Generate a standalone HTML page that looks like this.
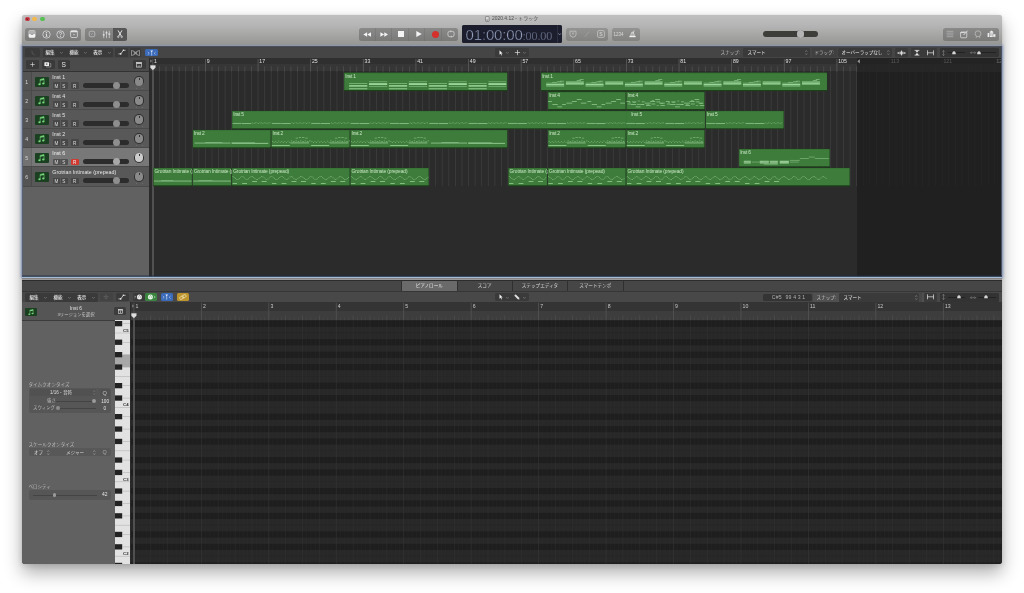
<!DOCTYPE html>
<html lang="ja"><head><meta charset="utf-8"><title>2020.4.12 - トラック</title>
<style>
html,body{margin:0;padding:0;background:#fff;width:1024px;height:593px;overflow:hidden}
body{font-family:"Liberation Sans","Noto Sans CJK JP",sans-serif;position:relative}
#win{will-change:transform;position:absolute;left:22px;top:15px;width:980px;height:548.5px;background:linear-gradient(#c0c0c0,#c0c0c0 40px,#2b2b2b 40px);border-radius:3px;overflow:hidden;box-shadow:0 0 1px rgba(0,0,0,.22),0 9px 18px rgba(0,0,0,.32),0 2px 6px rgba(0,0,0,.12)}
#win div{position:absolute;box-sizing:border-box}
#win svg{position:absolute;overflow:visible}
.t{white-space:nowrap}
.grp{background:rgba(40,40,40,.29);border-radius:2.5px}
.dk{background:#3a3a3a;border-radius:1.5px}
</style></head>
<body>
<div style="position:absolute;left:22px;top:46px;width:980px;height:231px;box-shadow:0 0 2.5px 0.6px rgba(120,150,210,.7)"></div>
<div id="win">
<div style="left:0.00px;top:0.00px;width:980.00px;height:31.50px;background:linear-gradient(#c0c0c0,#b6b6b6 30%,#a6a6a5 62%,#979795 90%,#949494)"></div>
<div style="left:2.95px;top:1.65px;width:4.70px;height:4.70px;background:#cf4048;border-radius:50%"></div>
<div style="left:10.45px;top:1.65px;width:4.70px;height:4.70px;background:#f2b94a;border-radius:50%"></div>
<div style="left:18.15px;top:1.65px;width:4.70px;height:4.70px;background:#55bf52;border-radius:50%"></div>
<svg style="left:4.00px;top:2.70px" width="2.6" height="2.6" viewBox="0 0 2.6 2.6"><path d="M0.3 0.3L2.3 2.3M2.3 0.3L0.3 2.3" stroke="#6e0f1c" stroke-width="0.8"/></svg>
<svg style="left:462.8px;top:1px" width="5" height="6" viewBox="0 0 5 6"><rect x="0.5" y="0.5" width="3.6" height="5" rx="0.6" fill="#d8d8d8" stroke="#666" stroke-width="0.6"/><rect x="1.3" y="3.6" width="2" height="1" fill="#777"/></svg>
<div class="t" style="left:470.00px;top:1.33px;font-size:4.95px;line-height:5.94px;color:#4e4e4e;">2020.4.12 - トラック</div>
<div class="grp" style="left:3.00px;top:12.80px;width:56.00px;height:12.80px;"></div>
<div class="grp" style="left:63.00px;top:12.80px;width:42.00px;height:12.80px;"></div>
<div style="left:91.00px;top:12.80px;width:14.00px;height:12.80px;background:#565656;border-radius:0 2.5px 2.5px 0"></div>
<svg style="left:6.00px;top:15.20px" width="8" height="8" viewBox="0 0 8 8" preserveAspectRatio="none"><rect x="0.9" y="0.6" width="6.2" height="6.8" rx="1" fill="#a2a2a2" stroke="#e4e4e4" stroke-width="0.6"/><path d="M0.9 4.1h1.6l0.5 1h2l0.5-1h1.6V6.4Q7.1 7.4 6.1 7.4H1.9Q0.9 7.4 0.9 6.4z" fill="#f2f2f2"/><path d="M2.2 1.9h3.6M2.2 2.9h3.6" stroke="#e4e4e4" stroke-width="0.4" opacity="0.8"/></svg>
<svg style="left:19.50px;top:14.70px" width="9" height="9" viewBox="0 0 9 9" preserveAspectRatio="none"><circle cx="4.5" cy="4.5" r="3.7" fill="none" stroke="#e4e4e4" stroke-width="0.7"/><rect x="4.05" y="3.8" width="1" height="2.7" fill="#e4e4e4"/><circle cx="4.5" cy="2.6" r="0.65" fill="#e4e4e4"/><rect x="3.5" y="3.8" width="1" height="0.5" fill="#e4e4e4"/><rect x="3.4" y="6.1" width="2.3" height="0.5" fill="#e4e4e4"/></svg>
<svg style="left:33.50px;top:14.70px" width="9" height="9" viewBox="0 0 9 9" preserveAspectRatio="none"><circle cx="4.5" cy="4.5" r="3.7" fill="none" stroke="#e4e4e4" stroke-width="0.7"/><path d="M3.3 3.5Q3.3 2.3 4.5 2.3Q5.7 2.3 5.7 3.4Q5.7 4.1 4.5 4.6V5.4" fill="none" stroke="#e4e4e4" stroke-width="0.75"/><circle cx="4.5" cy="6.4" r="0.5" fill="#e4e4e4"/></svg>
<svg style="left:48.00px;top:15.20px" width="8" height="8" viewBox="0 0 8 8" preserveAspectRatio="none"><rect x="0.6" y="0.7" width="6.8" height="6.8" rx="1.2" fill="none" stroke="#e4e4e4" stroke-width="0.7"/><rect x="0.6" y="0.7" width="6.8" height="1.5" rx="0.6" fill="#e4e4e4"/><path d="M3 4.3h2L4 5.5z" fill="#e4e4e4"/></svg>
<svg style="left:66.00px;top:15.20px" width="8" height="8" viewBox="0 0 8 8" preserveAspectRatio="none"><rect x="1.2" y="1.2" width="5.6" height="5.6" rx="1.7" fill="none" stroke="#cacaca" stroke-width="0.7"/><path d="M3.2 4.9L4.6 3.2" fill="none" stroke="#cacaca" stroke-width="0.5"/></svg>
<svg style="left:79.50px;top:14.70px" width="9" height="9" viewBox="0 0 9 9" preserveAspectRatio="none"><path d="M1.7 0.8v7.4M4.5 0.8v7.4M7.3 0.8v7.4" stroke="#e4e4e4" stroke-width="0.6"/><rect x="0.8" y="4.3" width="1.8" height="1.3" fill="#e4e4e4"/><rect x="3.6" y="2.2" width="1.8" height="1.3" fill="#e4e4e4"/><rect x="6.4" y="3.4" width="1.8" height="1.3" fill="#e4e4e4"/></svg>
<svg style="left:94.00px;top:15.20px" width="8" height="8" viewBox="0 0 8 8" preserveAspectRatio="none"><path d="M2 0.4L5.4 6.2M6 0.4L2.6 6.2" stroke="#f0f0f0" stroke-width="0.9"/><circle cx="2.3" cy="6.8" r="0.8" fill="none" stroke="#f0f0f0" stroke-width="0.6"/><circle cx="5.7" cy="6.8" r="0.8" fill="none" stroke="#f0f0f0" stroke-width="0.6"/></svg>
<div class="grp" style="left:336.50px;top:12.80px;width:99.30px;height:12.80px;"></div>
<div style="left:352.80px;top:12.80px;width:0.50px;height:12.80px;background:rgba(60,60,60,.12)"></div>
<div style="left:369.35px;top:12.80px;width:0.50px;height:12.80px;background:rgba(60,60,60,.12)"></div>
<div style="left:385.90px;top:12.80px;width:0.50px;height:12.80px;background:rgba(60,60,60,.12)"></div>
<div style="left:402.45px;top:12.80px;width:0.50px;height:12.80px;background:rgba(60,60,60,.12)"></div>
<div style="left:419.00px;top:12.80px;width:0.50px;height:12.80px;background:rgba(60,60,60,.12)"></div>
<svg style="left:340.80px;top:16.70px" width="8.4" height="5" viewBox="0 0 9 6" preserveAspectRatio="none"><path d="M4.4 0.4V5.6L0.4 3zM8.6 0.4V5.6L4.6 3z" fill="#f4f4f4"/></svg>
<svg style="left:357.80px;top:16.70px" width="8.4" height="5" viewBox="0 0 9 6" preserveAspectRatio="none"><path d="M0.4 0.4V5.6L4.4 3zM4.6 0.4V5.6L8.6 3z" fill="#f4f4f4"/></svg>
<div style="left:376.00px;top:16.20px;width:6.00px;height:6.00px;background:#f4f4f4"></div>
<svg style="left:393.50px;top:16.20px" width="6" height="6" viewBox="0 0 6 6" preserveAspectRatio="none"><path d="M0.3 0V6L5.8 3z" fill="#f4f4f4"/></svg>
<div style="left:409.80px;top:15.70px;width:7.00px;height:7.00px;background:#d4302c;border-radius:50%"></div>
<svg style="left:425.00px;top:15.20px" width="8" height="8" viewBox="0 0 8 8" preserveAspectRatio="none"><path d="M4.6 1.3H5.2A1.9 1.9 0 0 1 7.1 3.2V4.8A1.9 1.9 0 0 1 5.2 6.7H4.4M3.4 6.7H2.8A1.9 1.9 0 0 1 0.9 4.8V3.2A1.9 1.9 0 0 1 2.8 1.3H3.6" fill="none" stroke="#dedede" stroke-width="0.7"/><path d="M3.4 0.2L4.9 1.3L3.4 2.4zM4.6 5.6L3.1 6.7L4.6 7.8z" fill="#dedede"/></svg>
<div style="left:440.00px;top:9.80px;width:100.30px;height:18.00px;background:#1c1e2e;border-radius:1.5px"></div>
<div style="left:535.20px;top:9.80px;width:0.50px;height:18.00px;background:#2c3042"></div>
<div class="t" style="left:443.5px;top:9.600000000000001px;height:18.8px;line-height:19.6px;color:#a3aecb;font-size:15px;letter-spacing:-0.15px;font-weight:400;-webkit-text-stroke:0.45px #1b1d2c">01:00:00<span style="font-size:10.8px;letter-spacing:-0.1px">:00.00</span></div>
<svg style="left:536.00px;top:18.00px" width="3.4" height="2.4" viewBox="0 0 3.4 2.4" preserveAspectRatio="none"><path d="M0.3 0.3L1.7 1.9L3.1 0.3" fill="none" stroke="#a9b3cf" stroke-width="0.6"/></svg>
<div style="left:544.00px;top:12.80px;width:42.00px;height:12.80px;background:rgba(40,40,40,.21);border-radius:2.5px"></div>
<div style="left:589.60px;top:12.80px;width:28.20px;height:12.80px;background:rgba(40,40,40,.21);border-radius:2.5px"></div>
<svg style="left:547.00px;top:15.20px" width="8" height="8" viewBox="0 0 8 8" preserveAspectRatio="none"><path d="M1 1.2h6v3.4Q7 6.6 4 7.3Q1 6.6 1 4.6z" fill="none" stroke="#cdcdcd" stroke-width="0.7"/><path d="M3.1 2.6L5 4.4M5 2.6L3.1 4.4" stroke="#cdcdcd" stroke-width="0.55"/></svg>
<svg style="left:561.00px;top:15.20px" width="8" height="8" viewBox="0 0 8 8" preserveAspectRatio="none"><path d="M1.8 6.8L6.2 1.4" stroke="#a2a2a2" stroke-width="0.8"/></svg>
<svg style="left:575.00px;top:15.20px" width="8" height="8" viewBox="0 0 8 8" preserveAspectRatio="none"><rect x="0.6" y="0.6" width="6.8" height="6.8" rx="1.3" fill="none" stroke="#cdcdcd" stroke-width="0.7"/><text x="4" y="5.9" font-size="5.2" text-anchor="middle" font-weight="700" fill="#cdcdcd">S</text></svg>
<div class="t" style="left:591.60px;top:16.76px;font-size:4.5px;line-height:5.40px;color:#dadada;letter-spacing:-0.05px">1234</div>
<svg style="left:607.00px;top:15.20px" width="7" height="7.6" viewBox="0 0 7 7.6" preserveAspectRatio="none"><rect x="0.4" y="5.9" width="6.2" height="1.3" fill="#f0f0f0"/><path d="M1.6 5.9L2.8 2.2H4.2L5.4 5.9z" fill="none" stroke="#ececec" stroke-width="0.7"/><path d="M3.3 4.6L5.2 0.6" stroke="#ececec" stroke-width="0.7"/></svg>
<div style="left:740.50px;top:16.10px;width:55.00px;height:5.80px;background:#3d3e3a;border-radius:3px"></div>
<div style="left:775.00px;top:15.40px;width:7.20px;height:7.20px;background:#b4b4b4;border-radius:50%;box-shadow:0 0 0.5px #555"></div>
<div class="grp" style="left:921.00px;top:12.80px;width:55.80px;height:12.80px;"></div>
<svg style="left:923.70px;top:15.20px" width="8" height="8" viewBox="0 0 8 8" preserveAspectRatio="none"><path d="M0.6 1.3h6.8M0.6 3.1h6.8M0.6 4.9h6.8M0.6 6.7h6.8" stroke="#d4d4d4" stroke-width="0.45"/></svg>
<svg style="left:937.80px;top:14.80px" width="8.4" height="8.4" viewBox="0 0 8.4 8.4" preserveAspectRatio="none"><rect x="0.6" y="2" width="6.2" height="5.8" rx="0.9" fill="none" stroke="#e6e6e6" stroke-width="0.7"/><path d="M0.6 2.6h4.2" stroke="#e6e6e6" stroke-width="0.9"/><path d="M3.6 5L7.6 0.7" stroke="#ececec" stroke-width="0.85"/></svg>
<svg style="left:951.80px;top:15.20px" width="8" height="8" viewBox="0 0 8 8" preserveAspectRatio="none"><circle cx="4" cy="3.7" r="2.9" fill="none" stroke="#cfcfcf" stroke-width="0.6"/><path d="M2.6 6.3L1.9 7.4M5.4 6.3L6.1 7.4M1.9 7.4h1M6.1 7.4h-1" stroke="#cfcfcf" stroke-width="0.5" fill="none"/></svg>
<svg style="left:965.00px;top:15.20px" width="9" height="8" viewBox="0 0 9 8" preserveAspectRatio="none"><path d="M0.6 7V3h1.6V7zM2.8 7V1.8L4.5 0.6L6.2 1.8V7z" fill="#ececec"/><rect x="5.9" y="4.1" width="2.7" height="2.9" rx="0.5" fill="#ececec" stroke="#8a8a8a" stroke-width="0.45"/><path d="M3.7 2.6v3.4M5.1 2.6v3.4" stroke="#8a8a8a" stroke-width="0.5"/></svg>
<div style="left:0.00px;top:31.50px;width:980.00px;height:11.50px;background:#454545"></div>
<div style="left:0.00px;top:43.00px;width:127.50px;height:219.00px;background:#616161"></div>
<div style="left:0.00px;top:43.00px;width:127.50px;height:13.60px;background:#4b4b4b"></div>
<div class="dk" style="left:2.70px;top:33.10px;width:15.60px;height:8.80px;"></div>
<svg style="left:7.50px;top:34.60px" width="6" height="6" viewBox="0 0 6 6" preserveAspectRatio="none"><path d="M1.8 0.6Q1.6 4.6 4.8 5" fill="none" stroke="#5e5e5e" stroke-width="0.7"/></svg>
<div class="dk" style="left:20.60px;top:33.10px;width:70.60px;height:8.80px;"></div>
<div class="t" style="left:23.60px;top:34.76px;font-size:4.5px;line-height:5.40px;color:#e8e8e8;font-weight:500">編集</div>
<svg style="left:38.00px;top:36.90px" width="2.8" height="2.0" viewBox="0 0 2.8 2.0" preserveAspectRatio="none"><path d="M0.2 0.2L1.4 1.4L2.5999999999999996 0.2" fill="none" stroke="#9a9a9a" stroke-width="0.55"/></svg>
<div class="t" style="left:47.50px;top:34.76px;font-size:4.5px;line-height:5.40px;color:#e8e8e8;font-weight:500">機能</div>
<svg style="left:61.90px;top:36.90px" width="2.8" height="2.0" viewBox="0 0 2.8 2.0" preserveAspectRatio="none"><path d="M0.2 0.2L1.4 1.4L2.5999999999999996 0.2" fill="none" stroke="#9a9a9a" stroke-width="0.55"/></svg>
<div class="t" style="left:71.30px;top:34.76px;font-size:4.5px;line-height:5.40px;color:#e8e8e8;font-weight:500">表示</div>
<svg style="left:86.00px;top:36.90px" width="2.8" height="2.0" viewBox="0 0 2.8 2.0" preserveAspectRatio="none"><path d="M0.2 0.2L1.4 1.4L2.5999999999999996 0.2" fill="none" stroke="#9a9a9a" stroke-width="0.55"/></svg>
<div class="dk" style="left:93.30px;top:33.10px;width:12.50px;height:8.80px;"></div>
<svg style="left:95.50px;top:34.40px" width="8" height="6" viewBox="0 0 8 6" preserveAspectRatio="none"><path d="M0.4 4.9h2.3L5.4 1.3h2.2" fill="none" stroke="#e8e8e8" stroke-width="0.7"/><circle cx="2.7" cy="4.9" r="0.8" fill="#e8e8e8"/><circle cx="5.4" cy="1.3" r="0.8" fill="#e8e8e8"/></svg>
<div class="dk" style="left:107.80px;top:33.10px;width:11.60px;height:8.80px;"></div>
<svg style="left:109.20px;top:34.60px" width="9" height="6" viewBox="0 0 9 6" preserveAspectRatio="none"><path d="M0.5 0.5V5.5M0.5 0.5Q3.6 0.5 3.6 3Q3.6 5.5 0.5 5.5M8.5 0.5V5.5M8.5 0.5Q5.4 0.5 5.4 3Q5.4 5.5 8.5 5.5M3.6 1.4L5.4 4.6M5.4 1.4L3.6 4.6" fill="none" stroke="#cfcfcf" stroke-width="0.55"/></svg>
<div style="left:123.00px;top:33.50px;width:12.60px;height:7.90px;background:#3b6bb8;border-radius:1.5px"></div>
<svg style="left:124.60px;top:34.60px" width="9.4" height="6" viewBox="0 0 9.4 6" preserveAspectRatio="none"><path d="M3.4 0.6h2.6L4.7 2.4z" fill="#e8f0ff"/><path d="M4.7 2.2V5.6" stroke="#e8f0ff" stroke-width="0.6"/><path d="M0.8 2L2.2 3.3L0.8 4.6M8.6 2L7.2 3.3L8.6 4.6" fill="none" stroke="#d8e4ff" stroke-width="0.55"/></svg>
<div class="dk" style="left:473.40px;top:33.40px;width:33.20px;height:8.40px;"></div>
<svg style="left:477.00px;top:34.80px" width="4" height="6" viewBox="0 0 4 6" preserveAspectRatio="none"><path d="M0.5 0.3V4.7L1.6 3.7L2.4 5.6L3 5.3L2.2 3.5H3.7z" fill="#f0f0f0"/></svg>
<svg style="left:484.10px;top:37.00px" width="2.8" height="2.0" viewBox="0 0 2.8 2.0" preserveAspectRatio="none"><path d="M0.2 0.2L1.4 1.4L2.5999999999999996 0.2" fill="none" stroke="#9a9a9a" stroke-width="0.55"/></svg>
<svg style="left:492.00px;top:34.00px" width="7" height="7" viewBox="0 0 7 7" preserveAspectRatio="none"><path d="M3.5 1V6.2M0.9 3.5H6.1" stroke="#dcdcdc" stroke-width="0.7"/></svg>
<svg style="left:501.30px;top:37.00px" width="2.8" height="2.0" viewBox="0 0 2.8 2.0" preserveAspectRatio="none"><path d="M0.2 0.2L1.4 1.4L2.5999999999999996 0.2" fill="none" stroke="#9a9a9a" stroke-width="0.55"/></svg>
<div class="t" style="left:698.60px;top:34.71px;font-size:4.55px;line-height:5.46px;color:#bdbdbd;">スナップ:</div>
<div class="dk" style="left:721.00px;top:33.10px;width:67.20px;height:8.80px;"></div>
<div class="t" style="left:725.50px;top:34.71px;font-size:4.55px;line-height:5.46px;color:#e8e8e8;">スマート</div>
<svg style="left:782.70px;top:34.80px" width="2.6" height="5.2" viewBox="0 0 2.6 5.2" preserveAspectRatio="none"><path d="M0.3 1.8L1.3 0.5L2.3 1.8M0.3 3.4L1.3 4.7L2.3 3.4" fill="none" stroke="#9a9a9a" stroke-width="0.5"/></svg>
<div style="left:790.00px;top:33.10px;width:25.00px;height:8.80px;background:#404040"></div>
<div class="t" style="left:792.50px;top:34.71px;font-size:4.55px;line-height:5.46px;color:#bdbdbd;">ドラッグ:</div>
<div class="dk" style="left:815.50px;top:33.10px;width:54.50px;height:8.80px;"></div>
<div class="t" style="left:819.50px;top:34.71px;font-size:4.55px;line-height:5.46px;color:#e8e8e8;">オーバーラップなし</div>
<svg style="left:864.70px;top:34.80px" width="2.6" height="5.2" viewBox="0 0 2.6 5.2" preserveAspectRatio="none"><path d="M0.3 1.8L1.3 0.5L2.3 1.8M0.3 3.4L1.3 4.7L2.3 3.4" fill="none" stroke="#9a9a9a" stroke-width="0.5"/></svg>
<div class="dk" style="left:873.00px;top:33.10px;width:13.40px;height:8.80px;"></div>
<svg style="left:875.20px;top:34.60px" width="9" height="6" viewBox="0 0 9 6" preserveAspectRatio="none"><path d="M0.4 3H8.6" stroke="#e8e8e8" stroke-width="0.5"/><path d="M3.2 1.6v2.8M4.5 0.6v4.8M5.8 1.6v2.8" stroke="#e8e8e8" stroke-width="0.9"/><path d="M0.3 3L1.7 2v2zM8.7 3L7.3 2v2z" fill="#e8e8e8"/></svg>
<div class="dk" style="left:889.00px;top:33.10px;width:25.50px;height:8.80px;"></div>
<svg style="left:892.20px;top:34.80px" width="6" height="5.6" viewBox="0 0 6 5.6" preserveAspectRatio="none"><path d="M0.6 0.4H5.4M0.6 5.2H5.4" stroke="#e8e8e8" stroke-width="0.7"/><path d="M1.4 0.6L3 2.8L4.6 0.6zM1.4 5L3 2.8L4.6 5z" fill="#e8e8e8"/></svg>
<svg style="left:904.60px;top:34.80px" width="7" height="5.6" viewBox="0 0 7 5.6" preserveAspectRatio="none"><path d="M0.5 0.3V5.3M6.5 0.3V5.3M0.5 2.8H6.5" stroke="#e8e8e8" stroke-width="0.7" fill="none"/></svg>
<div style="left:917.50px;top:33.10px;width:59.50px;height:8.80px;background:#333;border-radius:1.5px"></div>
<svg style="left:920.20px;top:34.60px" width="3" height="6" viewBox="0 0 3 6" preserveAspectRatio="none"><path d="M1.5 0.4V5.6M0.4 1.6L1.5 0.4L2.6 1.6M0.4 4.4L1.5 5.6L2.6 4.4" fill="none" stroke="#8c8c8c" stroke-width="0.55"/></svg>
<div style="left:926.00px;top:37.20px;width:16.50px;height:0.50px;background:#222"></div>
<svg style="left:930.40px;top:35.60px" width="4" height="3.4" viewBox="0 0 4 3.4" preserveAspectRatio="none"><path d="M0.2 3.2Q0.2 0.2 2 0.2Q3.8 0.2 3.8 3.2z" fill="#d6d6d6"/></svg>
<svg style="left:947.50px;top:35.80px" width="6" height="3.4" viewBox="0 0 6 3.4" preserveAspectRatio="none"><path d="M0.4 1.7H5.6M1.6 0.5L0.4 1.7L1.6 2.9M4.4 0.5L5.6 1.7L4.4 2.9" fill="none" stroke="#8c8c8c" stroke-width="0.55"/></svg>
<div style="left:956.00px;top:37.20px;width:18.00px;height:0.50px;background:#222"></div>
<svg style="left:955.20px;top:35.60px" width="4" height="3.4" viewBox="0 0 4 3.4" preserveAspectRatio="none"><path d="M0.2 3.2Q0.2 0.2 2 0.2Q3.8 0.2 3.8 3.2z" fill="#d6d6d6"/></svg>
<div style="left:4.00px;top:45.40px;width:13.00px;height:8.40px;background:#3a3a3a;border-radius:1.5px"></div>
<svg style="left:8.00px;top:47.10px" width="5" height="5" viewBox="0 0 5 5" preserveAspectRatio="none"><path d="M2.5 0.3V4.7M0.3 2.5H4.7" stroke="#e6e6e6" stroke-width="0.6"/></svg>
<div style="left:19.90px;top:45.40px;width:12.80px;height:8.40px;background:#3a3a3a;border-radius:1.5px"></div>
<svg style="left:22.40px;top:46.90px" width="8" height="5.6" viewBox="0 0 8 5.6" preserveAspectRatio="none"><rect x="0.4" y="0.3" width="4.6" height="3.6" rx="0.5" fill="#efefef"/><path d="M2.7 1.2v1.8M1.8 2.1h1.8" stroke="#3a3a3a" stroke-width="0.5"/><path d="M5.6 1.6h1.2v3.4H2.4V4.4" fill="none" stroke="#cfcfcf" stroke-width="0.5"/></svg>
<div style="left:35.50px;top:45.40px;width:12.80px;height:8.40px;background:#3a3a3a;border-radius:1.5px"></div>
<div class="t" style="left:39.60px;top:45.77px;font-size:6.6px;line-height:7.92px;color:#e8e8e8;">S</div>
<div style="left:110.80px;top:45.40px;width:13.00px;height:8.40px;background:#3a3a3a;border-radius:1.5px"></div>
<svg style="left:114.30px;top:46.80px" width="6" height="5.6" viewBox="0 0 6 5.6" preserveAspectRatio="none"><rect x="0.5" y="0.5" width="5" height="4.6" fill="none" stroke="#e0e0e0" stroke-width="0.6"/><rect x="0.5" y="0.5" width="5" height="1.3" fill="#e0e0e0"/><path d="M2.2 3.4v1.7M3.8 3.4v1.7" stroke="#e0e0e0" stroke-width="0.5"/></svg>
<div style="left:0.00px;top:56.30px;width:127.50px;height:0.60px;background:#333"></div>
<div style="left:0.00px;top:56.80px;width:127.50px;height:19.05px;background:#585858"></div>
<div style="left:0.00px;top:56.80px;width:9.00px;height:19.05px;background:#545454"></div>
<div style="left:9.00px;top:56.80px;width:0.50px;height:19.05px;background:rgba(0,0,0,.15)"></div>
<div style="left:0.00px;top:75.25px;width:127.50px;height:0.60px;background:#4a4a4a"></div>
<div class="t" style="left:3.20px;top:64.10px;font-size:5.2px;line-height:6.24px;color:#d6d6d6;">1</div>
<div style="left:12.80px;top:61.60px;width:14.00px;height:10.60px;background:#1b4021;border-radius:1px"></div>
<svg style="left:16.30px;top:63.00px" width="7" height="8" viewBox="0 0 7 8" preserveAspectRatio="none"><path d="M2.2 6.2V1.4L6 0.6V5.4" fill="none" stroke="#78d67c" stroke-width="0.6"/><path d="M2.2 1.4L6 0.6V2L2.2 2.8z" fill="#78d67c"/><ellipse cx="1.5" cy="6.3" rx="1.2" ry="0.95" fill="#78d67c"/><ellipse cx="5.3" cy="5.5" rx="1.2" ry="0.95" fill="#78d67c"/></svg>
<div class="t" style="left:30.30px;top:59.00px;font-size:5.3px;line-height:6.36px;color:#e6e6e6;">Inst 1</div>
<div style="left:30.70px;top:67.30px;width:15.00px;height:6.30px;background:#474747;border-radius:1px"></div>
<div style="left:38.20px;top:67.30px;width:0.40px;height:6.30px;background:#5a5a5a"></div>
<div class="t" style="left:32.50px;top:68.67px;font-size:4.6px;line-height:5.52px;color:#dcdcdc;">M</div>
<div class="t" style="left:40.30px;top:68.67px;font-size:4.6px;line-height:5.52px;color:#dcdcdc;">S</div>
<div style="left:48.70px;top:67.30px;width:8.20px;height:6.30px;background:#474747;border-radius:1px"></div>
<div class="t" style="left:51.10px;top:68.67px;font-size:4.6px;line-height:5.52px;color:#dcdcdc;">R</div>
<div style="left:60.90px;top:67.90px;width:46.60px;height:5.20px;background:#2c2c2c;border-radius:2.6px"></div>
<div style="left:90.80px;top:67.00px;width:7.00px;height:7.00px;background:#8e8e8e;border-radius:50%"></div>
<div style="left:111.90px;top:61.30px;width:10.20px;height:10.20px;background:#2e2e2e;border-radius:50%"></div>
<div style="left:112.80px;top:62.20px;width:8.40px;height:8.40px;background:#8a8a8a;border-radius:50%"></div>
<div style="left:116.70px;top:62.60px;width:0.60px;height:2.60px;background:#333"></div>
<div style="left:114.00px;top:72.60px;width:0.50px;height:0.80px;background:#6c6c6c"></div>
<div style="left:119.60px;top:72.60px;width:0.50px;height:0.80px;background:#6c6c6c"></div>
<div style="left:0.00px;top:75.85px;width:127.50px;height:19.05px;background:#585858"></div>
<div style="left:0.00px;top:75.85px;width:9.00px;height:19.05px;background:#545454"></div>
<div style="left:9.00px;top:75.85px;width:0.50px;height:19.05px;background:rgba(0,0,0,.15)"></div>
<div style="left:0.00px;top:94.30px;width:127.50px;height:0.60px;background:#4a4a4a"></div>
<div class="t" style="left:3.20px;top:83.10px;font-size:5.2px;line-height:6.24px;color:#d6d6d6;">2</div>
<div style="left:12.80px;top:80.65px;width:14.00px;height:10.60px;background:#1b4021;border-radius:1px"></div>
<svg style="left:16.30px;top:82.05px" width="7" height="8" viewBox="0 0 7 8" preserveAspectRatio="none"><path d="M2.2 6.2V1.4L6 0.6V5.4" fill="none" stroke="#78d67c" stroke-width="0.6"/><path d="M2.2 1.4L6 0.6V2L2.2 2.8z" fill="#78d67c"/><ellipse cx="1.5" cy="6.3" rx="1.2" ry="0.95" fill="#78d67c"/><ellipse cx="5.3" cy="5.5" rx="1.2" ry="0.95" fill="#78d67c"/></svg>
<div class="t" style="left:30.30px;top:78.00px;font-size:5.3px;line-height:6.36px;color:#e6e6e6;">Inst 4</div>
<div style="left:30.70px;top:86.35px;width:15.00px;height:6.30px;background:#474747;border-radius:1px"></div>
<div style="left:38.20px;top:86.35px;width:0.40px;height:6.30px;background:#5a5a5a"></div>
<div class="t" style="left:32.50px;top:87.67px;font-size:4.6px;line-height:5.52px;color:#dcdcdc;">M</div>
<div class="t" style="left:40.30px;top:87.67px;font-size:4.6px;line-height:5.52px;color:#dcdcdc;">S</div>
<div style="left:48.70px;top:86.35px;width:8.20px;height:6.30px;background:#474747;border-radius:1px"></div>
<div class="t" style="left:51.10px;top:87.67px;font-size:4.6px;line-height:5.52px;color:#dcdcdc;">R</div>
<div style="left:60.90px;top:86.95px;width:46.60px;height:5.20px;background:#2c2c2c;border-radius:2.6px"></div>
<div style="left:90.80px;top:86.05px;width:7.00px;height:7.00px;background:#8e8e8e;border-radius:50%"></div>
<div style="left:111.90px;top:80.35px;width:10.20px;height:10.20px;background:#2e2e2e;border-radius:50%"></div>
<div style="left:112.80px;top:81.25px;width:8.40px;height:8.40px;background:#8a8a8a;border-radius:50%"></div>
<div style="left:116.70px;top:81.65px;width:0.60px;height:2.60px;background:#333"></div>
<div style="left:114.00px;top:91.65px;width:0.50px;height:0.80px;background:#6c6c6c"></div>
<div style="left:119.60px;top:91.65px;width:0.50px;height:0.80px;background:#6c6c6c"></div>
<div style="left:0.00px;top:94.90px;width:127.50px;height:19.05px;background:#585858"></div>
<div style="left:0.00px;top:94.90px;width:9.00px;height:19.05px;background:#545454"></div>
<div style="left:9.00px;top:94.90px;width:0.50px;height:19.05px;background:rgba(0,0,0,.15)"></div>
<div style="left:0.00px;top:113.35px;width:127.50px;height:0.60px;background:#4a4a4a"></div>
<div class="t" style="left:3.20px;top:102.10px;font-size:5.2px;line-height:6.24px;color:#d6d6d6;">3</div>
<div style="left:12.80px;top:99.70px;width:14.00px;height:10.60px;background:#1b4021;border-radius:1px"></div>
<svg style="left:16.30px;top:101.10px" width="7" height="8" viewBox="0 0 7 8" preserveAspectRatio="none"><path d="M2.2 6.2V1.4L6 0.6V5.4" fill="none" stroke="#78d67c" stroke-width="0.6"/><path d="M2.2 1.4L6 0.6V2L2.2 2.8z" fill="#78d67c"/><ellipse cx="1.5" cy="6.3" rx="1.2" ry="0.95" fill="#78d67c"/><ellipse cx="5.3" cy="5.5" rx="1.2" ry="0.95" fill="#78d67c"/></svg>
<div class="t" style="left:30.30px;top:97.00px;font-size:5.3px;line-height:6.36px;color:#e6e6e6;">Inst 5</div>
<div style="left:30.70px;top:105.40px;width:15.00px;height:6.30px;background:#474747;border-radius:1px"></div>
<div style="left:38.20px;top:105.40px;width:0.40px;height:6.30px;background:#5a5a5a"></div>
<div class="t" style="left:32.50px;top:106.67px;font-size:4.6px;line-height:5.52px;color:#dcdcdc;">M</div>
<div class="t" style="left:40.30px;top:106.67px;font-size:4.6px;line-height:5.52px;color:#dcdcdc;">S</div>
<div style="left:48.70px;top:105.40px;width:8.20px;height:6.30px;background:#474747;border-radius:1px"></div>
<div class="t" style="left:51.10px;top:106.67px;font-size:4.6px;line-height:5.52px;color:#dcdcdc;">R</div>
<div style="left:60.90px;top:106.00px;width:46.60px;height:5.20px;background:#2c2c2c;border-radius:2.6px"></div>
<div style="left:90.80px;top:105.10px;width:7.00px;height:7.00px;background:#8e8e8e;border-radius:50%"></div>
<div style="left:111.90px;top:99.40px;width:10.20px;height:10.20px;background:#2e2e2e;border-radius:50%"></div>
<div style="left:112.80px;top:100.30px;width:8.40px;height:8.40px;background:#8a8a8a;border-radius:50%"></div>
<div style="left:116.70px;top:100.70px;width:0.60px;height:2.60px;background:#333"></div>
<div style="left:114.00px;top:110.70px;width:0.50px;height:0.80px;background:#6c6c6c"></div>
<div style="left:119.60px;top:110.70px;width:0.50px;height:0.80px;background:#6c6c6c"></div>
<div style="left:0.00px;top:113.95px;width:127.50px;height:19.05px;background:#585858"></div>
<div style="left:0.00px;top:113.95px;width:9.00px;height:19.05px;background:#545454"></div>
<div style="left:9.00px;top:113.95px;width:0.50px;height:19.05px;background:rgba(0,0,0,.15)"></div>
<div style="left:0.00px;top:132.40px;width:127.50px;height:0.60px;background:#4a4a4a"></div>
<div class="t" style="left:3.20px;top:121.10px;font-size:5.2px;line-height:6.24px;color:#d6d6d6;">4</div>
<div style="left:12.80px;top:118.75px;width:14.00px;height:10.60px;background:#1b4021;border-radius:1px"></div>
<svg style="left:16.30px;top:120.15px" width="7" height="8" viewBox="0 0 7 8" preserveAspectRatio="none"><path d="M2.2 6.2V1.4L6 0.6V5.4" fill="none" stroke="#78d67c" stroke-width="0.6"/><path d="M2.2 1.4L6 0.6V2L2.2 2.8z" fill="#78d67c"/><ellipse cx="1.5" cy="6.3" rx="1.2" ry="0.95" fill="#78d67c"/><ellipse cx="5.3" cy="5.5" rx="1.2" ry="0.95" fill="#78d67c"/></svg>
<div class="t" style="left:30.30px;top:116.00px;font-size:5.3px;line-height:6.36px;color:#e6e6e6;">Inst 2</div>
<div style="left:30.70px;top:124.45px;width:15.00px;height:6.30px;background:#474747;border-radius:1px"></div>
<div style="left:38.20px;top:124.45px;width:0.40px;height:6.30px;background:#5a5a5a"></div>
<div class="t" style="left:32.50px;top:125.67px;font-size:4.6px;line-height:5.52px;color:#dcdcdc;">M</div>
<div class="t" style="left:40.30px;top:125.67px;font-size:4.6px;line-height:5.52px;color:#dcdcdc;">S</div>
<div style="left:48.70px;top:124.45px;width:8.20px;height:6.30px;background:#474747;border-radius:1px"></div>
<div class="t" style="left:51.10px;top:125.67px;font-size:4.6px;line-height:5.52px;color:#dcdcdc;">R</div>
<div style="left:60.90px;top:125.05px;width:46.60px;height:5.20px;background:#2c2c2c;border-radius:2.6px"></div>
<div style="left:90.80px;top:124.15px;width:7.00px;height:7.00px;background:#8e8e8e;border-radius:50%"></div>
<div style="left:111.90px;top:118.45px;width:10.20px;height:10.20px;background:#2e2e2e;border-radius:50%"></div>
<div style="left:112.80px;top:119.35px;width:8.40px;height:8.40px;background:#8a8a8a;border-radius:50%"></div>
<div style="left:116.70px;top:119.75px;width:0.60px;height:2.60px;background:#333"></div>
<div style="left:114.00px;top:129.75px;width:0.50px;height:0.80px;background:#6c6c6c"></div>
<div style="left:119.60px;top:129.75px;width:0.50px;height:0.80px;background:#6c6c6c"></div>
<div style="left:0.00px;top:133.00px;width:127.50px;height:19.05px;background:#787878"></div>
<div style="left:0.00px;top:133.00px;width:9.00px;height:19.05px;background:#727272"></div>
<div style="left:9.00px;top:133.00px;width:0.50px;height:19.05px;background:rgba(0,0,0,.15)"></div>
<div style="left:0.00px;top:151.45px;width:127.50px;height:0.60px;background:#4a4a4a"></div>
<div class="t" style="left:3.20px;top:140.10px;font-size:5.2px;line-height:6.24px;color:#d6d6d6;">5</div>
<div style="left:12.80px;top:137.80px;width:14.00px;height:10.60px;background:#1b4021;border-radius:1px"></div>
<svg style="left:16.30px;top:139.20px" width="7" height="8" viewBox="0 0 7 8" preserveAspectRatio="none"><path d="M2.2 6.2V1.4L6 0.6V5.4" fill="none" stroke="#78d67c" stroke-width="0.6"/><path d="M2.2 1.4L6 0.6V2L2.2 2.8z" fill="#78d67c"/><ellipse cx="1.5" cy="6.3" rx="1.2" ry="0.95" fill="#78d67c"/><ellipse cx="5.3" cy="5.5" rx="1.2" ry="0.95" fill="#78d67c"/></svg>
<div class="t" style="left:30.30px;top:135.00px;font-size:5.3px;line-height:6.36px;color:#f2f2f2;">Inst 6</div>
<div style="left:30.70px;top:143.50px;width:15.00px;height:6.30px;background:#505050;border-radius:1px"></div>
<div style="left:38.20px;top:143.50px;width:0.40px;height:6.30px;background:#5a5a5a"></div>
<div class="t" style="left:32.50px;top:144.67px;font-size:4.6px;line-height:5.52px;color:#dcdcdc;">M</div>
<div class="t" style="left:40.30px;top:144.67px;font-size:4.6px;line-height:5.52px;color:#dcdcdc;">S</div>
<div style="left:48.70px;top:143.50px;width:8.20px;height:6.30px;background:#d03a30;border-radius:1px"></div>
<div class="t" style="left:51.10px;top:144.67px;font-size:4.6px;line-height:5.52px;color:#f4f4f4;">R</div>
<div style="left:60.90px;top:144.10px;width:46.60px;height:5.20px;background:#2c2c2c;border-radius:2.6px"></div>
<div style="left:90.80px;top:143.20px;width:7.00px;height:7.00px;background:#a8a8a8;border-radius:50%"></div>
<div style="left:111.90px;top:137.50px;width:10.20px;height:10.20px;background:#2e2e2e;border-radius:50%"></div>
<div style="left:112.80px;top:138.40px;width:8.40px;height:8.40px;background:#cdcdcd;border-radius:50%"></div>
<div style="left:116.70px;top:138.80px;width:0.60px;height:2.60px;background:#333"></div>
<div style="left:114.00px;top:148.80px;width:0.50px;height:0.80px;background:#6c6c6c"></div>
<div style="left:119.60px;top:148.80px;width:0.50px;height:0.80px;background:#6c6c6c"></div>
<div style="left:0.00px;top:152.05px;width:127.50px;height:19.05px;background:#585858"></div>
<div style="left:0.00px;top:152.05px;width:9.00px;height:19.05px;background:#545454"></div>
<div style="left:9.00px;top:152.05px;width:0.50px;height:19.05px;background:rgba(0,0,0,.15)"></div>
<div style="left:0.00px;top:170.50px;width:127.50px;height:0.60px;background:#4a4a4a"></div>
<div class="t" style="left:3.20px;top:159.10px;font-size:5.2px;line-height:6.24px;color:#d6d6d6;">6</div>
<div style="left:12.80px;top:156.85px;width:14.00px;height:10.60px;background:#1b4021;border-radius:1px"></div>
<svg style="left:16.30px;top:158.25px" width="7" height="8" viewBox="0 0 7 8" preserveAspectRatio="none"><path d="M2.2 6.2V1.4L6 0.6V5.4" fill="none" stroke="#78d67c" stroke-width="0.6"/><path d="M2.2 1.4L6 0.6V2L2.2 2.8z" fill="#78d67c"/><ellipse cx="1.5" cy="6.3" rx="1.2" ry="0.95" fill="#78d67c"/><ellipse cx="5.3" cy="5.5" rx="1.2" ry="0.95" fill="#78d67c"/></svg>
<div class="t" style="left:30.30px;top:154.00px;font-size:5.3px;line-height:6.36px;color:#e6e6e6;">Grotrian Intimate (prepead)</div>
<div style="left:30.70px;top:162.55px;width:15.00px;height:6.30px;background:#474747;border-radius:1px"></div>
<div style="left:38.20px;top:162.55px;width:0.40px;height:6.30px;background:#5a5a5a"></div>
<div class="t" style="left:32.50px;top:163.67px;font-size:4.6px;line-height:5.52px;color:#dcdcdc;">M</div>
<div class="t" style="left:40.30px;top:163.67px;font-size:4.6px;line-height:5.52px;color:#dcdcdc;">S</div>
<div style="left:48.70px;top:162.55px;width:8.20px;height:6.30px;background:#474747;border-radius:1px"></div>
<div class="t" style="left:51.10px;top:163.67px;font-size:4.6px;line-height:5.52px;color:#dcdcdc;">R</div>
<div style="left:60.90px;top:163.15px;width:46.60px;height:5.20px;background:#2c2c2c;border-radius:2.6px"></div>
<div style="left:90.80px;top:162.25px;width:7.00px;height:7.00px;background:#8e8e8e;border-radius:50%"></div>
<div style="left:111.90px;top:156.55px;width:10.20px;height:10.20px;background:#2e2e2e;border-radius:50%"></div>
<div style="left:112.80px;top:157.45px;width:8.40px;height:8.40px;background:#8a8a8a;border-radius:50%"></div>
<div style="left:116.70px;top:157.85px;width:0.60px;height:2.60px;background:#333"></div>
<div style="left:114.00px;top:167.85px;width:0.50px;height:0.80px;background:#6c6c6c"></div>
<div style="left:119.60px;top:167.85px;width:0.50px;height:0.80px;background:#6c6c6c"></div>
<div style="left:127.50px;top:43.00px;width:3.30px;height:219.00px;background:#333"></div>
<div style="left:127.20px;top:43.00px;width:0.80px;height:219.00px;background:#2a2a2a"></div>
<div style="left:128.00px;top:43.00px;width:706.70px;height:219.00px;background:#2b2b2b"></div>
<div style="left:834.70px;top:43.00px;width:145.30px;height:219.00px;background:#202020"></div>
<div style="left:128.00px;top:43.00px;width:706.70px;height:6.20px;background:#2f2f2f"></div>
<div style="left:128.00px;top:49.20px;width:706.70px;height:7.30px;background:#363636"></div>
<div style="left:834.70px;top:43.00px;width:145.30px;height:6.40px;background:#232323"></div>
<div style="left:834.70px;top:49.40px;width:145.30px;height:7.30px;background:#262626"></div>
<svg style="left:128.00px;top:43.00px" width="852" height="219" viewBox="0 0 852 219" preserveAspectRatio="none"><rect x="2.40" y="13.700000000000003" width="0.8" height="114.5" fill="#3e3e3e"/><rect x="2.40" y="1" width="0.8" height="12.7" fill="#5c5c5c"/><rect x="8.98" y="13.700000000000003" width="0.8" height="114.5" fill="#3e3e3e"/><rect x="8.98" y="8.200000000000003" width="0.8" height="5.5" fill="#4e4e4e"/><rect x="15.56" y="13.700000000000003" width="0.8" height="114.5" fill="#3e3e3e"/><rect x="15.56" y="8.200000000000003" width="0.8" height="5.5" fill="#4e4e4e"/><rect x="22.13" y="13.700000000000003" width="0.8" height="114.5" fill="#3e3e3e"/><rect x="22.13" y="8.200000000000003" width="0.8" height="5.5" fill="#4e4e4e"/><rect x="28.71" y="13.700000000000003" width="0.8" height="114.5" fill="#3e3e3e"/><rect x="28.71" y="8.200000000000003" width="0.8" height="5.5" fill="#4e4e4e"/><rect x="35.29" y="13.700000000000003" width="0.8" height="114.5" fill="#3e3e3e"/><rect x="35.29" y="8.200000000000003" width="0.8" height="5.5" fill="#4e4e4e"/><rect x="41.87" y="13.700000000000003" width="0.8" height="114.5" fill="#3e3e3e"/><rect x="41.87" y="8.200000000000003" width="0.8" height="5.5" fill="#4e4e4e"/><rect x="48.45" y="13.700000000000003" width="0.8" height="114.5" fill="#3e3e3e"/><rect x="48.45" y="8.200000000000003" width="0.8" height="5.5" fill="#4e4e4e"/><rect x="55.02" y="13.700000000000003" width="0.8" height="114.5" fill="#3e3e3e"/><rect x="55.02" y="1" width="0.8" height="12.7" fill="#5c5c5c"/><rect x="61.60" y="13.700000000000003" width="0.8" height="114.5" fill="#3e3e3e"/><rect x="61.60" y="8.200000000000003" width="0.8" height="5.5" fill="#4e4e4e"/><rect x="68.18" y="13.700000000000003" width="0.8" height="114.5" fill="#3e3e3e"/><rect x="68.18" y="8.200000000000003" width="0.8" height="5.5" fill="#4e4e4e"/><rect x="74.76" y="13.700000000000003" width="0.8" height="114.5" fill="#3e3e3e"/><rect x="74.76" y="8.200000000000003" width="0.8" height="5.5" fill="#4e4e4e"/><rect x="81.34" y="13.700000000000003" width="0.8" height="114.5" fill="#3e3e3e"/><rect x="81.34" y="8.200000000000003" width="0.8" height="5.5" fill="#4e4e4e"/><rect x="87.91" y="13.700000000000003" width="0.8" height="114.5" fill="#3e3e3e"/><rect x="87.91" y="8.200000000000003" width="0.8" height="5.5" fill="#4e4e4e"/><rect x="94.49" y="13.700000000000003" width="0.8" height="114.5" fill="#3e3e3e"/><rect x="94.49" y="8.200000000000003" width="0.8" height="5.5" fill="#4e4e4e"/><rect x="101.07" y="13.700000000000003" width="0.8" height="114.5" fill="#3e3e3e"/><rect x="101.07" y="8.200000000000003" width="0.8" height="5.5" fill="#4e4e4e"/><rect x="107.65" y="13.700000000000003" width="0.8" height="114.5" fill="#3e3e3e"/><rect x="107.65" y="1" width="0.8" height="12.7" fill="#5c5c5c"/><rect x="114.23" y="13.700000000000003" width="0.8" height="114.5" fill="#3e3e3e"/><rect x="114.23" y="8.200000000000003" width="0.8" height="5.5" fill="#4e4e4e"/><rect x="120.80" y="13.700000000000003" width="0.8" height="114.5" fill="#3e3e3e"/><rect x="120.80" y="8.200000000000003" width="0.8" height="5.5" fill="#4e4e4e"/><rect x="127.38" y="13.700000000000003" width="0.8" height="114.5" fill="#3e3e3e"/><rect x="127.38" y="8.200000000000003" width="0.8" height="5.5" fill="#4e4e4e"/><rect x="133.96" y="13.700000000000003" width="0.8" height="114.5" fill="#3e3e3e"/><rect x="133.96" y="8.200000000000003" width="0.8" height="5.5" fill="#4e4e4e"/><rect x="140.54" y="13.700000000000003" width="0.8" height="114.5" fill="#3e3e3e"/><rect x="140.54" y="8.200000000000003" width="0.8" height="5.5" fill="#4e4e4e"/><rect x="147.12" y="13.700000000000003" width="0.8" height="114.5" fill="#3e3e3e"/><rect x="147.12" y="8.200000000000003" width="0.8" height="5.5" fill="#4e4e4e"/><rect x="153.69" y="13.700000000000003" width="0.8" height="114.5" fill="#3e3e3e"/><rect x="153.69" y="8.200000000000003" width="0.8" height="5.5" fill="#4e4e4e"/><rect x="160.27" y="13.700000000000003" width="0.8" height="114.5" fill="#3e3e3e"/><rect x="160.27" y="1" width="0.8" height="12.7" fill="#5c5c5c"/><rect x="166.85" y="13.700000000000003" width="0.8" height="114.5" fill="#3e3e3e"/><rect x="166.85" y="8.200000000000003" width="0.8" height="5.5" fill="#4e4e4e"/><rect x="173.43" y="13.700000000000003" width="0.8" height="114.5" fill="#3e3e3e"/><rect x="173.43" y="8.200000000000003" width="0.8" height="5.5" fill="#4e4e4e"/><rect x="180.01" y="13.700000000000003" width="0.8" height="114.5" fill="#3e3e3e"/><rect x="180.01" y="8.200000000000003" width="0.8" height="5.5" fill="#4e4e4e"/><rect x="186.58" y="13.700000000000003" width="0.8" height="114.5" fill="#3e3e3e"/><rect x="186.58" y="8.200000000000003" width="0.8" height="5.5" fill="#4e4e4e"/><rect x="193.16" y="13.700000000000003" width="0.8" height="114.5" fill="#3e3e3e"/><rect x="193.16" y="8.200000000000003" width="0.8" height="5.5" fill="#4e4e4e"/><rect x="199.74" y="13.700000000000003" width="0.8" height="114.5" fill="#3e3e3e"/><rect x="199.74" y="8.200000000000003" width="0.8" height="5.5" fill="#4e4e4e"/><rect x="206.32" y="13.700000000000003" width="0.8" height="114.5" fill="#3e3e3e"/><rect x="206.32" y="8.200000000000003" width="0.8" height="5.5" fill="#4e4e4e"/><rect x="212.90" y="13.700000000000003" width="0.8" height="114.5" fill="#3e3e3e"/><rect x="212.90" y="1" width="0.8" height="12.7" fill="#5c5c5c"/><rect x="219.47" y="13.700000000000003" width="0.8" height="114.5" fill="#3e3e3e"/><rect x="219.47" y="8.200000000000003" width="0.8" height="5.5" fill="#4e4e4e"/><rect x="226.05" y="13.700000000000003" width="0.8" height="114.5" fill="#3e3e3e"/><rect x="226.05" y="8.200000000000003" width="0.8" height="5.5" fill="#4e4e4e"/><rect x="232.63" y="13.700000000000003" width="0.8" height="114.5" fill="#3e3e3e"/><rect x="232.63" y="8.200000000000003" width="0.8" height="5.5" fill="#4e4e4e"/><rect x="239.21" y="13.700000000000003" width="0.8" height="114.5" fill="#3e3e3e"/><rect x="239.21" y="8.200000000000003" width="0.8" height="5.5" fill="#4e4e4e"/><rect x="245.79" y="13.700000000000003" width="0.8" height="114.5" fill="#3e3e3e"/><rect x="245.79" y="8.200000000000003" width="0.8" height="5.5" fill="#4e4e4e"/><rect x="252.36" y="13.700000000000003" width="0.8" height="114.5" fill="#3e3e3e"/><rect x="252.36" y="8.200000000000003" width="0.8" height="5.5" fill="#4e4e4e"/><rect x="258.94" y="13.700000000000003" width="0.8" height="114.5" fill="#3e3e3e"/><rect x="258.94" y="8.200000000000003" width="0.8" height="5.5" fill="#4e4e4e"/><rect x="265.52" y="13.700000000000003" width="0.8" height="114.5" fill="#3e3e3e"/><rect x="265.52" y="1" width="0.8" height="12.7" fill="#5c5c5c"/><rect x="272.10" y="13.700000000000003" width="0.8" height="114.5" fill="#3e3e3e"/><rect x="272.10" y="8.200000000000003" width="0.8" height="5.5" fill="#4e4e4e"/><rect x="278.68" y="13.700000000000003" width="0.8" height="114.5" fill="#3e3e3e"/><rect x="278.68" y="8.200000000000003" width="0.8" height="5.5" fill="#4e4e4e"/><rect x="285.25" y="13.700000000000003" width="0.8" height="114.5" fill="#3e3e3e"/><rect x="285.25" y="8.200000000000003" width="0.8" height="5.5" fill="#4e4e4e"/><rect x="291.83" y="13.700000000000003" width="0.8" height="114.5" fill="#3e3e3e"/><rect x="291.83" y="8.200000000000003" width="0.8" height="5.5" fill="#4e4e4e"/><rect x="298.41" y="13.700000000000003" width="0.8" height="114.5" fill="#3e3e3e"/><rect x="298.41" y="8.200000000000003" width="0.8" height="5.5" fill="#4e4e4e"/><rect x="304.99" y="13.700000000000003" width="0.8" height="114.5" fill="#3e3e3e"/><rect x="304.99" y="8.200000000000003" width="0.8" height="5.5" fill="#4e4e4e"/><rect x="311.57" y="13.700000000000003" width="0.8" height="114.5" fill="#3e3e3e"/><rect x="311.57" y="8.200000000000003" width="0.8" height="5.5" fill="#4e4e4e"/><rect x="318.14" y="13.700000000000003" width="0.8" height="114.5" fill="#3e3e3e"/><rect x="318.14" y="1" width="0.8" height="12.7" fill="#5c5c5c"/><rect x="324.72" y="13.700000000000003" width="0.8" height="114.5" fill="#3e3e3e"/><rect x="324.72" y="8.200000000000003" width="0.8" height="5.5" fill="#4e4e4e"/><rect x="331.30" y="13.700000000000003" width="0.8" height="114.5" fill="#3e3e3e"/><rect x="331.30" y="8.200000000000003" width="0.8" height="5.5" fill="#4e4e4e"/><rect x="337.88" y="13.700000000000003" width="0.8" height="114.5" fill="#3e3e3e"/><rect x="337.88" y="8.200000000000003" width="0.8" height="5.5" fill="#4e4e4e"/><rect x="344.46" y="13.700000000000003" width="0.8" height="114.5" fill="#3e3e3e"/><rect x="344.46" y="8.200000000000003" width="0.8" height="5.5" fill="#4e4e4e"/><rect x="351.03" y="13.700000000000003" width="0.8" height="114.5" fill="#3e3e3e"/><rect x="351.03" y="8.200000000000003" width="0.8" height="5.5" fill="#4e4e4e"/><rect x="357.61" y="13.700000000000003" width="0.8" height="114.5" fill="#3e3e3e"/><rect x="357.61" y="8.200000000000003" width="0.8" height="5.5" fill="#4e4e4e"/><rect x="364.19" y="13.700000000000003" width="0.8" height="114.5" fill="#3e3e3e"/><rect x="364.19" y="8.200000000000003" width="0.8" height="5.5" fill="#4e4e4e"/><rect x="370.77" y="13.700000000000003" width="0.8" height="114.5" fill="#3e3e3e"/><rect x="370.77" y="1" width="0.8" height="12.7" fill="#5c5c5c"/><rect x="377.35" y="13.700000000000003" width="0.8" height="114.5" fill="#3e3e3e"/><rect x="377.35" y="8.200000000000003" width="0.8" height="5.5" fill="#4e4e4e"/><rect x="383.92" y="13.700000000000003" width="0.8" height="114.5" fill="#3e3e3e"/><rect x="383.92" y="8.200000000000003" width="0.8" height="5.5" fill="#4e4e4e"/><rect x="390.50" y="13.700000000000003" width="0.8" height="114.5" fill="#3e3e3e"/><rect x="390.50" y="8.200000000000003" width="0.8" height="5.5" fill="#4e4e4e"/><rect x="397.08" y="13.700000000000003" width="0.8" height="114.5" fill="#3e3e3e"/><rect x="397.08" y="8.200000000000003" width="0.8" height="5.5" fill="#4e4e4e"/><rect x="403.66" y="13.700000000000003" width="0.8" height="114.5" fill="#3e3e3e"/><rect x="403.66" y="8.200000000000003" width="0.8" height="5.5" fill="#4e4e4e"/><rect x="410.24" y="13.700000000000003" width="0.8" height="114.5" fill="#3e3e3e"/><rect x="410.24" y="8.200000000000003" width="0.8" height="5.5" fill="#4e4e4e"/><rect x="416.81" y="13.700000000000003" width="0.8" height="114.5" fill="#3e3e3e"/><rect x="416.81" y="8.200000000000003" width="0.8" height="5.5" fill="#4e4e4e"/><rect x="423.39" y="13.700000000000003" width="0.8" height="114.5" fill="#3e3e3e"/><rect x="423.39" y="1" width="0.8" height="12.7" fill="#5c5c5c"/><rect x="429.97" y="13.700000000000003" width="0.8" height="114.5" fill="#3e3e3e"/><rect x="429.97" y="8.200000000000003" width="0.8" height="5.5" fill="#4e4e4e"/><rect x="436.55" y="13.700000000000003" width="0.8" height="114.5" fill="#3e3e3e"/><rect x="436.55" y="8.200000000000003" width="0.8" height="5.5" fill="#4e4e4e"/><rect x="443.13" y="13.700000000000003" width="0.8" height="114.5" fill="#3e3e3e"/><rect x="443.13" y="8.200000000000003" width="0.8" height="5.5" fill="#4e4e4e"/><rect x="449.70" y="13.700000000000003" width="0.8" height="114.5" fill="#3e3e3e"/><rect x="449.70" y="8.200000000000003" width="0.8" height="5.5" fill="#4e4e4e"/><rect x="456.28" y="13.700000000000003" width="0.8" height="114.5" fill="#3e3e3e"/><rect x="456.28" y="8.200000000000003" width="0.8" height="5.5" fill="#4e4e4e"/><rect x="462.86" y="13.700000000000003" width="0.8" height="114.5" fill="#3e3e3e"/><rect x="462.86" y="8.200000000000003" width="0.8" height="5.5" fill="#4e4e4e"/><rect x="469.44" y="13.700000000000003" width="0.8" height="114.5" fill="#3e3e3e"/><rect x="469.44" y="8.200000000000003" width="0.8" height="5.5" fill="#4e4e4e"/><rect x="476.02" y="13.700000000000003" width="0.8" height="114.5" fill="#3e3e3e"/><rect x="476.02" y="1" width="0.8" height="12.7" fill="#5c5c5c"/><rect x="482.59" y="13.700000000000003" width="0.8" height="114.5" fill="#3e3e3e"/><rect x="482.59" y="8.200000000000003" width="0.8" height="5.5" fill="#4e4e4e"/><rect x="489.17" y="13.700000000000003" width="0.8" height="114.5" fill="#3e3e3e"/><rect x="489.17" y="8.200000000000003" width="0.8" height="5.5" fill="#4e4e4e"/><rect x="495.75" y="13.700000000000003" width="0.8" height="114.5" fill="#3e3e3e"/><rect x="495.75" y="8.200000000000003" width="0.8" height="5.5" fill="#4e4e4e"/><rect x="502.33" y="13.700000000000003" width="0.8" height="114.5" fill="#3e3e3e"/><rect x="502.33" y="8.200000000000003" width="0.8" height="5.5" fill="#4e4e4e"/><rect x="508.91" y="13.700000000000003" width="0.8" height="114.5" fill="#3e3e3e"/><rect x="508.91" y="8.200000000000003" width="0.8" height="5.5" fill="#4e4e4e"/><rect x="515.48" y="13.700000000000003" width="0.8" height="114.5" fill="#3e3e3e"/><rect x="515.48" y="8.200000000000003" width="0.8" height="5.5" fill="#4e4e4e"/><rect x="522.06" y="13.700000000000003" width="0.8" height="114.5" fill="#3e3e3e"/><rect x="522.06" y="8.200000000000003" width="0.8" height="5.5" fill="#4e4e4e"/><rect x="528.64" y="13.700000000000003" width="0.8" height="114.5" fill="#3e3e3e"/><rect x="528.64" y="1" width="0.8" height="12.7" fill="#5c5c5c"/><rect x="535.22" y="13.700000000000003" width="0.8" height="114.5" fill="#3e3e3e"/><rect x="535.22" y="8.200000000000003" width="0.8" height="5.5" fill="#4e4e4e"/><rect x="541.80" y="13.700000000000003" width="0.8" height="114.5" fill="#3e3e3e"/><rect x="541.80" y="8.200000000000003" width="0.8" height="5.5" fill="#4e4e4e"/><rect x="548.37" y="13.700000000000003" width="0.8" height="114.5" fill="#3e3e3e"/><rect x="548.37" y="8.200000000000003" width="0.8" height="5.5" fill="#4e4e4e"/><rect x="554.95" y="13.700000000000003" width="0.8" height="114.5" fill="#3e3e3e"/><rect x="554.95" y="8.200000000000003" width="0.8" height="5.5" fill="#4e4e4e"/><rect x="561.53" y="13.700000000000003" width="0.8" height="114.5" fill="#3e3e3e"/><rect x="561.53" y="8.200000000000003" width="0.8" height="5.5" fill="#4e4e4e"/><rect x="568.11" y="13.700000000000003" width="0.8" height="114.5" fill="#3e3e3e"/><rect x="568.11" y="8.200000000000003" width="0.8" height="5.5" fill="#4e4e4e"/><rect x="574.69" y="13.700000000000003" width="0.8" height="114.5" fill="#3e3e3e"/><rect x="574.69" y="8.200000000000003" width="0.8" height="5.5" fill="#4e4e4e"/><rect x="581.26" y="13.700000000000003" width="0.8" height="114.5" fill="#3e3e3e"/><rect x="581.26" y="1" width="0.8" height="12.7" fill="#5c5c5c"/><rect x="587.84" y="13.700000000000003" width="0.8" height="114.5" fill="#3e3e3e"/><rect x="587.84" y="8.200000000000003" width="0.8" height="5.5" fill="#4e4e4e"/><rect x="594.42" y="13.700000000000003" width="0.8" height="114.5" fill="#3e3e3e"/><rect x="594.42" y="8.200000000000003" width="0.8" height="5.5" fill="#4e4e4e"/><rect x="601.00" y="13.700000000000003" width="0.8" height="114.5" fill="#3e3e3e"/><rect x="601.00" y="8.200000000000003" width="0.8" height="5.5" fill="#4e4e4e"/><rect x="607.58" y="13.700000000000003" width="0.8" height="114.5" fill="#3e3e3e"/><rect x="607.58" y="8.200000000000003" width="0.8" height="5.5" fill="#4e4e4e"/><rect x="614.15" y="13.700000000000003" width="0.8" height="114.5" fill="#3e3e3e"/><rect x="614.15" y="8.200000000000003" width="0.8" height="5.5" fill="#4e4e4e"/><rect x="620.73" y="13.700000000000003" width="0.8" height="114.5" fill="#3e3e3e"/><rect x="620.73" y="8.200000000000003" width="0.8" height="5.5" fill="#4e4e4e"/><rect x="627.31" y="13.700000000000003" width="0.8" height="114.5" fill="#3e3e3e"/><rect x="627.31" y="8.200000000000003" width="0.8" height="5.5" fill="#4e4e4e"/><rect x="633.89" y="13.700000000000003" width="0.8" height="114.5" fill="#3e3e3e"/><rect x="633.89" y="1" width="0.8" height="12.7" fill="#5c5c5c"/><rect x="640.47" y="13.700000000000003" width="0.8" height="114.5" fill="#3e3e3e"/><rect x="640.47" y="8.200000000000003" width="0.8" height="5.5" fill="#4e4e4e"/><rect x="647.04" y="13.700000000000003" width="0.8" height="114.5" fill="#3e3e3e"/><rect x="647.04" y="8.200000000000003" width="0.8" height="5.5" fill="#4e4e4e"/><rect x="653.62" y="13.700000000000003" width="0.8" height="114.5" fill="#3e3e3e"/><rect x="653.62" y="8.200000000000003" width="0.8" height="5.5" fill="#4e4e4e"/><rect x="660.20" y="13.700000000000003" width="0.8" height="114.5" fill="#3e3e3e"/><rect x="660.20" y="8.200000000000003" width="0.8" height="5.5" fill="#4e4e4e"/><rect x="666.78" y="13.700000000000003" width="0.8" height="114.5" fill="#3e3e3e"/><rect x="666.78" y="8.200000000000003" width="0.8" height="5.5" fill="#4e4e4e"/><rect x="673.36" y="13.700000000000003" width="0.8" height="114.5" fill="#3e3e3e"/><rect x="673.36" y="8.200000000000003" width="0.8" height="5.5" fill="#4e4e4e"/><rect x="679.93" y="13.700000000000003" width="0.8" height="114.5" fill="#3e3e3e"/><rect x="679.93" y="8.200000000000003" width="0.8" height="5.5" fill="#4e4e4e"/><rect x="686.51" y="13.700000000000003" width="0.8" height="114.5" fill="#3e3e3e"/><rect x="686.51" y="1" width="0.8" height="12.7" fill="#5c5c5c"/><rect x="693.09" y="13.700000000000003" width="0.8" height="114.5" fill="#3e3e3e"/><rect x="693.09" y="8.200000000000003" width="0.8" height="5.5" fill="#4e4e4e"/><rect x="699.67" y="13.700000000000003" width="0.8" height="114.5" fill="#3e3e3e"/><rect x="699.67" y="8.200000000000003" width="0.8" height="5.5" fill="#4e4e4e"/><rect x="706.25" y="13.700000000000003" width="0.8" height="114.5" fill="#3e3e3e"/><rect x="706.25" y="8.200000000000003" width="0.8" height="5.5" fill="#4e4e4e"/><rect x="712.82" y="13.700000000000003" width="0.8" height="114.5" fill="#262626"/><rect x="712.82" y="8.200000000000003" width="0.8" height="5.5" fill="#2a2a2a"/><rect x="719.40" y="13.700000000000003" width="0.8" height="114.5" fill="#262626"/><rect x="719.40" y="8.200000000000003" width="0.8" height="5.5" fill="#2a2a2a"/><rect x="725.98" y="13.700000000000003" width="0.8" height="114.5" fill="#262626"/><rect x="725.98" y="8.200000000000003" width="0.8" height="5.5" fill="#2a2a2a"/><rect x="732.56" y="13.700000000000003" width="0.8" height="114.5" fill="#262626"/><rect x="732.56" y="8.200000000000003" width="0.8" height="5.5" fill="#2a2a2a"/><rect x="739.14" y="13.700000000000003" width="0.8" height="114.5" fill="#262626"/><rect x="739.14" y="1" width="0.8" height="12.7" fill="#2a2a2a"/><rect x="745.71" y="13.700000000000003" width="0.8" height="114.5" fill="#262626"/><rect x="745.71" y="8.200000000000003" width="0.8" height="5.5" fill="#2a2a2a"/><rect x="752.29" y="13.700000000000003" width="0.8" height="114.5" fill="#262626"/><rect x="752.29" y="8.200000000000003" width="0.8" height="5.5" fill="#2a2a2a"/><rect x="758.87" y="13.700000000000003" width="0.8" height="114.5" fill="#262626"/><rect x="758.87" y="8.200000000000003" width="0.8" height="5.5" fill="#2a2a2a"/><rect x="765.45" y="13.700000000000003" width="0.8" height="114.5" fill="#262626"/><rect x="765.45" y="8.200000000000003" width="0.8" height="5.5" fill="#2a2a2a"/><rect x="772.03" y="13.700000000000003" width="0.8" height="114.5" fill="#262626"/><rect x="772.03" y="8.200000000000003" width="0.8" height="5.5" fill="#2a2a2a"/><rect x="778.60" y="13.700000000000003" width="0.8" height="114.5" fill="#262626"/><rect x="778.60" y="8.200000000000003" width="0.8" height="5.5" fill="#2a2a2a"/><rect x="785.18" y="13.700000000000003" width="0.8" height="114.5" fill="#262626"/><rect x="785.18" y="8.200000000000003" width="0.8" height="5.5" fill="#2a2a2a"/><rect x="791.76" y="13.700000000000003" width="0.8" height="114.5" fill="#262626"/><rect x="791.76" y="1" width="0.8" height="12.7" fill="#2a2a2a"/><rect x="798.34" y="13.700000000000003" width="0.8" height="114.5" fill="#262626"/><rect x="798.34" y="8.200000000000003" width="0.8" height="5.5" fill="#2a2a2a"/><rect x="804.92" y="13.700000000000003" width="0.8" height="114.5" fill="#262626"/><rect x="804.92" y="8.200000000000003" width="0.8" height="5.5" fill="#2a2a2a"/><rect x="811.49" y="13.700000000000003" width="0.8" height="114.5" fill="#262626"/><rect x="811.49" y="8.200000000000003" width="0.8" height="5.5" fill="#2a2a2a"/><rect x="818.07" y="13.700000000000003" width="0.8" height="114.5" fill="#262626"/><rect x="818.07" y="8.200000000000003" width="0.8" height="5.5" fill="#2a2a2a"/><rect x="824.65" y="13.700000000000003" width="0.8" height="114.5" fill="#262626"/><rect x="824.65" y="8.200000000000003" width="0.8" height="5.5" fill="#2a2a2a"/><rect x="831.23" y="13.700000000000003" width="0.8" height="114.5" fill="#262626"/><rect x="831.23" y="8.200000000000003" width="0.8" height="5.5" fill="#2a2a2a"/><rect x="837.81" y="13.700000000000003" width="0.8" height="114.5" fill="#262626"/><rect x="837.81" y="8.200000000000003" width="0.8" height="5.5" fill="#2a2a2a"/><rect x="844.38" y="13.700000000000003" width="0.8" height="114.5" fill="#262626"/><rect x="844.38" y="1" width="0.8" height="12.7" fill="#2a2a2a"/><rect x="850.96" y="13.700000000000003" width="0.8" height="114.5" fill="#262626"/><rect x="850.96" y="8.200000000000003" width="0.8" height="5.5" fill="#2a2a2a"/></svg>
<div class="t" style="left:132.10px;top:43.10px;font-size:5.2px;line-height:6.24px;color:#e0e0e0;">1</div>
<div class="t" style="left:184.72px;top:43.10px;font-size:5.2px;line-height:6.24px;color:#e0e0e0;">9</div>
<div class="t" style="left:237.35px;top:43.10px;font-size:5.2px;line-height:6.24px;color:#e0e0e0;">17</div>
<div class="t" style="left:289.97px;top:43.10px;font-size:5.2px;line-height:6.24px;color:#e0e0e0;">25</div>
<div class="t" style="left:342.60px;top:43.10px;font-size:5.2px;line-height:6.24px;color:#e0e0e0;">33</div>
<div class="t" style="left:395.22px;top:43.10px;font-size:5.2px;line-height:6.24px;color:#e0e0e0;">41</div>
<div class="t" style="left:447.84px;top:43.10px;font-size:5.2px;line-height:6.24px;color:#e0e0e0;">49</div>
<div class="t" style="left:500.47px;top:43.10px;font-size:5.2px;line-height:6.24px;color:#e0e0e0;">57</div>
<div class="t" style="left:553.09px;top:43.10px;font-size:5.2px;line-height:6.24px;color:#e0e0e0;">65</div>
<div class="t" style="left:605.72px;top:43.10px;font-size:5.2px;line-height:6.24px;color:#e0e0e0;">73</div>
<div class="t" style="left:658.34px;top:43.10px;font-size:5.2px;line-height:6.24px;color:#e0e0e0;">81</div>
<div class="t" style="left:710.96px;top:43.10px;font-size:5.2px;line-height:6.24px;color:#e0e0e0;">89</div>
<div class="t" style="left:763.59px;top:43.10px;font-size:5.2px;line-height:6.24px;color:#e0e0e0;">97</div>
<div class="t" style="left:816.21px;top:43.10px;font-size:5.2px;line-height:6.24px;color:#e0e0e0;">105</div>
<div class="t" style="left:868.84px;top:43.10px;font-size:5.2px;line-height:6.24px;color:#5a5a5a;">113</div>
<div class="t" style="left:921.46px;top:43.10px;font-size:5.2px;line-height:6.24px;color:#5a5a5a;">121</div>
<div class="t" style="left:974.08px;top:43.10px;font-size:5.2px;line-height:6.24px;color:#5a5a5a;">129</div>
<div class="t" style="left:974.50px;top:43.10px;font-size:5.2px;line-height:6.24px;color:#5a5a5a;">12</div>
<svg style="left:127.60px;top:44.20px" width="2.6" height="4" viewBox="0 0 2.6 4" preserveAspectRatio="none"><path d="M0.2 0.2L2.2 2L0.2 3.8z" fill="#777"/></svg>
<svg style="left:834.80px;top:44.00px" width="3" height="4.6" viewBox="0 0 3 4.6" preserveAspectRatio="none"><path d="M2.8 0.2L0.3 2.3L2.8 4.4z" fill="#9a9a9a"/></svg>
<div style="left:130.00px;top:51.00px;width:2.00px;height:211.00px;background:#515151"></div>
<svg style="left:127.90px;top:49.70px" width="5.8" height="5.4" viewBox="0 0 5.8 5.4" preserveAspectRatio="none"><path d="M0.3 0.3H5.5V2.8L2.9 5.2L0.3 2.8z" fill="#dedede" stroke="#888" stroke-width="0.3"/></svg>
<svg style="left:128.00px;top:56.80px" width="852" height="114.30000000000001" viewBox="0 0 852 114.30000000000001" preserveAspectRatio="none"><svg x="193.90" y="0.55" width="163.60" height="18.70" viewBox="0 0 163.60 18.70" overflow="hidden"><rect x="0" y="0" width="163.60" height="18.70" rx="0.8" fill="#1f3f1c"/><rect x="0.35" y="0.3" width="162.90" height="17.20" rx="0.6" fill="#3e7c3b"/><rect x="0.35" y="0.3" width="162.90" height="0.7" fill="#2f6a2e" opacity="0.6"/><rect x="5.20" y="10.75" width="18.20" height="0.70" fill="#9ad69a" opacity="0.8"/><rect x="5.20" y="12.60" width="18.20" height="1.50" fill="#9ad69a"/><rect x="5.20" y="15.80" width="18.20" height="0.90" fill="#9ad69a"/><rect x="25.10" y="8.90" width="18.20" height="0.70" fill="#9ad69a" opacity="0.7"/><rect x="25.10" y="10.60" width="18.20" height="1.90" fill="#9ad69a"/><rect x="25.10" y="13.60" width="18.20" height="0.70" fill="#9ad69a" opacity="0.7"/><rect x="45.00" y="10.75" width="18.20" height="0.70" fill="#9ad69a" opacity="0.8"/><rect x="45.00" y="12.60" width="18.20" height="1.50" fill="#9ad69a"/><rect x="45.00" y="15.80" width="18.20" height="0.90" fill="#9ad69a"/><rect x="64.90" y="8.90" width="18.20" height="0.70" fill="#9ad69a" opacity="0.7"/><rect x="64.90" y="10.60" width="18.20" height="1.90" fill="#9ad69a"/><rect x="64.90" y="13.60" width="18.20" height="0.70" fill="#9ad69a" opacity="0.7"/><rect x="84.80" y="10.75" width="18.20" height="0.70" fill="#9ad69a" opacity="0.8"/><rect x="84.80" y="12.60" width="18.20" height="1.50" fill="#9ad69a"/><rect x="84.80" y="15.80" width="18.20" height="0.90" fill="#9ad69a"/><rect x="104.70" y="8.90" width="18.20" height="0.70" fill="#9ad69a" opacity="0.7"/><rect x="104.70" y="10.60" width="18.20" height="1.90" fill="#9ad69a"/><rect x="104.70" y="13.60" width="18.20" height="0.70" fill="#9ad69a" opacity="0.7"/><rect x="124.60" y="10.75" width="18.20" height="0.70" fill="#9ad69a" opacity="0.8"/><rect x="124.60" y="12.60" width="18.20" height="1.50" fill="#9ad69a"/><rect x="124.60" y="15.80" width="18.20" height="0.90" fill="#9ad69a"/><rect x="144.50" y="8.90" width="17.90" height="0.70" fill="#9ad69a" opacity="0.7"/><rect x="144.50" y="10.60" width="17.90" height="1.90" fill="#9ad69a"/><rect x="144.50" y="13.60" width="17.90" height="0.70" fill="#9ad69a" opacity="0.7"/><text x="1.4" y="5.1" font-size="4.9" letter-spacing="-0.25" fill="#c8e6c4">Inst 1</text></svg><svg x="390.80" y="0.55" width="286.50" height="18.70" viewBox="0 0 286.50 18.70" overflow="hidden"><rect x="0" y="0" width="286.50" height="18.70" rx="0.8" fill="#1f3f1c"/><rect x="0.35" y="0.3" width="285.80" height="17.20" rx="0.6" fill="#3e7c3b"/><rect x="0.35" y="0.3" width="285.80" height="0.7" fill="#2f6a2e" opacity="0.6"/><rect x="5.40" y="10.20" width="17.98" height="0.70" fill="#9ad69a" opacity="0.8"/><rect x="5.40" y="11.40" width="17.98" height="1.30" fill="#9ad69a"/><rect x="5.40" y="13.10" width="17.98" height="0.80" fill="#9ad69a" opacity="0.9"/><rect x="25.08" y="8.70" width="17.98" height="0.70" fill="#9ad69a" opacity="0.7"/><rect x="25.08" y="9.80" width="17.98" height="1.50" fill="#9ad69a"/><rect x="25.08" y="11.70" width="17.98" height="0.70" fill="#9ad69a" opacity="0.8"/><rect x="44.75" y="10.20" width="17.98" height="0.70" fill="#9ad69a" opacity="0.8"/><rect x="44.75" y="11.40" width="17.98" height="1.30" fill="#9ad69a"/><rect x="44.75" y="13.10" width="17.98" height="0.80" fill="#9ad69a" opacity="0.9"/><rect x="64.43" y="8.70" width="17.98" height="0.70" fill="#9ad69a" opacity="0.7"/><rect x="64.43" y="9.80" width="17.98" height="1.50" fill="#9ad69a"/><rect x="64.43" y="11.70" width="17.98" height="0.70" fill="#9ad69a" opacity="0.8"/><rect x="84.10" y="10.20" width="17.98" height="0.70" fill="#9ad69a" opacity="0.8"/><rect x="84.10" y="11.40" width="17.98" height="1.30" fill="#9ad69a"/><rect x="84.10" y="13.10" width="17.98" height="0.80" fill="#9ad69a" opacity="0.9"/><rect x="103.78" y="8.70" width="17.98" height="0.70" fill="#9ad69a" opacity="0.7"/><rect x="103.78" y="9.80" width="17.98" height="1.50" fill="#9ad69a"/><rect x="103.78" y="11.70" width="17.98" height="0.70" fill="#9ad69a" opacity="0.8"/><rect x="123.45" y="10.20" width="17.98" height="0.70" fill="#9ad69a" opacity="0.8"/><rect x="123.45" y="11.40" width="17.98" height="1.30" fill="#9ad69a"/><rect x="123.45" y="13.10" width="17.98" height="0.80" fill="#9ad69a" opacity="0.9"/><rect x="143.12" y="8.70" width="17.98" height="0.70" fill="#9ad69a" opacity="0.7"/><rect x="143.12" y="9.80" width="17.98" height="1.50" fill="#9ad69a"/><rect x="143.12" y="11.70" width="17.98" height="0.70" fill="#9ad69a" opacity="0.8"/><rect x="162.80" y="10.20" width="17.98" height="0.70" fill="#9ad69a" opacity="0.8"/><rect x="162.80" y="11.40" width="17.98" height="1.30" fill="#9ad69a"/><rect x="162.80" y="13.10" width="17.98" height="0.80" fill="#9ad69a" opacity="0.9"/><rect x="182.48" y="8.70" width="17.98" height="0.70" fill="#9ad69a" opacity="0.7"/><rect x="182.48" y="9.80" width="17.98" height="1.50" fill="#9ad69a"/><rect x="182.48" y="11.70" width="17.98" height="0.70" fill="#9ad69a" opacity="0.8"/><rect x="202.15" y="10.20" width="17.98" height="0.70" fill="#9ad69a" opacity="0.8"/><rect x="202.15" y="11.40" width="17.98" height="1.30" fill="#9ad69a"/><rect x="202.15" y="13.10" width="17.98" height="0.80" fill="#9ad69a" opacity="0.9"/><rect x="221.83" y="8.70" width="17.98" height="0.70" fill="#9ad69a" opacity="0.7"/><rect x="221.83" y="9.80" width="17.98" height="1.50" fill="#9ad69a"/><rect x="221.83" y="11.70" width="17.98" height="0.70" fill="#9ad69a" opacity="0.8"/><rect x="241.50" y="10.20" width="17.98" height="0.70" fill="#9ad69a" opacity="0.8"/><rect x="241.50" y="11.40" width="17.98" height="1.30" fill="#9ad69a"/><rect x="241.50" y="13.10" width="17.98" height="0.80" fill="#9ad69a" opacity="0.9"/><rect x="261.18" y="8.70" width="17.98" height="0.70" fill="#9ad69a" opacity="0.7"/><rect x="261.18" y="9.80" width="17.98" height="1.50" fill="#9ad69a"/><rect x="261.18" y="11.70" width="17.98" height="0.70" fill="#9ad69a" opacity="0.8"/><rect x="16.22" y="9.00" width="4.33" height="0.55" fill="#a4d8a2"/><rect x="19.17" y="8.30" width="3.94" height="0.55" fill="#a4d8a2"/><rect x="11.30" y="9.40" width="4.92" height="0.50" fill="#a4d8a2"/><rect x="35.90" y="7.60" width="4.33" height="0.55" fill="#a4d8a2"/><rect x="38.85" y="6.90" width="3.94" height="0.55" fill="#a4d8a2"/><rect x="55.57" y="9.00" width="4.33" height="0.55" fill="#a4d8a2"/><rect x="58.52" y="8.30" width="3.94" height="0.55" fill="#a4d8a2"/><rect x="50.65" y="9.40" width="4.92" height="0.50" fill="#a4d8a2"/><rect x="94.92" y="9.00" width="4.33" height="0.55" fill="#a4d8a2"/><rect x="97.87" y="8.30" width="3.94" height="0.55" fill="#a4d8a2"/><rect x="90.00" y="9.40" width="4.92" height="0.50" fill="#a4d8a2"/><rect x="114.60" y="7.60" width="4.33" height="0.55" fill="#a4d8a2"/><rect x="117.55" y="6.90" width="3.94" height="0.55" fill="#a4d8a2"/><rect x="134.27" y="9.00" width="4.33" height="0.55" fill="#a4d8a2"/><rect x="137.22" y="8.30" width="3.94" height="0.55" fill="#a4d8a2"/><rect x="129.35" y="9.40" width="4.92" height="0.50" fill="#a4d8a2"/><rect x="173.62" y="9.00" width="4.33" height="0.55" fill="#a4d8a2"/><rect x="176.57" y="8.30" width="3.94" height="0.55" fill="#a4d8a2"/><rect x="168.70" y="9.40" width="4.92" height="0.50" fill="#a4d8a2"/><rect x="193.30" y="7.60" width="4.33" height="0.55" fill="#a4d8a2"/><rect x="196.25" y="6.90" width="3.94" height="0.55" fill="#a4d8a2"/><rect x="212.97" y="9.00" width="4.33" height="0.55" fill="#a4d8a2"/><rect x="215.92" y="8.30" width="3.94" height="0.55" fill="#a4d8a2"/><rect x="208.05" y="9.40" width="4.92" height="0.50" fill="#a4d8a2"/><rect x="252.32" y="9.00" width="4.33" height="0.55" fill="#a4d8a2"/><rect x="255.27" y="8.30" width="3.94" height="0.55" fill="#a4d8a2"/><rect x="247.40" y="9.40" width="4.92" height="0.50" fill="#a4d8a2"/><rect x="272.00" y="7.60" width="4.33" height="0.55" fill="#a4d8a2"/><rect x="274.95" y="6.90" width="3.94" height="0.55" fill="#a4d8a2"/><text x="1.4" y="5.1" font-size="4.9" letter-spacing="-0.25" fill="#c8e6c4">Inst 1</text></svg><svg x="397.80" y="19.60" width="78.10" height="18.70" viewBox="0 0 78.10 18.70" overflow="hidden"><rect x="0" y="0" width="78.10" height="18.70" rx="0.8" fill="#1f3f1c"/><rect x="0.35" y="0.3" width="77.40" height="17.20" rx="0.6" fill="#3e7c3b"/><rect x="0.35" y="0.3" width="77.40" height="0.7" fill="#2f6a2e" opacity="0.6"/><rect x="0.30" y="9.65" width="3.80" height="0.70" fill="#a4d8a2" opacity="0.9"/><rect x="4.60" y="12.55" width="5.40" height="0.70" fill="#a4d8a2" opacity="0.9"/><rect x="9.50" y="14.95" width="4.80" height="0.70" fill="#a4d8a2" opacity="0.9"/><rect x="14.30" y="12.55" width="3.70" height="0.70" fill="#a4d8a2" opacity="0.9"/><rect x="18.60" y="11.15" width="5.90" height="0.70" fill="#a4d8a2" opacity="0.9"/><rect x="24.00" y="9.65" width="5.00" height="0.70" fill="#a4d8a2" opacity="0.9"/><rect x="29.00" y="7.55" width="4.70" height="0.70" fill="#a4d8a2" opacity="0.9"/><rect x="33.00" y="11.15" width="5.60" height="0.70" fill="#a4d8a2" opacity="0.9"/><rect x="39.65" y="9.65" width="3.80" height="0.70" fill="#a4d8a2" opacity="0.9"/><rect x="43.95" y="12.55" width="5.40" height="0.70" fill="#a4d8a2" opacity="0.9"/><rect x="48.85" y="14.95" width="4.80" height="0.70" fill="#a4d8a2" opacity="0.9"/><rect x="53.65" y="12.55" width="3.70" height="0.70" fill="#a4d8a2" opacity="0.9"/><rect x="57.95" y="11.15" width="5.90" height="0.70" fill="#a4d8a2" opacity="0.9"/><rect x="63.35" y="9.65" width="5.00" height="0.70" fill="#a4d8a2" opacity="0.9"/><rect x="68.35" y="7.55" width="4.70" height="0.70" fill="#a4d8a2" opacity="0.9"/><rect x="72.35" y="11.15" width="4.85" height="0.70" fill="#a4d8a2" opacity="0.9"/><text x="1.4" y="5.1" font-size="4.9" letter-spacing="-0.25" fill="#c8e6c4">Inst 4</text></svg><svg x="476.20" y="19.60" width="78.50" height="18.70" viewBox="0 0 78.50 18.70" overflow="hidden"><rect x="0" y="0" width="78.50" height="18.70" rx="0.8" fill="#1f3f1c"/><rect x="0.35" y="0.3" width="77.80" height="17.20" rx="0.6" fill="#3e7c3b"/><rect x="0.35" y="0.3" width="77.80" height="0.7" fill="#2f6a2e" opacity="0.6"/><rect x="0.30" y="9.65" width="3.80" height="0.70" fill="#a4d8a2" opacity="0.9"/><rect x="1.50" y="12.05" width="3.04" height="0.70" fill="#a4d8a2" opacity="0.85"/><rect x="2.49" y="10.70" width="1.90" height="0.60" fill="#a4d8a2" opacity="0.7"/><rect x="4.60" y="12.55" width="5.40" height="0.70" fill="#a4d8a2" opacity="0.9"/><rect x="5.80" y="9.95" width="4.32" height="0.70" fill="#a4d8a2" opacity="0.85"/><rect x="6.66" y="10.80" width="2.70" height="0.60" fill="#a4d8a2" opacity="0.7"/><rect x="9.50" y="14.95" width="4.80" height="0.70" fill="#a4d8a2" opacity="0.9"/><rect x="10.70" y="12.35" width="3.84" height="0.70" fill="#a4d8a2" opacity="0.85"/><rect x="11.41" y="9.10" width="2.40" height="0.60" fill="#a4d8a2" opacity="0.7"/><rect x="14.30" y="12.55" width="3.70" height="0.70" fill="#a4d8a2" opacity="0.9"/><rect x="15.50" y="9.95" width="2.96" height="0.70" fill="#a4d8a2" opacity="0.85"/><rect x="16.07" y="12.70" width="1.85" height="0.60" fill="#a4d8a2" opacity="0.7"/><rect x="18.60" y="11.15" width="5.90" height="0.70" fill="#a4d8a2" opacity="0.9"/><rect x="19.80" y="13.55" width="4.72" height="0.70" fill="#a4d8a2" opacity="0.85"/><rect x="20.24" y="12.80" width="2.95" height="0.60" fill="#a4d8a2" opacity="0.7"/><rect x="24.00" y="9.65" width="5.00" height="0.70" fill="#a4d8a2" opacity="0.9"/><rect x="25.20" y="12.05" width="4.00" height="0.70" fill="#a4d8a2" opacity="0.85"/><rect x="25.48" y="8.60" width="2.50" height="0.60" fill="#a4d8a2" opacity="0.7"/><rect x="29.00" y="7.55" width="4.70" height="0.70" fill="#a4d8a2" opacity="0.9"/><rect x="30.20" y="9.95" width="3.76" height="0.70" fill="#a4d8a2" opacity="0.85"/><rect x="30.33" y="13.60" width="2.35" height="0.60" fill="#a4d8a2" opacity="0.7"/><rect x="33.00" y="11.15" width="5.60" height="0.70" fill="#a4d8a2" opacity="0.9"/><rect x="34.20" y="13.55" width="4.48" height="0.70" fill="#a4d8a2" opacity="0.85"/><rect x="34.21" y="11.60" width="2.80" height="0.60" fill="#a4d8a2" opacity="0.7"/><rect x="39.65" y="9.65" width="3.80" height="0.70" fill="#a4d8a2" opacity="0.9"/><rect x="40.85" y="12.05" width="3.04" height="0.70" fill="#a4d8a2" opacity="0.85"/><rect x="41.84" y="10.70" width="1.90" height="0.60" fill="#a4d8a2" opacity="0.7"/><rect x="43.95" y="12.55" width="5.40" height="0.70" fill="#a4d8a2" opacity="0.9"/><rect x="45.15" y="9.95" width="4.32" height="0.70" fill="#a4d8a2" opacity="0.85"/><rect x="46.01" y="10.80" width="2.70" height="0.60" fill="#a4d8a2" opacity="0.7"/><rect x="48.85" y="14.95" width="4.80" height="0.70" fill="#a4d8a2" opacity="0.9"/><rect x="50.05" y="12.35" width="3.84" height="0.70" fill="#a4d8a2" opacity="0.85"/><rect x="50.77" y="9.10" width="2.40" height="0.60" fill="#a4d8a2" opacity="0.7"/><rect x="53.65" y="12.55" width="3.70" height="0.70" fill="#a4d8a2" opacity="0.9"/><rect x="54.85" y="9.95" width="2.96" height="0.70" fill="#a4d8a2" opacity="0.85"/><rect x="55.42" y="12.70" width="1.85" height="0.60" fill="#a4d8a2" opacity="0.7"/><rect x="57.95" y="11.15" width="5.90" height="0.70" fill="#a4d8a2" opacity="0.9"/><rect x="59.15" y="13.55" width="4.72" height="0.70" fill="#a4d8a2" opacity="0.85"/><rect x="59.59" y="12.80" width="2.95" height="0.60" fill="#a4d8a2" opacity="0.7"/><rect x="63.35" y="9.65" width="5.00" height="0.70" fill="#a4d8a2" opacity="0.9"/><rect x="64.55" y="12.05" width="4.00" height="0.70" fill="#a4d8a2" opacity="0.85"/><rect x="64.83" y="8.60" width="2.50" height="0.60" fill="#a4d8a2" opacity="0.7"/><rect x="68.35" y="7.55" width="4.70" height="0.70" fill="#a4d8a2" opacity="0.9"/><rect x="69.55" y="9.95" width="3.76" height="0.70" fill="#a4d8a2" opacity="0.85"/><rect x="69.68" y="13.60" width="2.35" height="0.60" fill="#a4d8a2" opacity="0.7"/><rect x="72.35" y="11.15" width="4.85" height="0.70" fill="#a4d8a2" opacity="0.9"/><rect x="73.55" y="13.55" width="4.48" height="0.70" fill="#a4d8a2" opacity="0.85"/><rect x="73.56" y="11.60" width="2.80" height="0.60" fill="#a4d8a2" opacity="0.7"/><text x="1.4" y="5.1" font-size="4.9" letter-spacing="-0.25" fill="#c8e6c4">Inst 4</text></svg><svg x="81.90" y="38.65" width="473.40" height="18.70" viewBox="0 0 473.40 18.70" overflow="hidden"><rect x="0" y="0" width="473.40" height="18.70" rx="0.8" fill="#1f3f1c"/><rect x="0.35" y="0.3" width="472.70" height="17.20" rx="0.6" fill="#3e7c3b"/><rect x="0.35" y="0.3" width="472.70" height="0.7" fill="#2f6a2e" opacity="0.6"/><rect x="0.60" y="12.30" width="9.06" height="0.65" fill="#a4d8a2"/><rect x="10.04" y="12.45" width="9.44" height="0.65" fill="#a4d8a2"/><rect x="20.28" y="12.00" width="1.00" height="0.55" fill="#a4d8a2" opacity="0.8"/><rect x="21.73" y="12.45" width="1.00" height="0.55" fill="#a4d8a2" opacity="0.8"/><rect x="23.18" y="12.00" width="1.00" height="0.55" fill="#a4d8a2" opacity="0.8"/><rect x="24.62" y="12.00" width="1.00" height="0.55" fill="#a4d8a2" opacity="0.8"/><rect x="26.07" y="12.45" width="1.00" height="0.55" fill="#a4d8a2" opacity="0.8"/><rect x="27.52" y="12.00" width="1.00" height="0.55" fill="#a4d8a2" opacity="0.8"/><rect x="28.97" y="12.00" width="1.00" height="0.55" fill="#a4d8a2" opacity="0.8"/><rect x="30.42" y="12.45" width="1.00" height="0.55" fill="#a4d8a2" opacity="0.8"/><rect x="31.87" y="12.00" width="1.00" height="0.55" fill="#a4d8a2" opacity="0.8"/><rect x="33.32" y="12.00" width="1.00" height="0.55" fill="#a4d8a2" opacity="0.8"/><rect x="34.77" y="12.45" width="1.00" height="0.55" fill="#a4d8a2" opacity="0.8"/><rect x="36.23" y="12.00" width="1.00" height="0.55" fill="#a4d8a2" opacity="0.8"/><rect x="37.68" y="12.00" width="1.00" height="0.55" fill="#a4d8a2" opacity="0.8"/><rect x="39.95" y="12.30" width="9.06" height="0.65" fill="#a4d8a2"/><rect x="49.39" y="12.45" width="9.44" height="0.65" fill="#a4d8a2"/><rect x="59.62" y="12.00" width="1.00" height="0.55" fill="#a4d8a2" opacity="0.8"/><rect x="61.08" y="12.45" width="1.00" height="0.55" fill="#a4d8a2" opacity="0.8"/><rect x="62.53" y="12.00" width="1.00" height="0.55" fill="#a4d8a2" opacity="0.8"/><rect x="63.98" y="12.00" width="1.00" height="0.55" fill="#a4d8a2" opacity="0.8"/><rect x="65.43" y="12.45" width="1.00" height="0.55" fill="#a4d8a2" opacity="0.8"/><rect x="66.88" y="12.00" width="1.00" height="0.55" fill="#a4d8a2" opacity="0.8"/><rect x="68.33" y="12.00" width="1.00" height="0.55" fill="#a4d8a2" opacity="0.8"/><rect x="69.78" y="12.45" width="1.00" height="0.55" fill="#a4d8a2" opacity="0.8"/><rect x="71.23" y="12.00" width="1.00" height="0.55" fill="#a4d8a2" opacity="0.8"/><rect x="72.68" y="12.00" width="1.00" height="0.55" fill="#a4d8a2" opacity="0.8"/><rect x="74.13" y="12.45" width="1.00" height="0.55" fill="#a4d8a2" opacity="0.8"/><rect x="75.58" y="12.00" width="1.00" height="0.55" fill="#a4d8a2" opacity="0.8"/><rect x="77.03" y="12.00" width="1.00" height="0.55" fill="#a4d8a2" opacity="0.8"/><rect x="79.30" y="12.30" width="9.06" height="0.65" fill="#a4d8a2"/><rect x="88.74" y="12.45" width="9.44" height="0.65" fill="#a4d8a2"/><rect x="98.97" y="12.00" width="1.00" height="0.55" fill="#a4d8a2" opacity="0.8"/><rect x="100.42" y="12.45" width="1.00" height="0.55" fill="#a4d8a2" opacity="0.8"/><rect x="101.88" y="12.00" width="1.00" height="0.55" fill="#a4d8a2" opacity="0.8"/><rect x="103.33" y="12.00" width="1.00" height="0.55" fill="#a4d8a2" opacity="0.8"/><rect x="104.78" y="12.45" width="1.00" height="0.55" fill="#a4d8a2" opacity="0.8"/><rect x="106.23" y="12.00" width="1.00" height="0.55" fill="#a4d8a2" opacity="0.8"/><rect x="107.68" y="12.00" width="1.00" height="0.55" fill="#a4d8a2" opacity="0.8"/><rect x="109.13" y="12.45" width="1.00" height="0.55" fill="#a4d8a2" opacity="0.8"/><rect x="110.58" y="12.00" width="1.00" height="0.55" fill="#a4d8a2" opacity="0.8"/><rect x="112.03" y="12.00" width="1.00" height="0.55" fill="#a4d8a2" opacity="0.8"/><rect x="113.48" y="12.45" width="1.00" height="0.55" fill="#a4d8a2" opacity="0.8"/><rect x="114.93" y="12.00" width="1.00" height="0.55" fill="#a4d8a2" opacity="0.8"/><rect x="116.38" y="12.00" width="1.00" height="0.55" fill="#a4d8a2" opacity="0.8"/><rect x="118.65" y="12.30" width="9.06" height="0.65" fill="#a4d8a2"/><rect x="128.09" y="12.45" width="9.44" height="0.65" fill="#a4d8a2"/><rect x="138.32" y="12.00" width="1.00" height="0.55" fill="#a4d8a2" opacity="0.8"/><rect x="139.77" y="12.45" width="1.00" height="0.55" fill="#a4d8a2" opacity="0.8"/><rect x="141.22" y="12.00" width="1.00" height="0.55" fill="#a4d8a2" opacity="0.8"/><rect x="142.67" y="12.00" width="1.00" height="0.55" fill="#a4d8a2" opacity="0.8"/><rect x="144.12" y="12.45" width="1.00" height="0.55" fill="#a4d8a2" opacity="0.8"/><rect x="145.57" y="12.00" width="1.00" height="0.55" fill="#a4d8a2" opacity="0.8"/><rect x="147.02" y="12.00" width="1.00" height="0.55" fill="#a4d8a2" opacity="0.8"/><rect x="148.47" y="12.45" width="1.00" height="0.55" fill="#a4d8a2" opacity="0.8"/><rect x="149.92" y="12.00" width="1.00" height="0.55" fill="#a4d8a2" opacity="0.8"/><rect x="151.37" y="12.00" width="1.00" height="0.55" fill="#a4d8a2" opacity="0.8"/><rect x="152.82" y="12.45" width="1.00" height="0.55" fill="#a4d8a2" opacity="0.8"/><rect x="154.27" y="12.00" width="1.00" height="0.55" fill="#a4d8a2" opacity="0.8"/><rect x="155.72" y="12.00" width="1.00" height="0.55" fill="#a4d8a2" opacity="0.8"/><rect x="158.00" y="12.30" width="9.06" height="0.65" fill="#a4d8a2"/><rect x="167.44" y="12.45" width="9.44" height="0.65" fill="#a4d8a2"/><rect x="177.68" y="12.00" width="1.00" height="0.55" fill="#a4d8a2" opacity="0.8"/><rect x="179.12" y="12.45" width="1.00" height="0.55" fill="#a4d8a2" opacity="0.8"/><rect x="180.57" y="12.00" width="1.00" height="0.55" fill="#a4d8a2" opacity="0.8"/><rect x="182.02" y="12.00" width="1.00" height="0.55" fill="#a4d8a2" opacity="0.8"/><rect x="183.47" y="12.45" width="1.00" height="0.55" fill="#a4d8a2" opacity="0.8"/><rect x="184.92" y="12.00" width="1.00" height="0.55" fill="#a4d8a2" opacity="0.8"/><rect x="186.37" y="12.00" width="1.00" height="0.55" fill="#a4d8a2" opacity="0.8"/><rect x="187.82" y="12.45" width="1.00" height="0.55" fill="#a4d8a2" opacity="0.8"/><rect x="189.27" y="12.00" width="1.00" height="0.55" fill="#a4d8a2" opacity="0.8"/><rect x="190.72" y="12.00" width="1.00" height="0.55" fill="#a4d8a2" opacity="0.8"/><rect x="192.17" y="12.45" width="1.00" height="0.55" fill="#a4d8a2" opacity="0.8"/><rect x="193.62" y="12.00" width="1.00" height="0.55" fill="#a4d8a2" opacity="0.8"/><rect x="195.07" y="12.00" width="1.00" height="0.55" fill="#a4d8a2" opacity="0.8"/><rect x="197.35" y="12.30" width="9.06" height="0.65" fill="#a4d8a2"/><rect x="206.79" y="12.45" width="9.44" height="0.65" fill="#a4d8a2"/><rect x="217.03" y="12.00" width="1.00" height="0.55" fill="#a4d8a2" opacity="0.8"/><rect x="218.48" y="12.45" width="1.00" height="0.55" fill="#a4d8a2" opacity="0.8"/><rect x="219.93" y="12.00" width="1.00" height="0.55" fill="#a4d8a2" opacity="0.8"/><rect x="221.38" y="12.00" width="1.00" height="0.55" fill="#a4d8a2" opacity="0.8"/><rect x="222.82" y="12.45" width="1.00" height="0.55" fill="#a4d8a2" opacity="0.8"/><rect x="224.27" y="12.00" width="1.00" height="0.55" fill="#a4d8a2" opacity="0.8"/><rect x="225.72" y="12.00" width="1.00" height="0.55" fill="#a4d8a2" opacity="0.8"/><rect x="227.17" y="12.45" width="1.00" height="0.55" fill="#a4d8a2" opacity="0.8"/><rect x="228.62" y="12.00" width="1.00" height="0.55" fill="#a4d8a2" opacity="0.8"/><rect x="230.07" y="12.00" width="1.00" height="0.55" fill="#a4d8a2" opacity="0.8"/><rect x="231.52" y="12.45" width="1.00" height="0.55" fill="#a4d8a2" opacity="0.8"/><rect x="232.97" y="12.00" width="1.00" height="0.55" fill="#a4d8a2" opacity="0.8"/><rect x="234.42" y="12.00" width="1.00" height="0.55" fill="#a4d8a2" opacity="0.8"/><rect x="236.70" y="12.30" width="9.06" height="0.65" fill="#a4d8a2"/><rect x="246.14" y="12.45" width="9.44" height="0.65" fill="#a4d8a2"/><rect x="256.38" y="12.00" width="1.00" height="0.55" fill="#a4d8a2" opacity="0.8"/><rect x="257.83" y="12.45" width="1.00" height="0.55" fill="#a4d8a2" opacity="0.8"/><rect x="259.28" y="12.00" width="1.00" height="0.55" fill="#a4d8a2" opacity="0.8"/><rect x="260.73" y="12.00" width="1.00" height="0.55" fill="#a4d8a2" opacity="0.8"/><rect x="262.18" y="12.45" width="1.00" height="0.55" fill="#a4d8a2" opacity="0.8"/><rect x="263.62" y="12.00" width="1.00" height="0.55" fill="#a4d8a2" opacity="0.8"/><rect x="265.07" y="12.00" width="1.00" height="0.55" fill="#a4d8a2" opacity="0.8"/><rect x="266.52" y="12.45" width="1.00" height="0.55" fill="#a4d8a2" opacity="0.8"/><rect x="267.97" y="12.00" width="1.00" height="0.55" fill="#a4d8a2" opacity="0.8"/><rect x="269.42" y="12.00" width="1.00" height="0.55" fill="#a4d8a2" opacity="0.8"/><rect x="270.87" y="12.45" width="1.00" height="0.55" fill="#a4d8a2" opacity="0.8"/><rect x="272.32" y="12.00" width="1.00" height="0.55" fill="#a4d8a2" opacity="0.8"/><rect x="273.77" y="12.00" width="1.00" height="0.55" fill="#a4d8a2" opacity="0.8"/><rect x="276.05" y="12.30" width="9.06" height="0.65" fill="#a4d8a2"/><rect x="285.49" y="12.45" width="9.44" height="0.65" fill="#a4d8a2"/><rect x="295.73" y="12.00" width="1.00" height="0.55" fill="#a4d8a2" opacity="0.8"/><rect x="297.18" y="12.45" width="1.00" height="0.55" fill="#a4d8a2" opacity="0.8"/><rect x="298.63" y="12.00" width="1.00" height="0.55" fill="#a4d8a2" opacity="0.8"/><rect x="300.08" y="12.00" width="1.00" height="0.55" fill="#a4d8a2" opacity="0.8"/><rect x="301.53" y="12.45" width="1.00" height="0.55" fill="#a4d8a2" opacity="0.8"/><rect x="302.98" y="12.00" width="1.00" height="0.55" fill="#a4d8a2" opacity="0.8"/><rect x="304.43" y="12.00" width="1.00" height="0.55" fill="#a4d8a2" opacity="0.8"/><rect x="305.88" y="12.45" width="1.00" height="0.55" fill="#a4d8a2" opacity="0.8"/><rect x="307.32" y="12.00" width="1.00" height="0.55" fill="#a4d8a2" opacity="0.8"/><rect x="308.77" y="12.00" width="1.00" height="0.55" fill="#a4d8a2" opacity="0.8"/><rect x="310.22" y="12.45" width="1.00" height="0.55" fill="#a4d8a2" opacity="0.8"/><rect x="311.67" y="12.00" width="1.00" height="0.55" fill="#a4d8a2" opacity="0.8"/><rect x="313.12" y="12.00" width="1.00" height="0.55" fill="#a4d8a2" opacity="0.8"/><rect x="315.40" y="12.30" width="9.06" height="0.65" fill="#a4d8a2"/><rect x="324.84" y="12.45" width="9.44" height="0.65" fill="#a4d8a2"/><rect x="335.08" y="12.00" width="1.00" height="0.55" fill="#a4d8a2" opacity="0.8"/><rect x="336.53" y="12.45" width="1.00" height="0.55" fill="#a4d8a2" opacity="0.8"/><rect x="337.98" y="12.00" width="1.00" height="0.55" fill="#a4d8a2" opacity="0.8"/><rect x="339.43" y="12.00" width="1.00" height="0.55" fill="#a4d8a2" opacity="0.8"/><rect x="340.88" y="12.45" width="1.00" height="0.55" fill="#a4d8a2" opacity="0.8"/><rect x="342.33" y="12.00" width="1.00" height="0.55" fill="#a4d8a2" opacity="0.8"/><rect x="343.78" y="12.00" width="1.00" height="0.55" fill="#a4d8a2" opacity="0.8"/><rect x="345.23" y="12.45" width="1.00" height="0.55" fill="#a4d8a2" opacity="0.8"/><rect x="346.68" y="12.00" width="1.00" height="0.55" fill="#a4d8a2" opacity="0.8"/><rect x="348.12" y="12.00" width="1.00" height="0.55" fill="#a4d8a2" opacity="0.8"/><rect x="349.57" y="12.45" width="1.00" height="0.55" fill="#a4d8a2" opacity="0.8"/><rect x="351.02" y="12.00" width="1.00" height="0.55" fill="#a4d8a2" opacity="0.8"/><rect x="352.47" y="12.00" width="1.00" height="0.55" fill="#a4d8a2" opacity="0.8"/><rect x="354.75" y="12.30" width="9.06" height="0.65" fill="#a4d8a2"/><rect x="364.19" y="12.45" width="9.44" height="0.65" fill="#a4d8a2"/><rect x="374.43" y="12.00" width="1.00" height="0.55" fill="#a4d8a2" opacity="0.8"/><rect x="375.88" y="12.45" width="1.00" height="0.55" fill="#a4d8a2" opacity="0.8"/><rect x="377.33" y="12.00" width="1.00" height="0.55" fill="#a4d8a2" opacity="0.8"/><rect x="378.78" y="12.00" width="1.00" height="0.55" fill="#a4d8a2" opacity="0.8"/><rect x="380.23" y="12.45" width="1.00" height="0.55" fill="#a4d8a2" opacity="0.8"/><rect x="381.68" y="12.00" width="1.00" height="0.55" fill="#a4d8a2" opacity="0.8"/><rect x="383.13" y="12.00" width="1.00" height="0.55" fill="#a4d8a2" opacity="0.8"/><rect x="384.58" y="12.45" width="1.00" height="0.55" fill="#a4d8a2" opacity="0.8"/><rect x="386.03" y="12.00" width="1.00" height="0.55" fill="#a4d8a2" opacity="0.8"/><rect x="387.48" y="12.00" width="1.00" height="0.55" fill="#a4d8a2" opacity="0.8"/><rect x="388.93" y="12.45" width="1.00" height="0.55" fill="#a4d8a2" opacity="0.8"/><rect x="390.38" y="12.00" width="1.00" height="0.55" fill="#a4d8a2" opacity="0.8"/><rect x="391.82" y="12.00" width="1.00" height="0.55" fill="#a4d8a2" opacity="0.8"/><rect x="394.10" y="12.30" width="9.06" height="0.65" fill="#a4d8a2"/><rect x="403.54" y="12.45" width="9.44" height="0.65" fill="#a4d8a2"/><rect x="413.78" y="12.00" width="1.00" height="0.55" fill="#a4d8a2" opacity="0.8"/><rect x="415.23" y="12.45" width="1.00" height="0.55" fill="#a4d8a2" opacity="0.8"/><rect x="416.68" y="12.00" width="1.00" height="0.55" fill="#a4d8a2" opacity="0.8"/><rect x="418.13" y="12.00" width="1.00" height="0.55" fill="#a4d8a2" opacity="0.8"/><rect x="419.58" y="12.45" width="1.00" height="0.55" fill="#a4d8a2" opacity="0.8"/><rect x="421.03" y="12.00" width="1.00" height="0.55" fill="#a4d8a2" opacity="0.8"/><rect x="422.48" y="12.00" width="1.00" height="0.55" fill="#a4d8a2" opacity="0.8"/><rect x="423.93" y="12.45" width="1.00" height="0.55" fill="#a4d8a2" opacity="0.8"/><rect x="425.38" y="12.00" width="1.00" height="0.55" fill="#a4d8a2" opacity="0.8"/><rect x="426.83" y="12.00" width="1.00" height="0.55" fill="#a4d8a2" opacity="0.8"/><rect x="428.28" y="12.45" width="1.00" height="0.55" fill="#a4d8a2" opacity="0.8"/><rect x="429.73" y="12.00" width="1.00" height="0.55" fill="#a4d8a2" opacity="0.8"/><rect x="431.18" y="12.00" width="1.00" height="0.55" fill="#a4d8a2" opacity="0.8"/><rect x="433.45" y="12.30" width="9.06" height="0.65" fill="#a4d8a2"/><rect x="442.89" y="12.45" width="9.44" height="0.65" fill="#a4d8a2"/><rect x="453.13" y="12.00" width="1.00" height="0.55" fill="#a4d8a2" opacity="0.8"/><rect x="454.58" y="12.45" width="1.00" height="0.55" fill="#a4d8a2" opacity="0.8"/><rect x="456.03" y="12.00" width="1.00" height="0.55" fill="#a4d8a2" opacity="0.8"/><rect x="457.48" y="12.00" width="1.00" height="0.55" fill="#a4d8a2" opacity="0.8"/><rect x="458.93" y="12.45" width="1.00" height="0.55" fill="#a4d8a2" opacity="0.8"/><rect x="460.38" y="12.00" width="1.00" height="0.55" fill="#a4d8a2" opacity="0.8"/><rect x="461.83" y="12.00" width="1.00" height="0.55" fill="#a4d8a2" opacity="0.8"/><rect x="463.28" y="12.45" width="1.00" height="0.55" fill="#a4d8a2" opacity="0.8"/><rect x="464.73" y="12.00" width="1.00" height="0.55" fill="#a4d8a2" opacity="0.8"/><rect x="466.18" y="12.00" width="1.00" height="0.55" fill="#a4d8a2" opacity="0.8"/><rect x="467.63" y="12.45" width="1.00" height="0.55" fill="#a4d8a2" opacity="0.8"/><rect x="469.08" y="12.00" width="1.00" height="0.55" fill="#a4d8a2" opacity="0.8"/><rect x="470.53" y="12.00" width="1.00" height="0.55" fill="#a4d8a2" opacity="0.8"/><rect x="394.20" y="0.50" width="0.40" height="17.00" fill="#2f6a2e" opacity="0.5"/><text x="1.4" y="5.1" font-size="4.9" letter-spacing="-0.25" fill="#c8e6c4">Inst 5</text><text x="399.30" y="5.1" font-size="4.9" letter-spacing="-0.2" fill="#c8e6c4">Inst 5</text></svg><svg x="555.60" y="38.65" width="78.30" height="18.70" viewBox="0 0 78.30 18.70" overflow="hidden"><rect x="0" y="0" width="78.30" height="18.70" rx="0.8" fill="#1f3f1c"/><rect x="0.35" y="0.3" width="77.60" height="17.20" rx="0.6" fill="#3e7c3b"/><rect x="0.35" y="0.3" width="77.60" height="0.7" fill="#2f6a2e" opacity="0.6"/><rect x="0.60" y="12.30" width="9.06" height="0.65" fill="#a4d8a2"/><rect x="10.04" y="12.45" width="9.44" height="0.65" fill="#a4d8a2"/><rect x="20.28" y="12.00" width="1.00" height="0.55" fill="#a4d8a2" opacity="0.8"/><rect x="21.73" y="12.45" width="1.00" height="0.55" fill="#a4d8a2" opacity="0.8"/><rect x="23.18" y="12.00" width="1.00" height="0.55" fill="#a4d8a2" opacity="0.8"/><rect x="24.62" y="12.00" width="1.00" height="0.55" fill="#a4d8a2" opacity="0.8"/><rect x="26.07" y="12.45" width="1.00" height="0.55" fill="#a4d8a2" opacity="0.8"/><rect x="27.52" y="12.00" width="1.00" height="0.55" fill="#a4d8a2" opacity="0.8"/><rect x="28.97" y="12.00" width="1.00" height="0.55" fill="#a4d8a2" opacity="0.8"/><rect x="30.42" y="12.45" width="1.00" height="0.55" fill="#a4d8a2" opacity="0.8"/><rect x="31.87" y="12.00" width="1.00" height="0.55" fill="#a4d8a2" opacity="0.8"/><rect x="33.32" y="12.00" width="1.00" height="0.55" fill="#a4d8a2" opacity="0.8"/><rect x="34.77" y="12.45" width="1.00" height="0.55" fill="#a4d8a2" opacity="0.8"/><rect x="36.23" y="12.00" width="1.00" height="0.55" fill="#a4d8a2" opacity="0.8"/><rect x="37.68" y="12.00" width="1.00" height="0.55" fill="#a4d8a2" opacity="0.8"/><rect x="39.95" y="12.30" width="9.06" height="0.65" fill="#a4d8a2"/><rect x="49.39" y="12.45" width="9.44" height="0.65" fill="#a4d8a2"/><rect x="59.62" y="12.00" width="1.00" height="0.55" fill="#a4d8a2" opacity="0.8"/><rect x="61.08" y="12.45" width="1.00" height="0.55" fill="#a4d8a2" opacity="0.8"/><rect x="62.53" y="12.00" width="1.00" height="0.55" fill="#a4d8a2" opacity="0.8"/><rect x="63.98" y="12.00" width="1.00" height="0.55" fill="#a4d8a2" opacity="0.8"/><rect x="65.43" y="12.45" width="1.00" height="0.55" fill="#a4d8a2" opacity="0.8"/><rect x="66.88" y="12.00" width="1.00" height="0.55" fill="#a4d8a2" opacity="0.8"/><rect x="68.33" y="12.00" width="1.00" height="0.55" fill="#a4d8a2" opacity="0.8"/><rect x="69.78" y="12.45" width="1.00" height="0.55" fill="#a4d8a2" opacity="0.8"/><rect x="71.23" y="12.00" width="1.00" height="0.55" fill="#a4d8a2" opacity="0.8"/><rect x="72.68" y="12.00" width="1.00" height="0.55" fill="#a4d8a2" opacity="0.8"/><rect x="74.13" y="12.45" width="1.00" height="0.55" fill="#a4d8a2" opacity="0.8"/><rect x="75.58" y="12.00" width="1.00" height="0.55" fill="#a4d8a2" opacity="0.8"/><text x="1.4" y="5.1" font-size="4.9" letter-spacing="-0.25" fill="#c8e6c4">Inst 5</text></svg><svg x="42.60" y="57.70" width="78.30" height="18.70" viewBox="0 0 78.30 18.70" overflow="hidden"><rect x="0" y="0" width="78.30" height="18.70" rx="0.8" fill="#1f3f1c"/><rect x="0.35" y="0.3" width="77.60" height="17.20" rx="0.6" fill="#3e7c3b"/><rect x="0.35" y="0.3" width="77.60" height="0.7" fill="#2f6a2e" opacity="0.6"/><rect x="2.00" y="13.00" width="35.88" height="0.70" fill="#a4d8a2"/><rect x="12.48" y="12.40" width="17.16" height="0.55" fill="#a4d8a2" opacity="0.8"/><rect x="39.00" y="13.20" width="36.66" height="0.80" fill="#a4d8a2"/><rect x="39.00" y="12.70" width="23.40" height="0.50" fill="#a4d8a2" opacity="0.8"/><text x="1.4" y="5.1" font-size="4.9" letter-spacing="-0.25" fill="#c8e6c4">Inst 2</text></svg><svg x="121.20" y="57.70" width="78.70" height="18.70" viewBox="0 0 78.70 18.70" overflow="hidden"><rect x="0" y="0" width="78.70" height="18.70" rx="0.8" fill="#1f3f1c"/><rect x="0.35" y="0.3" width="78.00" height="17.20" rx="0.6" fill="#3e7c3b"/><rect x="0.35" y="0.3" width="78.00" height="0.7" fill="#2f6a2e" opacity="0.6"/><rect x="0.80" y="11.60" width="1.00" height="0.55" fill="#a4d8a2" opacity="0.9"/><rect x="2.35" y="12.50" width="1.00" height="0.55" fill="#a4d8a2" opacity="0.9"/><rect x="3.90" y="11.80" width="1.00" height="0.55" fill="#a4d8a2" opacity="0.9"/><rect x="5.45" y="12.60" width="1.00" height="0.55" fill="#a4d8a2" opacity="0.9"/><rect x="7.00" y="11.10" width="1.00" height="0.55" fill="#a4d8a2" opacity="0.9"/><rect x="8.55" y="12.20" width="1.00" height="0.55" fill="#a4d8a2" opacity="0.9"/><rect x="10.10" y="11.60" width="1.00" height="0.55" fill="#a4d8a2" opacity="0.9"/><rect x="11.65" y="12.50" width="1.00" height="0.55" fill="#a4d8a2" opacity="0.9"/><rect x="13.20" y="11.80" width="1.00" height="0.55" fill="#a4d8a2" opacity="0.9"/><rect x="14.75" y="12.60" width="1.00" height="0.55" fill="#a4d8a2" opacity="0.9"/><rect x="16.30" y="11.10" width="1.00" height="0.55" fill="#a4d8a2" opacity="0.9"/><rect x="17.85" y="12.20" width="1.00" height="0.55" fill="#a4d8a2" opacity="0.9"/><rect x="0.60" y="15.50" width="18.00" height="0.75" fill="#a4d8a2"/><rect x="19.60" y="11.00" width="1.50" height="0.55" fill="#a4d8a2" opacity="0.9"/><rect x="21.90" y="11.50" width="1.50" height="0.55" fill="#a4d8a2" opacity="0.9"/><rect x="24.20" y="11.00" width="1.50" height="0.55" fill="#a4d8a2" opacity="0.9"/><rect x="26.50" y="11.50" width="1.50" height="0.55" fill="#a4d8a2" opacity="0.9"/><rect x="28.80" y="11.00" width="1.50" height="0.55" fill="#a4d8a2" opacity="0.9"/><rect x="31.10" y="11.50" width="1.50" height="0.55" fill="#a4d8a2" opacity="0.9"/><rect x="33.40" y="11.00" width="1.50" height="0.55" fill="#a4d8a2" opacity="0.9"/><rect x="35.70" y="11.50" width="1.50" height="0.55" fill="#a4d8a2" opacity="0.9"/><rect x="38.00" y="11.00" width="1.50" height="0.55" fill="#a4d8a2" opacity="0.9"/><rect x="19.20" y="12.90" width="18.60" height="0.70" fill="#a4d8a2"/><rect x="24.40" y="8.10" width="2.40" height="0.55" fill="#a4d8a2" opacity="0.85"/><rect x="27.60" y="7.60" width="2.40" height="0.55" fill="#a4d8a2" opacity="0.85"/><rect x="30.80" y="7.60" width="2.40" height="0.55" fill="#a4d8a2" opacity="0.85"/><rect x="34.00" y="8.10" width="2.40" height="0.55" fill="#a4d8a2" opacity="0.85"/><rect x="40.15" y="11.60" width="1.00" height="0.55" fill="#a4d8a2" opacity="0.9"/><rect x="41.70" y="12.50" width="1.00" height="0.55" fill="#a4d8a2" opacity="0.9"/><rect x="43.25" y="11.80" width="1.00" height="0.55" fill="#a4d8a2" opacity="0.9"/><rect x="44.80" y="12.60" width="1.00" height="0.55" fill="#a4d8a2" opacity="0.9"/><rect x="46.35" y="11.10" width="1.00" height="0.55" fill="#a4d8a2" opacity="0.9"/><rect x="47.90" y="12.20" width="1.00" height="0.55" fill="#a4d8a2" opacity="0.9"/><rect x="49.45" y="11.60" width="1.00" height="0.55" fill="#a4d8a2" opacity="0.9"/><rect x="51.00" y="12.50" width="1.00" height="0.55" fill="#a4d8a2" opacity="0.9"/><rect x="52.55" y="11.80" width="1.00" height="0.55" fill="#a4d8a2" opacity="0.9"/><rect x="54.10" y="12.60" width="1.00" height="0.55" fill="#a4d8a2" opacity="0.9"/><rect x="55.65" y="11.10" width="1.00" height="0.55" fill="#a4d8a2" opacity="0.9"/><rect x="57.20" y="12.20" width="1.00" height="0.55" fill="#a4d8a2" opacity="0.9"/><rect x="39.95" y="15.50" width="18.00" height="0.75" fill="#a4d8a2"/><rect x="58.95" y="11.00" width="1.50" height="0.55" fill="#a4d8a2" opacity="0.9"/><rect x="61.25" y="11.50" width="1.50" height="0.55" fill="#a4d8a2" opacity="0.9"/><rect x="63.55" y="11.00" width="1.50" height="0.55" fill="#a4d8a2" opacity="0.9"/><rect x="65.85" y="11.50" width="1.50" height="0.55" fill="#a4d8a2" opacity="0.9"/><rect x="68.15" y="11.00" width="1.50" height="0.55" fill="#a4d8a2" opacity="0.9"/><rect x="70.45" y="11.50" width="1.50" height="0.55" fill="#a4d8a2" opacity="0.9"/><rect x="72.75" y="11.00" width="1.50" height="0.55" fill="#a4d8a2" opacity="0.9"/><rect x="75.05" y="11.50" width="1.50" height="0.55" fill="#a4d8a2" opacity="0.9"/><rect x="77.35" y="11.00" width="1.50" height="0.55" fill="#a4d8a2" opacity="0.9"/><rect x="58.55" y="12.90" width="18.60" height="0.70" fill="#a4d8a2"/><rect x="63.75" y="8.10" width="2.40" height="0.55" fill="#a4d8a2" opacity="0.85"/><rect x="66.95" y="7.60" width="2.40" height="0.55" fill="#a4d8a2" opacity="0.85"/><rect x="70.15" y="7.60" width="2.40" height="0.55" fill="#a4d8a2" opacity="0.85"/><rect x="73.35" y="8.10" width="2.40" height="0.55" fill="#a4d8a2" opacity="0.85"/><text x="1.4" y="5.1" font-size="4.9" letter-spacing="-0.25" fill="#c8e6c4">Inst 2</text></svg><svg x="200.20" y="57.70" width="157.30" height="18.70" viewBox="0 0 157.30 18.70" overflow="hidden"><rect x="0" y="0" width="157.30" height="18.70" rx="0.8" fill="#1f3f1c"/><rect x="0.35" y="0.3" width="156.60" height="17.20" rx="0.6" fill="#3e7c3b"/><rect x="0.35" y="0.3" width="156.60" height="0.7" fill="#2f6a2e" opacity="0.6"/><rect x="0.80" y="11.60" width="1.00" height="0.55" fill="#a4d8a2" opacity="0.9"/><rect x="2.35" y="12.50" width="1.00" height="0.55" fill="#a4d8a2" opacity="0.9"/><rect x="3.90" y="11.80" width="1.00" height="0.55" fill="#a4d8a2" opacity="0.9"/><rect x="5.45" y="12.60" width="1.00" height="0.55" fill="#a4d8a2" opacity="0.9"/><rect x="7.00" y="11.10" width="1.00" height="0.55" fill="#a4d8a2" opacity="0.9"/><rect x="8.55" y="12.20" width="1.00" height="0.55" fill="#a4d8a2" opacity="0.9"/><rect x="10.10" y="11.60" width="1.00" height="0.55" fill="#a4d8a2" opacity="0.9"/><rect x="11.65" y="12.50" width="1.00" height="0.55" fill="#a4d8a2" opacity="0.9"/><rect x="13.20" y="11.80" width="1.00" height="0.55" fill="#a4d8a2" opacity="0.9"/><rect x="14.75" y="12.60" width="1.00" height="0.55" fill="#a4d8a2" opacity="0.9"/><rect x="16.30" y="11.10" width="1.00" height="0.55" fill="#a4d8a2" opacity="0.9"/><rect x="17.85" y="12.20" width="1.00" height="0.55" fill="#a4d8a2" opacity="0.9"/><rect x="0.60" y="15.50" width="18.00" height="0.75" fill="#a4d8a2"/><rect x="19.60" y="11.00" width="1.50" height="0.55" fill="#a4d8a2" opacity="0.9"/><rect x="21.90" y="11.50" width="1.50" height="0.55" fill="#a4d8a2" opacity="0.9"/><rect x="24.20" y="11.00" width="1.50" height="0.55" fill="#a4d8a2" opacity="0.9"/><rect x="26.50" y="11.50" width="1.50" height="0.55" fill="#a4d8a2" opacity="0.9"/><rect x="28.80" y="11.00" width="1.50" height="0.55" fill="#a4d8a2" opacity="0.9"/><rect x="31.10" y="11.50" width="1.50" height="0.55" fill="#a4d8a2" opacity="0.9"/><rect x="33.40" y="11.00" width="1.50" height="0.55" fill="#a4d8a2" opacity="0.9"/><rect x="35.70" y="11.50" width="1.50" height="0.55" fill="#a4d8a2" opacity="0.9"/><rect x="38.00" y="11.00" width="1.50" height="0.55" fill="#a4d8a2" opacity="0.9"/><rect x="19.20" y="12.90" width="18.60" height="0.70" fill="#a4d8a2"/><rect x="24.40" y="8.10" width="2.40" height="0.55" fill="#a4d8a2" opacity="0.85"/><rect x="27.60" y="7.60" width="2.40" height="0.55" fill="#a4d8a2" opacity="0.85"/><rect x="30.80" y="7.60" width="2.40" height="0.55" fill="#a4d8a2" opacity="0.85"/><rect x="34.00" y="8.10" width="2.40" height="0.55" fill="#a4d8a2" opacity="0.85"/><rect x="40.15" y="11.60" width="1.00" height="0.55" fill="#a4d8a2" opacity="0.9"/><rect x="41.70" y="12.50" width="1.00" height="0.55" fill="#a4d8a2" opacity="0.9"/><rect x="43.25" y="11.80" width="1.00" height="0.55" fill="#a4d8a2" opacity="0.9"/><rect x="44.80" y="12.60" width="1.00" height="0.55" fill="#a4d8a2" opacity="0.9"/><rect x="46.35" y="11.10" width="1.00" height="0.55" fill="#a4d8a2" opacity="0.9"/><rect x="47.90" y="12.20" width="1.00" height="0.55" fill="#a4d8a2" opacity="0.9"/><rect x="49.45" y="11.60" width="1.00" height="0.55" fill="#a4d8a2" opacity="0.9"/><rect x="51.00" y="12.50" width="1.00" height="0.55" fill="#a4d8a2" opacity="0.9"/><rect x="52.55" y="11.80" width="1.00" height="0.55" fill="#a4d8a2" opacity="0.9"/><rect x="54.10" y="12.60" width="1.00" height="0.55" fill="#a4d8a2" opacity="0.9"/><rect x="55.65" y="11.10" width="1.00" height="0.55" fill="#a4d8a2" opacity="0.9"/><rect x="57.20" y="12.20" width="1.00" height="0.55" fill="#a4d8a2" opacity="0.9"/><rect x="39.95" y="15.50" width="18.00" height="0.75" fill="#a4d8a2"/><rect x="58.95" y="11.00" width="1.50" height="0.55" fill="#a4d8a2" opacity="0.9"/><rect x="61.25" y="11.50" width="1.50" height="0.55" fill="#a4d8a2" opacity="0.9"/><rect x="63.55" y="11.00" width="1.50" height="0.55" fill="#a4d8a2" opacity="0.9"/><rect x="65.85" y="11.50" width="1.50" height="0.55" fill="#a4d8a2" opacity="0.9"/><rect x="68.15" y="11.00" width="1.50" height="0.55" fill="#a4d8a2" opacity="0.9"/><rect x="70.45" y="11.50" width="1.50" height="0.55" fill="#a4d8a2" opacity="0.9"/><rect x="72.75" y="11.00" width="1.50" height="0.55" fill="#a4d8a2" opacity="0.9"/><rect x="75.05" y="11.50" width="1.50" height="0.55" fill="#a4d8a2" opacity="0.9"/><rect x="77.35" y="11.00" width="1.50" height="0.55" fill="#a4d8a2" opacity="0.9"/><rect x="58.55" y="12.90" width="18.60" height="0.70" fill="#a4d8a2"/><rect x="63.75" y="8.10" width="2.40" height="0.55" fill="#a4d8a2" opacity="0.85"/><rect x="66.95" y="7.60" width="2.40" height="0.55" fill="#a4d8a2" opacity="0.85"/><rect x="70.15" y="7.60" width="2.40" height="0.55" fill="#a4d8a2" opacity="0.85"/><rect x="73.35" y="8.10" width="2.40" height="0.55" fill="#a4d8a2" opacity="0.85"/><rect x="80.70" y="13.00" width="36.11" height="0.70" fill="#a4d8a2"/><rect x="91.26" y="12.40" width="17.27" height="0.55" fill="#a4d8a2" opacity="0.8"/><rect x="117.95" y="13.20" width="36.89" height="0.80" fill="#a4d8a2"/><rect x="117.95" y="12.70" width="23.55" height="0.50" fill="#a4d8a2" opacity="0.8"/><text x="1.4" y="5.1" font-size="4.9" letter-spacing="-0.25" fill="#c8e6c4">Inst 2</text></svg><svg x="397.80" y="57.70" width="78.10" height="18.70" viewBox="0 0 78.10 18.70" overflow="hidden"><rect x="0" y="0" width="78.10" height="18.70" rx="0.8" fill="#1f3f1c"/><rect x="0.35" y="0.3" width="77.40" height="17.20" rx="0.6" fill="#3e7c3b"/><rect x="0.35" y="0.3" width="77.40" height="0.7" fill="#2f6a2e" opacity="0.6"/><rect x="0.80" y="11.60" width="1.00" height="0.55" fill="#a4d8a2" opacity="0.9"/><rect x="2.35" y="12.50" width="1.00" height="0.55" fill="#a4d8a2" opacity="0.9"/><rect x="3.90" y="11.80" width="1.00" height="0.55" fill="#a4d8a2" opacity="0.9"/><rect x="5.45" y="12.60" width="1.00" height="0.55" fill="#a4d8a2" opacity="0.9"/><rect x="7.00" y="11.10" width="1.00" height="0.55" fill="#a4d8a2" opacity="0.9"/><rect x="8.55" y="12.20" width="1.00" height="0.55" fill="#a4d8a2" opacity="0.9"/><rect x="10.10" y="11.60" width="1.00" height="0.55" fill="#a4d8a2" opacity="0.9"/><rect x="11.65" y="12.50" width="1.00" height="0.55" fill="#a4d8a2" opacity="0.9"/><rect x="13.20" y="11.80" width="1.00" height="0.55" fill="#a4d8a2" opacity="0.9"/><rect x="14.75" y="12.60" width="1.00" height="0.55" fill="#a4d8a2" opacity="0.9"/><rect x="16.30" y="11.10" width="1.00" height="0.55" fill="#a4d8a2" opacity="0.9"/><rect x="17.85" y="12.20" width="1.00" height="0.55" fill="#a4d8a2" opacity="0.9"/><rect x="0.60" y="15.50" width="18.00" height="0.75" fill="#a4d8a2"/><rect x="19.60" y="11.00" width="1.50" height="0.55" fill="#a4d8a2" opacity="0.9"/><rect x="21.90" y="11.50" width="1.50" height="0.55" fill="#a4d8a2" opacity="0.9"/><rect x="24.20" y="11.00" width="1.50" height="0.55" fill="#a4d8a2" opacity="0.9"/><rect x="26.50" y="11.50" width="1.50" height="0.55" fill="#a4d8a2" opacity="0.9"/><rect x="28.80" y="11.00" width="1.50" height="0.55" fill="#a4d8a2" opacity="0.9"/><rect x="31.10" y="11.50" width="1.50" height="0.55" fill="#a4d8a2" opacity="0.9"/><rect x="33.40" y="11.00" width="1.50" height="0.55" fill="#a4d8a2" opacity="0.9"/><rect x="35.70" y="11.50" width="1.50" height="0.55" fill="#a4d8a2" opacity="0.9"/><rect x="38.00" y="11.00" width="1.50" height="0.55" fill="#a4d8a2" opacity="0.9"/><rect x="19.20" y="12.90" width="18.60" height="0.70" fill="#a4d8a2"/><rect x="24.40" y="8.10" width="2.40" height="0.55" fill="#a4d8a2" opacity="0.85"/><rect x="27.60" y="7.60" width="2.40" height="0.55" fill="#a4d8a2" opacity="0.85"/><rect x="30.80" y="7.60" width="2.40" height="0.55" fill="#a4d8a2" opacity="0.85"/><rect x="34.00" y="8.10" width="2.40" height="0.55" fill="#a4d8a2" opacity="0.85"/><rect x="40.15" y="11.60" width="1.00" height="0.55" fill="#a4d8a2" opacity="0.9"/><rect x="41.70" y="12.50" width="1.00" height="0.55" fill="#a4d8a2" opacity="0.9"/><rect x="43.25" y="11.80" width="1.00" height="0.55" fill="#a4d8a2" opacity="0.9"/><rect x="44.80" y="12.60" width="1.00" height="0.55" fill="#a4d8a2" opacity="0.9"/><rect x="46.35" y="11.10" width="1.00" height="0.55" fill="#a4d8a2" opacity="0.9"/><rect x="47.90" y="12.20" width="1.00" height="0.55" fill="#a4d8a2" opacity="0.9"/><rect x="49.45" y="11.60" width="1.00" height="0.55" fill="#a4d8a2" opacity="0.9"/><rect x="51.00" y="12.50" width="1.00" height="0.55" fill="#a4d8a2" opacity="0.9"/><rect x="52.55" y="11.80" width="1.00" height="0.55" fill="#a4d8a2" opacity="0.9"/><rect x="54.10" y="12.60" width="1.00" height="0.55" fill="#a4d8a2" opacity="0.9"/><rect x="55.65" y="11.10" width="1.00" height="0.55" fill="#a4d8a2" opacity="0.9"/><rect x="57.20" y="12.20" width="1.00" height="0.55" fill="#a4d8a2" opacity="0.9"/><rect x="39.95" y="15.50" width="18.00" height="0.75" fill="#a4d8a2"/><rect x="58.95" y="11.00" width="1.50" height="0.55" fill="#a4d8a2" opacity="0.9"/><rect x="61.25" y="11.50" width="1.50" height="0.55" fill="#a4d8a2" opacity="0.9"/><rect x="63.55" y="11.00" width="1.50" height="0.55" fill="#a4d8a2" opacity="0.9"/><rect x="65.85" y="11.50" width="1.50" height="0.55" fill="#a4d8a2" opacity="0.9"/><rect x="68.15" y="11.00" width="1.50" height="0.55" fill="#a4d8a2" opacity="0.9"/><rect x="70.45" y="11.50" width="1.50" height="0.55" fill="#a4d8a2" opacity="0.9"/><rect x="72.75" y="11.00" width="1.50" height="0.55" fill="#a4d8a2" opacity="0.9"/><rect x="75.05" y="11.50" width="1.50" height="0.55" fill="#a4d8a2" opacity="0.9"/><rect x="58.55" y="12.90" width="18.60" height="0.70" fill="#a4d8a2"/><rect x="63.75" y="8.10" width="2.40" height="0.55" fill="#a4d8a2" opacity="0.85"/><rect x="66.95" y="7.60" width="2.40" height="0.55" fill="#a4d8a2" opacity="0.85"/><rect x="70.15" y="7.60" width="2.40" height="0.55" fill="#a4d8a2" opacity="0.85"/><rect x="73.35" y="8.10" width="2.40" height="0.55" fill="#a4d8a2" opacity="0.85"/><text x="1.4" y="5.1" font-size="4.9" letter-spacing="-0.25" fill="#c8e6c4">Inst 2</text></svg><svg x="476.20" y="57.70" width="78.50" height="18.70" viewBox="0 0 78.50 18.70" overflow="hidden"><rect x="0" y="0" width="78.50" height="18.70" rx="0.8" fill="#1f3f1c"/><rect x="0.35" y="0.3" width="77.80" height="17.20" rx="0.6" fill="#3e7c3b"/><rect x="0.35" y="0.3" width="77.80" height="0.7" fill="#2f6a2e" opacity="0.6"/><rect x="0.80" y="11.60" width="1.00" height="0.55" fill="#a4d8a2" opacity="0.9"/><rect x="2.35" y="12.50" width="1.00" height="0.55" fill="#a4d8a2" opacity="0.9"/><rect x="3.90" y="11.80" width="1.00" height="0.55" fill="#a4d8a2" opacity="0.9"/><rect x="5.45" y="12.60" width="1.00" height="0.55" fill="#a4d8a2" opacity="0.9"/><rect x="7.00" y="11.10" width="1.00" height="0.55" fill="#a4d8a2" opacity="0.9"/><rect x="8.55" y="12.20" width="1.00" height="0.55" fill="#a4d8a2" opacity="0.9"/><rect x="10.10" y="11.60" width="1.00" height="0.55" fill="#a4d8a2" opacity="0.9"/><rect x="11.65" y="12.50" width="1.00" height="0.55" fill="#a4d8a2" opacity="0.9"/><rect x="13.20" y="11.80" width="1.00" height="0.55" fill="#a4d8a2" opacity="0.9"/><rect x="14.75" y="12.60" width="1.00" height="0.55" fill="#a4d8a2" opacity="0.9"/><rect x="16.30" y="11.10" width="1.00" height="0.55" fill="#a4d8a2" opacity="0.9"/><rect x="17.85" y="12.20" width="1.00" height="0.55" fill="#a4d8a2" opacity="0.9"/><rect x="0.60" y="15.50" width="18.00" height="0.75" fill="#a4d8a2"/><rect x="19.60" y="11.00" width="1.50" height="0.55" fill="#a4d8a2" opacity="0.9"/><rect x="21.90" y="11.50" width="1.50" height="0.55" fill="#a4d8a2" opacity="0.9"/><rect x="24.20" y="11.00" width="1.50" height="0.55" fill="#a4d8a2" opacity="0.9"/><rect x="26.50" y="11.50" width="1.50" height="0.55" fill="#a4d8a2" opacity="0.9"/><rect x="28.80" y="11.00" width="1.50" height="0.55" fill="#a4d8a2" opacity="0.9"/><rect x="31.10" y="11.50" width="1.50" height="0.55" fill="#a4d8a2" opacity="0.9"/><rect x="33.40" y="11.00" width="1.50" height="0.55" fill="#a4d8a2" opacity="0.9"/><rect x="35.70" y="11.50" width="1.50" height="0.55" fill="#a4d8a2" opacity="0.9"/><rect x="38.00" y="11.00" width="1.50" height="0.55" fill="#a4d8a2" opacity="0.9"/><rect x="19.20" y="12.90" width="18.60" height="0.70" fill="#a4d8a2"/><rect x="24.40" y="8.10" width="2.40" height="0.55" fill="#a4d8a2" opacity="0.85"/><rect x="27.60" y="7.60" width="2.40" height="0.55" fill="#a4d8a2" opacity="0.85"/><rect x="30.80" y="7.60" width="2.40" height="0.55" fill="#a4d8a2" opacity="0.85"/><rect x="34.00" y="8.10" width="2.40" height="0.55" fill="#a4d8a2" opacity="0.85"/><rect x="40.15" y="11.60" width="1.00" height="0.55" fill="#a4d8a2" opacity="0.9"/><rect x="41.70" y="12.50" width="1.00" height="0.55" fill="#a4d8a2" opacity="0.9"/><rect x="43.25" y="11.80" width="1.00" height="0.55" fill="#a4d8a2" opacity="0.9"/><rect x="44.80" y="12.60" width="1.00" height="0.55" fill="#a4d8a2" opacity="0.9"/><rect x="46.35" y="11.10" width="1.00" height="0.55" fill="#a4d8a2" opacity="0.9"/><rect x="47.90" y="12.20" width="1.00" height="0.55" fill="#a4d8a2" opacity="0.9"/><rect x="49.45" y="11.60" width="1.00" height="0.55" fill="#a4d8a2" opacity="0.9"/><rect x="51.00" y="12.50" width="1.00" height="0.55" fill="#a4d8a2" opacity="0.9"/><rect x="52.55" y="11.80" width="1.00" height="0.55" fill="#a4d8a2" opacity="0.9"/><rect x="54.10" y="12.60" width="1.00" height="0.55" fill="#a4d8a2" opacity="0.9"/><rect x="55.65" y="11.10" width="1.00" height="0.55" fill="#a4d8a2" opacity="0.9"/><rect x="57.20" y="12.20" width="1.00" height="0.55" fill="#a4d8a2" opacity="0.9"/><rect x="39.95" y="15.50" width="18.00" height="0.75" fill="#a4d8a2"/><rect x="58.95" y="11.00" width="1.50" height="0.55" fill="#a4d8a2" opacity="0.9"/><rect x="61.25" y="11.50" width="1.50" height="0.55" fill="#a4d8a2" opacity="0.9"/><rect x="63.55" y="11.00" width="1.50" height="0.55" fill="#a4d8a2" opacity="0.9"/><rect x="65.85" y="11.50" width="1.50" height="0.55" fill="#a4d8a2" opacity="0.9"/><rect x="68.15" y="11.00" width="1.50" height="0.55" fill="#a4d8a2" opacity="0.9"/><rect x="70.45" y="11.50" width="1.50" height="0.55" fill="#a4d8a2" opacity="0.9"/><rect x="72.75" y="11.00" width="1.50" height="0.55" fill="#a4d8a2" opacity="0.9"/><rect x="75.05" y="11.50" width="1.50" height="0.55" fill="#a4d8a2" opacity="0.9"/><rect x="58.55" y="12.90" width="18.60" height="0.70" fill="#a4d8a2"/><rect x="63.75" y="8.10" width="2.40" height="0.55" fill="#a4d8a2" opacity="0.85"/><rect x="66.95" y="7.60" width="2.40" height="0.55" fill="#a4d8a2" opacity="0.85"/><rect x="70.15" y="7.60" width="2.40" height="0.55" fill="#a4d8a2" opacity="0.85"/><rect x="73.35" y="8.10" width="2.40" height="0.55" fill="#a4d8a2" opacity="0.85"/><text x="1.4" y="5.1" font-size="4.9" letter-spacing="-0.25" fill="#c8e6c4">Inst 2</text></svg><svg x="588.80" y="76.75" width="91.10" height="18.70" viewBox="0 0 91.10 18.70" overflow="hidden"><rect x="0" y="0" width="91.10" height="18.70" rx="0.8" fill="#1f3f1c"/><rect x="0.35" y="0.3" width="90.40" height="17.20" rx="0.6" fill="#3e7c3b"/><rect x="0.35" y="0.3" width="90.40" height="0.7" fill="#2f6a2e" opacity="0.6"/><rect x="5.00" y="12.10" width="7.00" height="2.50" fill="#a4d8a2" opacity="0.45"/><rect x="5.00" y="12.10" width="7.00" height="0.70" fill="#a4d8a2"/><rect x="5.00" y="13.90" width="7.00" height="0.70" fill="#a4d8a2"/><rect x="13.00" y="13.00" width="11.00" height="0.60" fill="#a4d8a2" opacity="0.7"/><rect x="21.00" y="12.10" width="9.00" height="2.50" fill="#a4d8a2" opacity="0.45"/><rect x="21.00" y="12.10" width="9.00" height="0.70" fill="#a4d8a2"/><rect x="21.00" y="13.90" width="9.00" height="0.70" fill="#a4d8a2"/><rect x="31.00" y="12.10" width="8.00" height="2.50" fill="#a4d8a2" opacity="0.45"/><rect x="31.00" y="12.10" width="8.00" height="0.70" fill="#a4d8a2"/><rect x="31.00" y="13.90" width="8.00" height="0.70" fill="#a4d8a2"/><rect x="41.00" y="12.10" width="9.00" height="2.50" fill="#a4d8a2" opacity="0.7"/><rect x="41.00" y="12.10" width="9.00" height="0.70" fill="#a4d8a2"/><rect x="41.00" y="13.90" width="9.00" height="0.70" fill="#a4d8a2"/><rect x="51.00" y="13.00" width="9.00" height="0.60" fill="#a4d8a2" opacity="0.7"/><rect x="25.00" y="15.00" width="10.00" height="0.60" fill="#a4d8a2"/><rect x="35.00" y="15.00" width="4.00" height="0.60" fill="#a4d8a2"/><rect x="51.00" y="11.20" width="10.00" height="0.60" fill="#a4d8a2" opacity="0.75"/><rect x="61.00" y="9.60" width="9.00" height="0.60" fill="#a4d8a2" opacity="0.75"/><rect x="70.00" y="8.00" width="6.00" height="0.60" fill="#a4d8a2" opacity="0.75"/><rect x="76.00" y="9.40" width="14.00" height="0.60" fill="#a4d8a2" opacity="0.75"/><text x="1.4" y="5.1" font-size="4.9" letter-spacing="-0.25" fill="#c8e6c4">Inst 6</text></svg><svg x="3.20" y="95.80" width="39.00" height="18.70" viewBox="0 0 39.00 18.70" overflow="hidden"><rect x="0" y="0" width="39.00" height="18.70" rx="0.8" fill="#1f3f1c"/><rect x="0.35" y="0.3" width="38.30" height="17.20" rx="0.6" fill="#3e7c3b"/><rect x="0.35" y="0.3" width="38.30" height="0.7" fill="#2f6a2e" opacity="0.6"/><rect x="0.80" y="12.90" width="37.50" height="0.70" fill="#a4d8a2"/><rect x="8.00" y="12.40" width="12.00" height="0.50" fill="#a4d8a2" opacity="0.7"/><text x="1.4" y="5.1" font-size="4.9" letter-spacing="-0.11" fill="#c8e6c4">Grotrian Intimate (prepead)</text></svg><svg x="42.50" y="95.80" width="39.00" height="18.70" viewBox="0 0 39.00 18.70" overflow="hidden"><rect x="0" y="0" width="39.00" height="18.70" rx="0.8" fill="#1f3f1c"/><rect x="0.35" y="0.3" width="38.30" height="17.20" rx="0.6" fill="#3e7c3b"/><rect x="0.35" y="0.3" width="38.30" height="0.7" fill="#2f6a2e" opacity="0.6"/><rect x="0.80" y="12.90" width="37.50" height="0.70" fill="#a4d8a2"/><rect x="6.00" y="12.40" width="14.00" height="0.50" fill="#a4d8a2" opacity="0.7"/><text x="1.4" y="5.1" font-size="4.9" letter-spacing="-0.11" fill="#c8e6c4">Grotrian Intimate (prepead)</text></svg><svg x="81.80" y="95.80" width="118.10" height="18.70" viewBox="0 0 118.10 18.70" overflow="hidden"><rect x="0" y="0" width="118.10" height="18.70" rx="0.8" fill="#1f3f1c"/><rect x="0.35" y="0.3" width="117.40" height="17.20" rx="0.6" fill="#3e7c3b"/><rect x="0.35" y="0.3" width="117.40" height="0.7" fill="#2f6a2e" opacity="0.6"/><rect x="0.60" y="8.61" width="0.95" height="0.55" fill="#a4d8a2" opacity="0.9"/><rect x="1.90" y="9.44" width="0.95" height="0.55" fill="#a4d8a2" opacity="0.9"/><rect x="3.20" y="10.61" width="0.95" height="0.55" fill="#a4d8a2" opacity="0.9"/><rect x="4.50" y="11.35" width="0.95" height="0.55" fill="#a4d8a2" opacity="0.9"/><rect x="5.80" y="11.18" width="0.95" height="0.55" fill="#a4d8a2" opacity="0.9"/><rect x="7.10" y="10.21" width="0.95" height="0.55" fill="#a4d8a2" opacity="0.9"/><rect x="8.40" y="9.07" width="0.95" height="0.55" fill="#a4d8a2" opacity="0.9"/><rect x="9.70" y="8.51" width="0.95" height="0.55" fill="#a4d8a2" opacity="0.9"/><rect x="11.00" y="8.88" width="0.95" height="0.55" fill="#a4d8a2" opacity="0.9"/><rect x="12.30" y="9.95" width="0.95" height="0.55" fill="#a4d8a2" opacity="0.9"/><rect x="13.60" y="11.02" width="0.95" height="0.55" fill="#a4d8a2" opacity="0.9"/><rect x="14.90" y="11.39" width="0.95" height="0.55" fill="#a4d8a2" opacity="0.9"/><rect x="16.20" y="10.83" width="0.95" height="0.55" fill="#a4d8a2" opacity="0.9"/><rect x="17.50" y="9.69" width="0.95" height="0.55" fill="#a4d8a2" opacity="0.9"/><rect x="18.80" y="8.72" width="0.95" height="0.55" fill="#a4d8a2" opacity="0.9"/><rect x="20.10" y="8.55" width="0.95" height="0.55" fill="#a4d8a2" opacity="0.9"/><rect x="21.40" y="9.29" width="0.95" height="0.55" fill="#a4d8a2" opacity="0.9"/><rect x="22.70" y="10.46" width="0.95" height="0.55" fill="#a4d8a2" opacity="0.9"/><rect x="24.00" y="11.30" width="0.95" height="0.55" fill="#a4d8a2" opacity="0.9"/><rect x="25.30" y="11.25" width="0.95" height="0.55" fill="#a4d8a2" opacity="0.9"/><rect x="26.60" y="10.36" width="0.95" height="0.55" fill="#a4d8a2" opacity="0.9"/><rect x="27.90" y="9.20" width="0.95" height="0.55" fill="#a4d8a2" opacity="0.9"/><rect x="29.20" y="8.53" width="0.95" height="0.55" fill="#a4d8a2" opacity="0.9"/><rect x="30.50" y="8.78" width="0.95" height="0.55" fill="#a4d8a2" opacity="0.9"/><rect x="31.80" y="9.79" width="0.95" height="0.55" fill="#a4d8a2" opacity="0.9"/><rect x="33.10" y="10.91" width="0.95" height="0.55" fill="#a4d8a2" opacity="0.9"/><rect x="34.40" y="11.40" width="0.95" height="0.55" fill="#a4d8a2" opacity="0.9"/><rect x="35.70" y="10.95" width="0.95" height="0.55" fill="#a4d8a2" opacity="0.9"/><rect x="37.00" y="9.85" width="0.95" height="0.55" fill="#a4d8a2" opacity="0.9"/><rect x="38.30" y="8.81" width="0.95" height="0.55" fill="#a4d8a2" opacity="0.9"/><rect x="39.60" y="8.52" width="0.95" height="0.55" fill="#a4d8a2" opacity="0.9"/><rect x="40.90" y="9.15" width="0.95" height="0.55" fill="#a4d8a2" opacity="0.9"/><rect x="42.20" y="10.31" width="0.95" height="0.55" fill="#a4d8a2" opacity="0.9"/><rect x="43.50" y="11.23" width="0.95" height="0.55" fill="#a4d8a2" opacity="0.9"/><rect x="44.80" y="11.32" width="0.95" height="0.55" fill="#a4d8a2" opacity="0.9"/><rect x="46.10" y="10.52" width="0.95" height="0.55" fill="#a4d8a2" opacity="0.9"/><rect x="47.40" y="9.35" width="0.95" height="0.55" fill="#a4d8a2" opacity="0.9"/><rect x="48.70" y="8.57" width="0.95" height="0.55" fill="#a4d8a2" opacity="0.9"/><rect x="50.00" y="8.69" width="0.95" height="0.55" fill="#a4d8a2" opacity="0.9"/><rect x="51.30" y="9.63" width="0.95" height="0.55" fill="#a4d8a2" opacity="0.9"/><rect x="52.60" y="10.78" width="0.95" height="0.55" fill="#a4d8a2" opacity="0.9"/><rect x="53.90" y="11.39" width="0.95" height="0.55" fill="#a4d8a2" opacity="0.9"/><rect x="55.20" y="11.06" width="0.95" height="0.55" fill="#a4d8a2" opacity="0.9"/><rect x="56.50" y="10.01" width="0.95" height="0.55" fill="#a4d8a2" opacity="0.9"/><rect x="57.80" y="8.92" width="0.95" height="0.55" fill="#a4d8a2" opacity="0.9"/><rect x="59.10" y="8.50" width="0.95" height="0.55" fill="#a4d8a2" opacity="0.9"/><rect x="60.40" y="9.02" width="0.95" height="0.55" fill="#a4d8a2" opacity="0.9"/><rect x="61.70" y="10.15" width="0.95" height="0.55" fill="#a4d8a2" opacity="0.9"/><rect x="63.00" y="11.14" width="0.95" height="0.55" fill="#a4d8a2" opacity="0.9"/><rect x="64.30" y="11.36" width="0.95" height="0.55" fill="#a4d8a2" opacity="0.9"/><rect x="65.60" y="10.66" width="0.95" height="0.55" fill="#a4d8a2" opacity="0.9"/><rect x="66.90" y="9.50" width="0.95" height="0.55" fill="#a4d8a2" opacity="0.9"/><rect x="68.20" y="8.63" width="0.95" height="0.55" fill="#a4d8a2" opacity="0.9"/><rect x="69.50" y="8.62" width="0.95" height="0.55" fill="#a4d8a2" opacity="0.9"/><rect x="70.80" y="9.48" width="0.95" height="0.55" fill="#a4d8a2" opacity="0.9"/><rect x="72.10" y="10.64" width="0.95" height="0.55" fill="#a4d8a2" opacity="0.9"/><rect x="73.40" y="11.36" width="0.95" height="0.55" fill="#a4d8a2" opacity="0.9"/><rect x="74.70" y="11.16" width="0.95" height="0.55" fill="#a4d8a2" opacity="0.9"/><rect x="76.00" y="10.17" width="0.95" height="0.55" fill="#a4d8a2" opacity="0.9"/><rect x="77.30" y="9.04" width="0.95" height="0.55" fill="#a4d8a2" opacity="0.9"/><rect x="78.60" y="8.50" width="0.95" height="0.55" fill="#a4d8a2" opacity="0.9"/><rect x="79.90" y="8.91" width="0.95" height="0.55" fill="#a4d8a2" opacity="0.9"/><rect x="81.20" y="9.99" width="0.95" height="0.55" fill="#a4d8a2" opacity="0.9"/><rect x="82.50" y="11.05" width="0.95" height="0.55" fill="#a4d8a2" opacity="0.9"/><rect x="83.80" y="11.39" width="0.95" height="0.55" fill="#a4d8a2" opacity="0.9"/><rect x="85.10" y="10.80" width="0.95" height="0.55" fill="#a4d8a2" opacity="0.9"/><rect x="86.40" y="9.65" width="0.95" height="0.55" fill="#a4d8a2" opacity="0.9"/><rect x="87.70" y="8.70" width="0.95" height="0.55" fill="#a4d8a2" opacity="0.9"/><rect x="89.00" y="8.56" width="0.95" height="0.55" fill="#a4d8a2" opacity="0.9"/><rect x="90.30" y="9.33" width="0.95" height="0.55" fill="#a4d8a2" opacity="0.9"/><rect x="91.60" y="10.49" width="0.95" height="0.55" fill="#a4d8a2" opacity="0.9"/><rect x="92.90" y="11.31" width="0.95" height="0.55" fill="#a4d8a2" opacity="0.9"/><rect x="94.20" y="11.24" width="0.95" height="0.55" fill="#a4d8a2" opacity="0.9"/><rect x="95.50" y="10.33" width="0.95" height="0.55" fill="#a4d8a2" opacity="0.9"/><rect x="96.80" y="9.17" width="0.95" height="0.55" fill="#a4d8a2" opacity="0.9"/><rect x="98.10" y="8.52" width="0.95" height="0.55" fill="#a4d8a2" opacity="0.9"/><rect x="99.40" y="8.80" width="0.95" height="0.55" fill="#a4d8a2" opacity="0.9"/><rect x="100.70" y="9.83" width="0.95" height="0.55" fill="#a4d8a2" opacity="0.9"/><rect x="102.00" y="10.93" width="0.95" height="0.55" fill="#a4d8a2" opacity="0.9"/><rect x="103.30" y="11.40" width="0.95" height="0.55" fill="#a4d8a2" opacity="0.9"/><rect x="104.60" y="10.92" width="0.95" height="0.55" fill="#a4d8a2" opacity="0.9"/><rect x="105.90" y="9.81" width="0.95" height="0.55" fill="#a4d8a2" opacity="0.9"/><rect x="107.20" y="8.79" width="0.95" height="0.55" fill="#a4d8a2" opacity="0.9"/><rect x="108.50" y="8.52" width="0.95" height="0.55" fill="#a4d8a2" opacity="0.9"/><rect x="109.80" y="9.18" width="0.95" height="0.55" fill="#a4d8a2" opacity="0.9"/><rect x="111.10" y="10.34" width="0.95" height="0.55" fill="#a4d8a2" opacity="0.9"/><rect x="112.40" y="11.24" width="0.95" height="0.55" fill="#a4d8a2" opacity="0.9"/><rect x="113.70" y="11.31" width="0.95" height="0.55" fill="#a4d8a2" opacity="0.9"/><rect x="115.00" y="10.48" width="0.95" height="0.55" fill="#a4d8a2" opacity="0.9"/><rect x="116.30" y="9.32" width="0.95" height="0.55" fill="#a4d8a2" opacity="0.9"/><rect x="0.80" y="15.40" width="4.40" height="0.70" fill="#a4d8a2"/><rect x="10.40" y="15.40" width="4.80" height="0.70" fill="#a4d8a2"/><rect x="20.40" y="13.50" width="4.80" height="0.70" fill="#a4d8a2"/><rect x="29.80" y="13.50" width="5.00" height="0.70" fill="#a4d8a2"/><rect x="40.15" y="15.40" width="4.40" height="0.70" fill="#a4d8a2"/><rect x="49.75" y="15.40" width="4.80" height="0.70" fill="#a4d8a2"/><rect x="59.75" y="13.50" width="4.80" height="0.70" fill="#a4d8a2"/><rect x="69.15" y="13.50" width="5.00" height="0.70" fill="#a4d8a2"/><rect x="79.50" y="15.40" width="4.40" height="0.70" fill="#a4d8a2"/><rect x="89.10" y="15.40" width="4.80" height="0.70" fill="#a4d8a2"/><rect x="99.10" y="13.50" width="4.80" height="0.70" fill="#a4d8a2"/><rect x="108.50" y="13.50" width="5.00" height="0.70" fill="#a4d8a2"/><text x="1.4" y="5.1" font-size="4.9" letter-spacing="-0.11" fill="#c8e6c4">Grotrian Intimate (prepead)</text></svg><svg x="200.20" y="95.80" width="78.70" height="18.70" viewBox="0 0 78.70 18.70" overflow="hidden"><rect x="0" y="0" width="78.70" height="18.70" rx="0.8" fill="#1f3f1c"/><rect x="0.35" y="0.3" width="78.00" height="17.20" rx="0.6" fill="#3e7c3b"/><rect x="0.35" y="0.3" width="78.00" height="0.7" fill="#2f6a2e" opacity="0.6"/><rect x="0.60" y="8.61" width="0.95" height="0.55" fill="#a4d8a2" opacity="0.9"/><rect x="1.90" y="9.44" width="0.95" height="0.55" fill="#a4d8a2" opacity="0.9"/><rect x="3.20" y="10.61" width="0.95" height="0.55" fill="#a4d8a2" opacity="0.9"/><rect x="4.50" y="11.35" width="0.95" height="0.55" fill="#a4d8a2" opacity="0.9"/><rect x="5.80" y="11.18" width="0.95" height="0.55" fill="#a4d8a2" opacity="0.9"/><rect x="7.10" y="10.21" width="0.95" height="0.55" fill="#a4d8a2" opacity="0.9"/><rect x="8.40" y="9.07" width="0.95" height="0.55" fill="#a4d8a2" opacity="0.9"/><rect x="9.70" y="8.51" width="0.95" height="0.55" fill="#a4d8a2" opacity="0.9"/><rect x="11.00" y="8.88" width="0.95" height="0.55" fill="#a4d8a2" opacity="0.9"/><rect x="12.30" y="9.95" width="0.95" height="0.55" fill="#a4d8a2" opacity="0.9"/><rect x="13.60" y="11.02" width="0.95" height="0.55" fill="#a4d8a2" opacity="0.9"/><rect x="14.90" y="11.39" width="0.95" height="0.55" fill="#a4d8a2" opacity="0.9"/><rect x="16.20" y="10.83" width="0.95" height="0.55" fill="#a4d8a2" opacity="0.9"/><rect x="17.50" y="9.69" width="0.95" height="0.55" fill="#a4d8a2" opacity="0.9"/><rect x="18.80" y="8.72" width="0.95" height="0.55" fill="#a4d8a2" opacity="0.9"/><rect x="20.10" y="8.55" width="0.95" height="0.55" fill="#a4d8a2" opacity="0.9"/><rect x="21.40" y="9.29" width="0.95" height="0.55" fill="#a4d8a2" opacity="0.9"/><rect x="22.70" y="10.46" width="0.95" height="0.55" fill="#a4d8a2" opacity="0.9"/><rect x="24.00" y="11.30" width="0.95" height="0.55" fill="#a4d8a2" opacity="0.9"/><rect x="25.30" y="11.25" width="0.95" height="0.55" fill="#a4d8a2" opacity="0.9"/><rect x="26.60" y="10.36" width="0.95" height="0.55" fill="#a4d8a2" opacity="0.9"/><rect x="27.90" y="9.20" width="0.95" height="0.55" fill="#a4d8a2" opacity="0.9"/><rect x="29.20" y="8.53" width="0.95" height="0.55" fill="#a4d8a2" opacity="0.9"/><rect x="30.50" y="8.78" width="0.95" height="0.55" fill="#a4d8a2" opacity="0.9"/><rect x="31.80" y="9.79" width="0.95" height="0.55" fill="#a4d8a2" opacity="0.9"/><rect x="33.10" y="10.91" width="0.95" height="0.55" fill="#a4d8a2" opacity="0.9"/><rect x="34.40" y="11.40" width="0.95" height="0.55" fill="#a4d8a2" opacity="0.9"/><rect x="35.70" y="10.95" width="0.95" height="0.55" fill="#a4d8a2" opacity="0.9"/><rect x="37.00" y="9.85" width="0.95" height="0.55" fill="#a4d8a2" opacity="0.9"/><rect x="38.30" y="8.81" width="0.95" height="0.55" fill="#a4d8a2" opacity="0.9"/><rect x="39.60" y="8.52" width="0.95" height="0.55" fill="#a4d8a2" opacity="0.9"/><rect x="40.90" y="9.15" width="0.95" height="0.55" fill="#a4d8a2" opacity="0.9"/><rect x="42.20" y="10.31" width="0.95" height="0.55" fill="#a4d8a2" opacity="0.9"/><rect x="43.50" y="11.23" width="0.95" height="0.55" fill="#a4d8a2" opacity="0.9"/><rect x="44.80" y="11.32" width="0.95" height="0.55" fill="#a4d8a2" opacity="0.9"/><rect x="46.10" y="10.52" width="0.95" height="0.55" fill="#a4d8a2" opacity="0.9"/><rect x="47.40" y="9.35" width="0.95" height="0.55" fill="#a4d8a2" opacity="0.9"/><rect x="48.70" y="8.57" width="0.95" height="0.55" fill="#a4d8a2" opacity="0.9"/><rect x="50.00" y="8.69" width="0.95" height="0.55" fill="#a4d8a2" opacity="0.9"/><rect x="51.30" y="9.63" width="0.95" height="0.55" fill="#a4d8a2" opacity="0.9"/><rect x="52.60" y="10.78" width="0.95" height="0.55" fill="#a4d8a2" opacity="0.9"/><rect x="53.90" y="11.39" width="0.95" height="0.55" fill="#a4d8a2" opacity="0.9"/><rect x="55.20" y="11.06" width="0.95" height="0.55" fill="#a4d8a2" opacity="0.9"/><rect x="56.50" y="10.01" width="0.95" height="0.55" fill="#a4d8a2" opacity="0.9"/><rect x="57.80" y="8.92" width="0.95" height="0.55" fill="#a4d8a2" opacity="0.9"/><rect x="59.10" y="8.50" width="0.95" height="0.55" fill="#a4d8a2" opacity="0.9"/><rect x="60.40" y="9.02" width="0.95" height="0.55" fill="#a4d8a2" opacity="0.9"/><rect x="61.70" y="10.15" width="0.95" height="0.55" fill="#a4d8a2" opacity="0.9"/><rect x="63.00" y="11.14" width="0.95" height="0.55" fill="#a4d8a2" opacity="0.9"/><rect x="64.30" y="11.36" width="0.95" height="0.55" fill="#a4d8a2" opacity="0.9"/><rect x="65.60" y="10.66" width="0.95" height="0.55" fill="#a4d8a2" opacity="0.9"/><rect x="66.90" y="9.50" width="0.95" height="0.55" fill="#a4d8a2" opacity="0.9"/><rect x="68.20" y="8.63" width="0.95" height="0.55" fill="#a4d8a2" opacity="0.9"/><rect x="69.50" y="8.62" width="0.95" height="0.55" fill="#a4d8a2" opacity="0.9"/><rect x="70.80" y="9.48" width="0.95" height="0.55" fill="#a4d8a2" opacity="0.9"/><rect x="72.10" y="10.64" width="0.95" height="0.55" fill="#a4d8a2" opacity="0.9"/><rect x="73.40" y="11.36" width="0.95" height="0.55" fill="#a4d8a2" opacity="0.9"/><rect x="74.70" y="11.16" width="0.95" height="0.55" fill="#a4d8a2" opacity="0.9"/><rect x="76.00" y="10.17" width="0.95" height="0.55" fill="#a4d8a2" opacity="0.9"/><rect x="77.30" y="9.04" width="0.95" height="0.55" fill="#a4d8a2" opacity="0.9"/><rect x="0.80" y="15.40" width="4.40" height="0.70" fill="#a4d8a2"/><rect x="10.40" y="15.40" width="4.80" height="0.70" fill="#a4d8a2"/><rect x="20.40" y="13.50" width="4.80" height="0.70" fill="#a4d8a2"/><rect x="29.80" y="13.50" width="5.00" height="0.70" fill="#a4d8a2"/><rect x="40.15" y="15.40" width="4.40" height="0.70" fill="#a4d8a2"/><rect x="49.75" y="15.40" width="4.80" height="0.70" fill="#a4d8a2"/><rect x="59.75" y="13.50" width="4.80" height="0.70" fill="#a4d8a2"/><rect x="69.15" y="13.50" width="5.00" height="0.70" fill="#a4d8a2"/><text x="1.4" y="5.1" font-size="4.9" letter-spacing="-0.11" fill="#c8e6c4">Grotrian Intimate (prepead)</text></svg><svg x="358.20" y="95.80" width="39.10" height="18.70" viewBox="0 0 39.10 18.70" overflow="hidden"><rect x="0" y="0" width="39.10" height="18.70" rx="0.8" fill="#1f3f1c"/><rect x="0.35" y="0.3" width="38.40" height="17.20" rx="0.6" fill="#3e7c3b"/><rect x="0.35" y="0.3" width="38.40" height="0.7" fill="#2f6a2e" opacity="0.6"/><rect x="0.60" y="8.61" width="0.95" height="0.55" fill="#a4d8a2" opacity="0.9"/><rect x="1.90" y="9.44" width="0.95" height="0.55" fill="#a4d8a2" opacity="0.9"/><rect x="3.20" y="10.61" width="0.95" height="0.55" fill="#a4d8a2" opacity="0.9"/><rect x="4.50" y="11.35" width="0.95" height="0.55" fill="#a4d8a2" opacity="0.9"/><rect x="5.80" y="11.18" width="0.95" height="0.55" fill="#a4d8a2" opacity="0.9"/><rect x="7.10" y="10.21" width="0.95" height="0.55" fill="#a4d8a2" opacity="0.9"/><rect x="8.40" y="9.07" width="0.95" height="0.55" fill="#a4d8a2" opacity="0.9"/><rect x="9.70" y="8.51" width="0.95" height="0.55" fill="#a4d8a2" opacity="0.9"/><rect x="11.00" y="8.88" width="0.95" height="0.55" fill="#a4d8a2" opacity="0.9"/><rect x="12.30" y="9.95" width="0.95" height="0.55" fill="#a4d8a2" opacity="0.9"/><rect x="13.60" y="11.02" width="0.95" height="0.55" fill="#a4d8a2" opacity="0.9"/><rect x="14.90" y="11.39" width="0.95" height="0.55" fill="#a4d8a2" opacity="0.9"/><rect x="16.20" y="10.83" width="0.95" height="0.55" fill="#a4d8a2" opacity="0.9"/><rect x="17.50" y="9.69" width="0.95" height="0.55" fill="#a4d8a2" opacity="0.9"/><rect x="18.80" y="8.72" width="0.95" height="0.55" fill="#a4d8a2" opacity="0.9"/><rect x="20.10" y="8.55" width="0.95" height="0.55" fill="#a4d8a2" opacity="0.9"/><rect x="21.40" y="9.29" width="0.95" height="0.55" fill="#a4d8a2" opacity="0.9"/><rect x="22.70" y="10.46" width="0.95" height="0.55" fill="#a4d8a2" opacity="0.9"/><rect x="24.00" y="11.30" width="0.95" height="0.55" fill="#a4d8a2" opacity="0.9"/><rect x="25.30" y="11.25" width="0.95" height="0.55" fill="#a4d8a2" opacity="0.9"/><rect x="26.60" y="10.36" width="0.95" height="0.55" fill="#a4d8a2" opacity="0.9"/><rect x="27.90" y="9.20" width="0.95" height="0.55" fill="#a4d8a2" opacity="0.9"/><rect x="29.20" y="8.53" width="0.95" height="0.55" fill="#a4d8a2" opacity="0.9"/><rect x="30.50" y="8.78" width="0.95" height="0.55" fill="#a4d8a2" opacity="0.9"/><rect x="31.80" y="9.79" width="0.95" height="0.55" fill="#a4d8a2" opacity="0.9"/><rect x="33.10" y="10.91" width="0.95" height="0.55" fill="#a4d8a2" opacity="0.9"/><rect x="34.40" y="11.40" width="0.95" height="0.55" fill="#a4d8a2" opacity="0.9"/><rect x="35.70" y="10.95" width="0.95" height="0.55" fill="#a4d8a2" opacity="0.9"/><rect x="37.00" y="9.85" width="0.95" height="0.55" fill="#a4d8a2" opacity="0.9"/><rect x="0.80" y="15.40" width="4.40" height="0.70" fill="#a4d8a2"/><rect x="10.40" y="15.40" width="4.80" height="0.70" fill="#a4d8a2"/><rect x="20.40" y="13.50" width="4.80" height="0.70" fill="#a4d8a2"/><rect x="29.80" y="13.50" width="5.00" height="0.70" fill="#a4d8a2"/><text x="1.4" y="5.1" font-size="4.9" letter-spacing="-0.11" fill="#c8e6c4">Grotrian Intimate (prepead)</text></svg><svg x="397.60" y="95.80" width="78.30" height="18.70" viewBox="0 0 78.30 18.70" overflow="hidden"><rect x="0" y="0" width="78.30" height="18.70" rx="0.8" fill="#1f3f1c"/><rect x="0.35" y="0.3" width="77.60" height="17.20" rx="0.6" fill="#3e7c3b"/><rect x="0.35" y="0.3" width="77.60" height="0.7" fill="#2f6a2e" opacity="0.6"/><rect x="0.60" y="8.61" width="0.95" height="0.55" fill="#a4d8a2" opacity="0.9"/><rect x="1.90" y="9.44" width="0.95" height="0.55" fill="#a4d8a2" opacity="0.9"/><rect x="3.20" y="10.61" width="0.95" height="0.55" fill="#a4d8a2" opacity="0.9"/><rect x="4.50" y="11.35" width="0.95" height="0.55" fill="#a4d8a2" opacity="0.9"/><rect x="5.80" y="11.18" width="0.95" height="0.55" fill="#a4d8a2" opacity="0.9"/><rect x="7.10" y="10.21" width="0.95" height="0.55" fill="#a4d8a2" opacity="0.9"/><rect x="8.40" y="9.07" width="0.95" height="0.55" fill="#a4d8a2" opacity="0.9"/><rect x="9.70" y="8.51" width="0.95" height="0.55" fill="#a4d8a2" opacity="0.9"/><rect x="11.00" y="8.88" width="0.95" height="0.55" fill="#a4d8a2" opacity="0.9"/><rect x="12.30" y="9.95" width="0.95" height="0.55" fill="#a4d8a2" opacity="0.9"/><rect x="13.60" y="11.02" width="0.95" height="0.55" fill="#a4d8a2" opacity="0.9"/><rect x="14.90" y="11.39" width="0.95" height="0.55" fill="#a4d8a2" opacity="0.9"/><rect x="16.20" y="10.83" width="0.95" height="0.55" fill="#a4d8a2" opacity="0.9"/><rect x="17.50" y="9.69" width="0.95" height="0.55" fill="#a4d8a2" opacity="0.9"/><rect x="18.80" y="8.72" width="0.95" height="0.55" fill="#a4d8a2" opacity="0.9"/><rect x="20.10" y="8.55" width="0.95" height="0.55" fill="#a4d8a2" opacity="0.9"/><rect x="21.40" y="9.29" width="0.95" height="0.55" fill="#a4d8a2" opacity="0.9"/><rect x="22.70" y="10.46" width="0.95" height="0.55" fill="#a4d8a2" opacity="0.9"/><rect x="24.00" y="11.30" width="0.95" height="0.55" fill="#a4d8a2" opacity="0.9"/><rect x="25.30" y="11.25" width="0.95" height="0.55" fill="#a4d8a2" opacity="0.9"/><rect x="26.60" y="10.36" width="0.95" height="0.55" fill="#a4d8a2" opacity="0.9"/><rect x="27.90" y="9.20" width="0.95" height="0.55" fill="#a4d8a2" opacity="0.9"/><rect x="29.20" y="8.53" width="0.95" height="0.55" fill="#a4d8a2" opacity="0.9"/><rect x="30.50" y="8.78" width="0.95" height="0.55" fill="#a4d8a2" opacity="0.9"/><rect x="31.80" y="9.79" width="0.95" height="0.55" fill="#a4d8a2" opacity="0.9"/><rect x="33.10" y="10.91" width="0.95" height="0.55" fill="#a4d8a2" opacity="0.9"/><rect x="34.40" y="11.40" width="0.95" height="0.55" fill="#a4d8a2" opacity="0.9"/><rect x="35.70" y="10.95" width="0.95" height="0.55" fill="#a4d8a2" opacity="0.9"/><rect x="37.00" y="9.85" width="0.95" height="0.55" fill="#a4d8a2" opacity="0.9"/><rect x="38.30" y="8.81" width="0.95" height="0.55" fill="#a4d8a2" opacity="0.9"/><rect x="39.60" y="8.52" width="0.95" height="0.55" fill="#a4d8a2" opacity="0.9"/><rect x="40.90" y="9.15" width="0.95" height="0.55" fill="#a4d8a2" opacity="0.9"/><rect x="42.20" y="10.31" width="0.95" height="0.55" fill="#a4d8a2" opacity="0.9"/><rect x="43.50" y="11.23" width="0.95" height="0.55" fill="#a4d8a2" opacity="0.9"/><rect x="44.80" y="11.32" width="0.95" height="0.55" fill="#a4d8a2" opacity="0.9"/><rect x="46.10" y="10.52" width="0.95" height="0.55" fill="#a4d8a2" opacity="0.9"/><rect x="47.40" y="9.35" width="0.95" height="0.55" fill="#a4d8a2" opacity="0.9"/><rect x="48.70" y="8.57" width="0.95" height="0.55" fill="#a4d8a2" opacity="0.9"/><rect x="50.00" y="8.69" width="0.95" height="0.55" fill="#a4d8a2" opacity="0.9"/><rect x="51.30" y="9.63" width="0.95" height="0.55" fill="#a4d8a2" opacity="0.9"/><rect x="52.60" y="10.78" width="0.95" height="0.55" fill="#a4d8a2" opacity="0.9"/><rect x="53.90" y="11.39" width="0.95" height="0.55" fill="#a4d8a2" opacity="0.9"/><rect x="55.20" y="11.06" width="0.95" height="0.55" fill="#a4d8a2" opacity="0.9"/><rect x="56.50" y="10.01" width="0.95" height="0.55" fill="#a4d8a2" opacity="0.9"/><rect x="57.80" y="8.92" width="0.95" height="0.55" fill="#a4d8a2" opacity="0.9"/><rect x="59.10" y="8.50" width="0.95" height="0.55" fill="#a4d8a2" opacity="0.9"/><rect x="60.40" y="9.02" width="0.95" height="0.55" fill="#a4d8a2" opacity="0.9"/><rect x="61.70" y="10.15" width="0.95" height="0.55" fill="#a4d8a2" opacity="0.9"/><rect x="63.00" y="11.14" width="0.95" height="0.55" fill="#a4d8a2" opacity="0.9"/><rect x="64.30" y="11.36" width="0.95" height="0.55" fill="#a4d8a2" opacity="0.9"/><rect x="65.60" y="10.66" width="0.95" height="0.55" fill="#a4d8a2" opacity="0.9"/><rect x="66.90" y="9.50" width="0.95" height="0.55" fill="#a4d8a2" opacity="0.9"/><rect x="68.20" y="8.63" width="0.95" height="0.55" fill="#a4d8a2" opacity="0.9"/><rect x="69.50" y="8.62" width="0.95" height="0.55" fill="#a4d8a2" opacity="0.9"/><rect x="70.80" y="9.48" width="0.95" height="0.55" fill="#a4d8a2" opacity="0.9"/><rect x="72.10" y="10.64" width="0.95" height="0.55" fill="#a4d8a2" opacity="0.9"/><rect x="73.40" y="11.36" width="0.95" height="0.55" fill="#a4d8a2" opacity="0.9"/><rect x="74.70" y="11.16" width="0.95" height="0.55" fill="#a4d8a2" opacity="0.9"/><rect x="76.00" y="10.17" width="0.95" height="0.55" fill="#a4d8a2" opacity="0.9"/><rect x="0.80" y="15.40" width="4.40" height="0.70" fill="#a4d8a2"/><rect x="10.40" y="15.40" width="4.80" height="0.70" fill="#a4d8a2"/><rect x="20.40" y="13.50" width="4.80" height="0.70" fill="#a4d8a2"/><rect x="29.80" y="13.50" width="5.00" height="0.70" fill="#a4d8a2"/><rect x="40.15" y="15.40" width="4.40" height="0.70" fill="#a4d8a2"/><rect x="49.75" y="15.40" width="4.80" height="0.70" fill="#a4d8a2"/><rect x="59.75" y="13.50" width="4.80" height="0.70" fill="#a4d8a2"/><rect x="69.15" y="13.50" width="5.00" height="0.70" fill="#a4d8a2"/><text x="1.4" y="5.1" font-size="4.9" letter-spacing="-0.11" fill="#c8e6c4">Grotrian Intimate (prepead)</text></svg><svg x="476.20" y="95.80" width="223.70" height="18.70" viewBox="0 0 223.70 18.70" overflow="hidden"><rect x="0" y="0" width="223.70" height="18.70" rx="0.8" fill="#1f3f1c"/><rect x="0.35" y="0.3" width="223.00" height="17.20" rx="0.6" fill="#3e7c3b"/><rect x="0.35" y="0.3" width="223.00" height="0.7" fill="#2f6a2e" opacity="0.6"/><rect x="0.60" y="8.61" width="0.95" height="0.55" fill="#a4d8a2" opacity="0.9"/><rect x="1.90" y="9.44" width="0.95" height="0.55" fill="#a4d8a2" opacity="0.9"/><rect x="3.20" y="10.61" width="0.95" height="0.55" fill="#a4d8a2" opacity="0.9"/><rect x="4.50" y="11.35" width="0.95" height="0.55" fill="#a4d8a2" opacity="0.9"/><rect x="5.80" y="11.18" width="0.95" height="0.55" fill="#a4d8a2" opacity="0.9"/><rect x="7.10" y="10.21" width="0.95" height="0.55" fill="#a4d8a2" opacity="0.9"/><rect x="8.40" y="9.07" width="0.95" height="0.55" fill="#a4d8a2" opacity="0.9"/><rect x="9.70" y="8.51" width="0.95" height="0.55" fill="#a4d8a2" opacity="0.9"/><rect x="11.00" y="8.88" width="0.95" height="0.55" fill="#a4d8a2" opacity="0.9"/><rect x="12.30" y="9.95" width="0.95" height="0.55" fill="#a4d8a2" opacity="0.9"/><rect x="13.60" y="11.02" width="0.95" height="0.55" fill="#a4d8a2" opacity="0.9"/><rect x="14.90" y="11.39" width="0.95" height="0.55" fill="#a4d8a2" opacity="0.9"/><rect x="16.20" y="10.83" width="0.95" height="0.55" fill="#a4d8a2" opacity="0.9"/><rect x="17.50" y="9.69" width="0.95" height="0.55" fill="#a4d8a2" opacity="0.9"/><rect x="18.80" y="8.72" width="0.95" height="0.55" fill="#a4d8a2" opacity="0.9"/><rect x="20.10" y="8.55" width="0.95" height="0.55" fill="#a4d8a2" opacity="0.9"/><rect x="21.40" y="9.29" width="0.95" height="0.55" fill="#a4d8a2" opacity="0.9"/><rect x="22.70" y="10.46" width="0.95" height="0.55" fill="#a4d8a2" opacity="0.9"/><rect x="24.00" y="11.30" width="0.95" height="0.55" fill="#a4d8a2" opacity="0.9"/><rect x="25.30" y="11.25" width="0.95" height="0.55" fill="#a4d8a2" opacity="0.9"/><rect x="26.60" y="10.36" width="0.95" height="0.55" fill="#a4d8a2" opacity="0.9"/><rect x="27.90" y="9.20" width="0.95" height="0.55" fill="#a4d8a2" opacity="0.9"/><rect x="29.20" y="8.53" width="0.95" height="0.55" fill="#a4d8a2" opacity="0.9"/><rect x="30.50" y="8.78" width="0.95" height="0.55" fill="#a4d8a2" opacity="0.9"/><rect x="31.80" y="9.79" width="0.95" height="0.55" fill="#a4d8a2" opacity="0.9"/><rect x="33.10" y="10.91" width="0.95" height="0.55" fill="#a4d8a2" opacity="0.9"/><rect x="34.40" y="11.40" width="0.95" height="0.55" fill="#a4d8a2" opacity="0.9"/><rect x="35.70" y="10.95" width="0.95" height="0.55" fill="#a4d8a2" opacity="0.9"/><rect x="37.00" y="9.85" width="0.95" height="0.55" fill="#a4d8a2" opacity="0.9"/><rect x="38.30" y="8.81" width="0.95" height="0.55" fill="#a4d8a2" opacity="0.9"/><rect x="39.60" y="8.52" width="0.95" height="0.55" fill="#a4d8a2" opacity="0.9"/><rect x="40.90" y="9.15" width="0.95" height="0.55" fill="#a4d8a2" opacity="0.9"/><rect x="42.20" y="10.31" width="0.95" height="0.55" fill="#a4d8a2" opacity="0.9"/><rect x="43.50" y="11.23" width="0.95" height="0.55" fill="#a4d8a2" opacity="0.9"/><rect x="44.80" y="11.32" width="0.95" height="0.55" fill="#a4d8a2" opacity="0.9"/><rect x="46.10" y="10.52" width="0.95" height="0.55" fill="#a4d8a2" opacity="0.9"/><rect x="47.40" y="9.35" width="0.95" height="0.55" fill="#a4d8a2" opacity="0.9"/><rect x="48.70" y="8.57" width="0.95" height="0.55" fill="#a4d8a2" opacity="0.9"/><rect x="50.00" y="8.69" width="0.95" height="0.55" fill="#a4d8a2" opacity="0.9"/><rect x="51.30" y="9.63" width="0.95" height="0.55" fill="#a4d8a2" opacity="0.9"/><rect x="52.60" y="10.78" width="0.95" height="0.55" fill="#a4d8a2" opacity="0.9"/><rect x="53.90" y="11.39" width="0.95" height="0.55" fill="#a4d8a2" opacity="0.9"/><rect x="55.20" y="11.06" width="0.95" height="0.55" fill="#a4d8a2" opacity="0.9"/><rect x="56.50" y="10.01" width="0.95" height="0.55" fill="#a4d8a2" opacity="0.9"/><rect x="57.80" y="8.92" width="0.95" height="0.55" fill="#a4d8a2" opacity="0.9"/><rect x="59.10" y="8.50" width="0.95" height="0.55" fill="#a4d8a2" opacity="0.9"/><rect x="60.40" y="9.02" width="0.95" height="0.55" fill="#a4d8a2" opacity="0.9"/><rect x="61.70" y="10.15" width="0.95" height="0.55" fill="#a4d8a2" opacity="0.9"/><rect x="63.00" y="11.14" width="0.95" height="0.55" fill="#a4d8a2" opacity="0.9"/><rect x="64.30" y="11.36" width="0.95" height="0.55" fill="#a4d8a2" opacity="0.9"/><rect x="65.60" y="10.66" width="0.95" height="0.55" fill="#a4d8a2" opacity="0.9"/><rect x="66.90" y="9.50" width="0.95" height="0.55" fill="#a4d8a2" opacity="0.9"/><rect x="68.20" y="8.63" width="0.95" height="0.55" fill="#a4d8a2" opacity="0.9"/><rect x="69.50" y="8.62" width="0.95" height="0.55" fill="#a4d8a2" opacity="0.9"/><rect x="70.80" y="9.48" width="0.95" height="0.55" fill="#a4d8a2" opacity="0.9"/><rect x="72.10" y="10.64" width="0.95" height="0.55" fill="#a4d8a2" opacity="0.9"/><rect x="73.40" y="11.36" width="0.95" height="0.55" fill="#a4d8a2" opacity="0.9"/><rect x="74.70" y="11.16" width="0.95" height="0.55" fill="#a4d8a2" opacity="0.9"/><rect x="76.00" y="10.17" width="0.95" height="0.55" fill="#a4d8a2" opacity="0.9"/><rect x="77.30" y="9.04" width="0.95" height="0.55" fill="#a4d8a2" opacity="0.9"/><rect x="78.60" y="8.50" width="0.95" height="0.55" fill="#a4d8a2" opacity="0.9"/><rect x="79.90" y="8.91" width="0.95" height="0.55" fill="#a4d8a2" opacity="0.9"/><rect x="81.20" y="9.99" width="0.95" height="0.55" fill="#a4d8a2" opacity="0.9"/><rect x="82.50" y="11.05" width="0.95" height="0.55" fill="#a4d8a2" opacity="0.9"/><rect x="83.80" y="11.39" width="0.95" height="0.55" fill="#a4d8a2" opacity="0.9"/><rect x="85.10" y="10.80" width="0.95" height="0.55" fill="#a4d8a2" opacity="0.9"/><rect x="86.40" y="9.65" width="0.95" height="0.55" fill="#a4d8a2" opacity="0.9"/><rect x="87.70" y="8.70" width="0.95" height="0.55" fill="#a4d8a2" opacity="0.9"/><rect x="89.00" y="8.56" width="0.95" height="0.55" fill="#a4d8a2" opacity="0.9"/><rect x="90.30" y="9.33" width="0.95" height="0.55" fill="#a4d8a2" opacity="0.9"/><rect x="91.60" y="10.49" width="0.95" height="0.55" fill="#a4d8a2" opacity="0.9"/><rect x="92.90" y="11.31" width="0.95" height="0.55" fill="#a4d8a2" opacity="0.9"/><rect x="94.20" y="11.24" width="0.95" height="0.55" fill="#a4d8a2" opacity="0.9"/><rect x="95.50" y="10.33" width="0.95" height="0.55" fill="#a4d8a2" opacity="0.9"/><rect x="96.80" y="9.17" width="0.95" height="0.55" fill="#a4d8a2" opacity="0.9"/><rect x="98.10" y="8.52" width="0.95" height="0.55" fill="#a4d8a2" opacity="0.9"/><rect x="99.40" y="8.80" width="0.95" height="0.55" fill="#a4d8a2" opacity="0.9"/><rect x="100.70" y="9.83" width="0.95" height="0.55" fill="#a4d8a2" opacity="0.9"/><rect x="102.00" y="10.93" width="0.95" height="0.55" fill="#a4d8a2" opacity="0.9"/><rect x="103.30" y="11.40" width="0.95" height="0.55" fill="#a4d8a2" opacity="0.9"/><rect x="104.60" y="10.92" width="0.95" height="0.55" fill="#a4d8a2" opacity="0.9"/><rect x="105.90" y="9.81" width="0.95" height="0.55" fill="#a4d8a2" opacity="0.9"/><rect x="107.20" y="8.79" width="0.95" height="0.55" fill="#a4d8a2" opacity="0.9"/><rect x="108.50" y="8.52" width="0.95" height="0.55" fill="#a4d8a2" opacity="0.9"/><rect x="109.80" y="9.18" width="0.95" height="0.55" fill="#a4d8a2" opacity="0.9"/><rect x="111.10" y="10.34" width="0.95" height="0.55" fill="#a4d8a2" opacity="0.9"/><rect x="112.40" y="11.24" width="0.95" height="0.55" fill="#a4d8a2" opacity="0.9"/><rect x="113.70" y="11.31" width="0.95" height="0.55" fill="#a4d8a2" opacity="0.9"/><rect x="115.00" y="10.48" width="0.95" height="0.55" fill="#a4d8a2" opacity="0.9"/><rect x="116.30" y="9.32" width="0.95" height="0.55" fill="#a4d8a2" opacity="0.9"/><rect x="117.60" y="8.56" width="0.95" height="0.55" fill="#a4d8a2" opacity="0.9"/><rect x="118.90" y="8.71" width="0.95" height="0.55" fill="#a4d8a2" opacity="0.9"/><rect x="120.20" y="9.67" width="0.95" height="0.55" fill="#a4d8a2" opacity="0.9"/><rect x="121.50" y="10.81" width="0.95" height="0.55" fill="#a4d8a2" opacity="0.9"/><rect x="122.80" y="11.39" width="0.95" height="0.55" fill="#a4d8a2" opacity="0.9"/><rect x="124.10" y="11.04" width="0.95" height="0.55" fill="#a4d8a2" opacity="0.9"/><rect x="125.40" y="9.98" width="0.95" height="0.55" fill="#a4d8a2" opacity="0.9"/><rect x="126.70" y="8.90" width="0.95" height="0.55" fill="#a4d8a2" opacity="0.9"/><rect x="128.00" y="8.50" width="0.95" height="0.55" fill="#a4d8a2" opacity="0.9"/><rect x="129.30" y="9.05" width="0.95" height="0.55" fill="#a4d8a2" opacity="0.9"/><rect x="130.60" y="10.18" width="0.95" height="0.55" fill="#a4d8a2" opacity="0.9"/><rect x="131.90" y="11.16" width="0.95" height="0.55" fill="#a4d8a2" opacity="0.9"/><rect x="133.20" y="11.35" width="0.95" height="0.55" fill="#a4d8a2" opacity="0.9"/><rect x="134.50" y="10.63" width="0.95" height="0.55" fill="#a4d8a2" opacity="0.9"/><rect x="135.80" y="9.46" width="0.95" height="0.55" fill="#a4d8a2" opacity="0.9"/><rect x="137.10" y="8.61" width="0.95" height="0.55" fill="#a4d8a2" opacity="0.9"/><rect x="138.40" y="8.63" width="0.95" height="0.55" fill="#a4d8a2" opacity="0.9"/><rect x="139.70" y="9.51" width="0.95" height="0.55" fill="#a4d8a2" opacity="0.9"/><rect x="141.00" y="10.67" width="0.95" height="0.55" fill="#a4d8a2" opacity="0.9"/><rect x="142.30" y="11.37" width="0.95" height="0.55" fill="#a4d8a2" opacity="0.9"/><rect x="143.60" y="11.14" width="0.95" height="0.55" fill="#a4d8a2" opacity="0.9"/><rect x="144.90" y="10.14" width="0.95" height="0.55" fill="#a4d8a2" opacity="0.9"/><rect x="146.20" y="9.02" width="0.95" height="0.55" fill="#a4d8a2" opacity="0.9"/><rect x="147.50" y="8.50" width="0.95" height="0.55" fill="#a4d8a2" opacity="0.9"/><rect x="148.80" y="8.93" width="0.95" height="0.55" fill="#a4d8a2" opacity="0.9"/><rect x="150.10" y="10.02" width="0.95" height="0.55" fill="#a4d8a2" opacity="0.9"/><rect x="151.40" y="11.07" width="0.95" height="0.55" fill="#a4d8a2" opacity="0.9"/><rect x="152.70" y="11.39" width="0.95" height="0.55" fill="#a4d8a2" opacity="0.9"/><rect x="154.00" y="10.77" width="0.95" height="0.55" fill="#a4d8a2" opacity="0.9"/><rect x="155.30" y="9.62" width="0.95" height="0.55" fill="#a4d8a2" opacity="0.9"/><rect x="156.60" y="8.69" width="0.95" height="0.55" fill="#a4d8a2" opacity="0.9"/><rect x="157.90" y="8.57" width="0.95" height="0.55" fill="#a4d8a2" opacity="0.9"/><rect x="159.20" y="9.36" width="0.95" height="0.55" fill="#a4d8a2" opacity="0.9"/><rect x="160.50" y="10.53" width="0.95" height="0.55" fill="#a4d8a2" opacity="0.9"/><rect x="161.80" y="11.32" width="0.95" height="0.55" fill="#a4d8a2" opacity="0.9"/><rect x="163.10" y="11.22" width="0.95" height="0.55" fill="#a4d8a2" opacity="0.9"/><rect x="164.40" y="10.30" width="0.95" height="0.55" fill="#a4d8a2" opacity="0.9"/><rect x="165.70" y="9.14" width="0.95" height="0.55" fill="#a4d8a2" opacity="0.9"/><rect x="167.00" y="8.52" width="0.95" height="0.55" fill="#a4d8a2" opacity="0.9"/><rect x="168.30" y="8.82" width="0.95" height="0.55" fill="#a4d8a2" opacity="0.9"/><rect x="169.60" y="9.86" width="0.95" height="0.55" fill="#a4d8a2" opacity="0.9"/><rect x="170.90" y="10.96" width="0.95" height="0.55" fill="#a4d8a2" opacity="0.9"/><rect x="172.20" y="11.40" width="0.95" height="0.55" fill="#a4d8a2" opacity="0.9"/><rect x="173.50" y="10.90" width="0.95" height="0.55" fill="#a4d8a2" opacity="0.9"/><rect x="174.80" y="9.78" width="0.95" height="0.55" fill="#a4d8a2" opacity="0.9"/><rect x="176.10" y="8.77" width="0.95" height="0.55" fill="#a4d8a2" opacity="0.9"/><rect x="177.40" y="8.53" width="0.95" height="0.55" fill="#a4d8a2" opacity="0.9"/><rect x="178.70" y="9.21" width="0.95" height="0.55" fill="#a4d8a2" opacity="0.9"/><rect x="180.00" y="10.37" width="0.95" height="0.55" fill="#a4d8a2" opacity="0.9"/><rect x="181.30" y="11.26" width="0.95" height="0.55" fill="#a4d8a2" opacity="0.9"/><rect x="182.60" y="11.29" width="0.95" height="0.55" fill="#a4d8a2" opacity="0.9"/><rect x="183.90" y="10.45" width="0.95" height="0.55" fill="#a4d8a2" opacity="0.9"/><rect x="185.20" y="9.28" width="0.95" height="0.55" fill="#a4d8a2" opacity="0.9"/><rect x="186.50" y="8.55" width="0.95" height="0.55" fill="#a4d8a2" opacity="0.9"/><rect x="187.80" y="8.73" width="0.95" height="0.55" fill="#a4d8a2" opacity="0.9"/><rect x="189.10" y="9.70" width="0.95" height="0.55" fill="#a4d8a2" opacity="0.9"/><rect x="190.40" y="10.84" width="0.95" height="0.55" fill="#a4d8a2" opacity="0.9"/><rect x="191.70" y="11.39" width="0.95" height="0.55" fill="#a4d8a2" opacity="0.9"/><rect x="193.00" y="11.01" width="0.95" height="0.55" fill="#a4d8a2" opacity="0.9"/><rect x="194.30" y="9.94" width="0.95" height="0.55" fill="#a4d8a2" opacity="0.9"/><rect x="195.60" y="8.87" width="0.95" height="0.55" fill="#a4d8a2" opacity="0.9"/><rect x="196.90" y="8.51" width="0.95" height="0.55" fill="#a4d8a2" opacity="0.9"/><rect x="198.20" y="9.08" width="0.95" height="0.55" fill="#a4d8a2" opacity="0.9"/><rect x="199.50" y="10.22" width="0.95" height="0.55" fill="#a4d8a2" opacity="0.9"/><rect x="0.80" y="15.40" width="4.40" height="0.70" fill="#a4d8a2"/><rect x="10.40" y="15.40" width="4.80" height="0.70" fill="#a4d8a2"/><rect x="20.40" y="13.50" width="4.80" height="0.70" fill="#a4d8a2"/><rect x="29.80" y="13.50" width="5.00" height="0.70" fill="#a4d8a2"/><rect x="40.15" y="15.40" width="4.40" height="0.70" fill="#a4d8a2"/><rect x="49.75" y="15.40" width="4.80" height="0.70" fill="#a4d8a2"/><rect x="59.75" y="13.50" width="4.80" height="0.70" fill="#a4d8a2"/><rect x="69.15" y="13.50" width="5.00" height="0.70" fill="#a4d8a2"/><rect x="79.50" y="15.40" width="4.40" height="0.70" fill="#a4d8a2"/><rect x="89.10" y="15.40" width="4.80" height="0.70" fill="#a4d8a2"/><rect x="99.10" y="13.50" width="4.80" height="0.70" fill="#a4d8a2"/><rect x="108.50" y="13.50" width="5.00" height="0.70" fill="#a4d8a2"/><rect x="118.85" y="15.40" width="4.40" height="0.70" fill="#a4d8a2"/><rect x="128.45" y="15.40" width="4.80" height="0.70" fill="#a4d8a2"/><rect x="138.45" y="13.50" width="4.80" height="0.70" fill="#a4d8a2"/><rect x="147.85" y="13.50" width="5.00" height="0.70" fill="#a4d8a2"/><text x="1.4" y="5.1" font-size="4.9" letter-spacing="-0.11" fill="#c8e6c4">Grotrian Intimate (prepead)</text></svg></svg>
<svg style="left:0;top:0;pointer-events:none" width="980" height="300" viewBox="0 0 980 300"><g transform="translate(0,-15)"><rect x="0" y="44.5" width="980" height="1.5" fill="#8f97a6"/><rect x="0" y="46" width="980" height="1.2" fill="#3e4450" opacity="0.85"/><rect x="0" y="46" width="1" height="231" fill="#596177"/><rect x="979" y="46" width="1" height="231" fill="#4a5268"/><rect x="0" y="275.6" width="980" height="1.2" fill="#1f2f46"/><rect x="0" y="276.8" width="980" height="1.5" fill="#a7bbd3"/><rect x="0" y="278.3" width="980" height="1.8" fill="#9a9898"/><rect x="0" y="280.1" width="980" height="0.9" fill="#2c2c2c"/></g></svg>
<div style="left:0.00px;top:266.00px;width:980.00px;height:10.40px;background:#464646"></div>
<div style="left:0.00px;top:276.00px;width:980.00px;height:1.00px;background:#363636"></div>
<div style="left:379.60px;top:266.00px;width:55.35px;height:10.20px;background:#6a6a6a"></div>
<div style="left:434.65px;top:266.00px;width:0.60px;height:10.20px;background:#303030"></div>
<div class="t" style="left:379.60px;top:267.67px;width:55.35px;text-align:center;font-size:4.6px;line-height:5.52px;color:#ececec;">ピアノロール</div>
<div style="left:490.00px;top:266.00px;width:0.60px;height:10.20px;background:#303030"></div>
<div class="t" style="left:434.95px;top:267.67px;width:55.35px;text-align:center;font-size:4.6px;line-height:5.52px;color:#d6d6d6;">スコア</div>
<div style="left:545.35px;top:266.00px;width:0.60px;height:10.20px;background:#303030"></div>
<div class="t" style="left:490.30px;top:267.67px;width:55.35px;text-align:center;font-size:4.6px;line-height:5.52px;color:#d6d6d6;">ステップエディタ</div>
<div style="left:600.70px;top:266.00px;width:0.60px;height:10.20px;background:#303030"></div>
<div class="t" style="left:545.65px;top:267.67px;width:55.35px;text-align:center;font-size:4.6px;line-height:5.52px;color:#d6d6d6;">スマートテンポ</div>
<div style="left:379.30px;top:266.00px;width:0.60px;height:10.20px;background:#303030"></div>
<div style="left:0.00px;top:276.80px;width:980.00px;height:10.40px;background:#484848"></div>
<div class="dk" style="left:2.50px;top:277.60px;width:73.50px;height:9.00px;"></div>
<div class="t" style="left:7.60px;top:279.76px;font-size:4.5px;line-height:5.40px;color:#e8e8e8;font-weight:500">編集</div>
<svg style="left:22.20px;top:281.70px" width="2.8" height="2.0" viewBox="0 0 2.8 2.0" preserveAspectRatio="none"><path d="M0.2 0.2L1.4 1.4L2.5999999999999996 0.2" fill="none" stroke="#9a9a9a" stroke-width="0.55"/></svg>
<div class="t" style="left:31.40px;top:279.76px;font-size:4.5px;line-height:5.40px;color:#e8e8e8;font-weight:500">機能</div>
<svg style="left:46.00px;top:281.70px" width="2.8" height="2.0" viewBox="0 0 2.8 2.0" preserveAspectRatio="none"><path d="M0.2 0.2L1.4 1.4L2.5999999999999996 0.2" fill="none" stroke="#9a9a9a" stroke-width="0.55"/></svg>
<div class="t" style="left:55.20px;top:279.76px;font-size:4.5px;line-height:5.40px;color:#e8e8e8;font-weight:500">表示</div>
<svg style="left:69.80px;top:281.70px" width="2.8" height="2.0" viewBox="0 0 2.8 2.0" preserveAspectRatio="none"><path d="M0.2 0.2L1.4 1.4L2.5999999999999996 0.2" fill="none" stroke="#9a9a9a" stroke-width="0.55"/></svg>
<div style="left:78.00px;top:277.90px;width:12.80px;height:8.30px;background:#434343;border-radius:1.5px"></div>
<svg style="left:81.40px;top:279.40px" width="6" height="5.6" viewBox="0 0 6 5.6" preserveAspectRatio="none"><path d="M0.6 2.8H5.4" stroke="#777" stroke-width="0.6"/><circle cx="3" cy="1" r="0.6" fill="#777"/><circle cx="3" cy="4.6" r="0.6" fill="#777"/></svg>
<div class="dk" style="left:93.60px;top:277.90px;width:13.60px;height:8.30px;"></div>
<svg style="left:96.40px;top:279.20px" width="8" height="6" viewBox="0 0 8 6" preserveAspectRatio="none"><path d="M0.4 4.9h2.3L5.4 1.3h2.2" fill="none" stroke="#e8e8e8" stroke-width="0.7"/><circle cx="2.7" cy="4.9" r="0.8" fill="#e8e8e8"/><circle cx="5.4" cy="1.3" r="0.8" fill="#e8e8e8"/></svg>
<div class="dk" style="left:111.00px;top:277.90px;width:11.60px;height:8.30px;"></div>
<svg style="left:112.20px;top:279.20px" width="10" height="6" viewBox="0 0 10 6" preserveAspectRatio="none"><path d="M0.4 1.8L1.6 3L0.4 4.2" fill="none" stroke="#ddd" stroke-width="0.55"/><circle cx="5.4" cy="3" r="2.5" fill="#eee"/><circle cx="4.2" cy="3" r="0.45" fill="#333"/><circle cx="6.6" cy="3" r="0.45" fill="#333"/><circle cx="5.4" cy="1.8" r="0.45" fill="#333"/></svg>
<div style="left:123.00px;top:277.90px;width:12.20px;height:8.30px;background:#3a8440;border-radius:1.5px"></div>
<svg style="left:124.00px;top:279.20px" width="10" height="6" viewBox="0 0 10 6" preserveAspectRatio="none"><circle cx="4.4" cy="3" r="2.5" fill="#e6f6e6"/><circle cx="3.2" cy="3" r="0.45" fill="#2d7a32"/><circle cx="5.6" cy="3" r="0.45" fill="#2d7a32"/><circle cx="4.4" cy="1.8" r="0.45" fill="#2d7a32"/><path d="M8 1.8L9.2 3L8 4.2" fill="none" stroke="#e6f6e6" stroke-width="0.55"/></svg>
<div style="left:139.00px;top:277.90px;width:12.20px;height:8.30px;background:#3b6bb8;border-radius:1.5px"></div>
<svg style="left:140.40px;top:279.20px" width="9.4" height="6" viewBox="0 0 9.4 6" preserveAspectRatio="none"><path d="M3.4 0.6h2.6L4.7 2.4z" fill="#e8f0ff"/><path d="M4.7 2.2V5.6" stroke="#e8f0ff" stroke-width="0.6"/><path d="M0.8 2L2.2 3.3L0.8 4.6M8.6 2L7.2 3.3L8.6 4.6" fill="none" stroke="#d8e4ff" stroke-width="0.55"/></svg>
<div style="left:155.00px;top:277.90px;width:12.40px;height:8.30px;background:#bc942e;border-radius:1.5px"></div>
<svg style="left:157.20px;top:279.20px" width="8" height="6" viewBox="0 0 8 6" preserveAspectRatio="none"><rect x="0.6" y="2.4" width="4" height="2.6" rx="1.3" fill="none" stroke="#f6e6b8" stroke-width="0.7" transform="rotate(-30 2.6 3.7)"/><rect x="3.2" y="1" width="4" height="2.6" rx="1.3" fill="none" stroke="#f6e6b8" stroke-width="0.7" transform="rotate(-30 5.2 2.3)"/></svg>
<div class="dk" style="left:473.40px;top:278.00px;width:33.20px;height:8.40px;"></div>
<svg style="left:477.00px;top:279.40px" width="4" height="6" viewBox="0 0 4 6" preserveAspectRatio="none"><path d="M0.5 0.3V4.7L1.6 3.7L2.4 5.6L3 5.3L2.2 3.5H3.7z" fill="#f0f0f0"/></svg>
<svg style="left:484.10px;top:281.80px" width="2.8" height="2.0" viewBox="0 0 2.8 2.0" preserveAspectRatio="none"><path d="M0.2 0.2L1.4 1.4L2.5999999999999996 0.2" fill="none" stroke="#9a9a9a" stroke-width="0.55"/></svg>
<svg style="left:492.20px;top:279.20px" width="6" height="6" viewBox="0 0 6 6" preserveAspectRatio="none"><path d="M0.8 0.8L1.8 0.4L5.2 3.8L5.4 5.4L3.8 5.2L0.4 1.8z" fill="#e0e0e0"/></svg>
<svg style="left:501.30px;top:281.80px" width="2.8" height="2.0" viewBox="0 0 2.8 2.0" preserveAspectRatio="none"><path d="M0.2 0.2L1.4 1.4L2.5999999999999996 0.2" fill="none" stroke="#9a9a9a" stroke-width="0.55"/></svg>
<div style="left:741.00px;top:278.70px;width:48.60px;height:7.30px;background:#343434;border-radius:1.5px"></div>
<div class="t" style="left:749.80px;top:279.10px;font-size:5.2px;line-height:6.24px;color:#b0b0b0;letter-spacing:0.1px">C#5</div>
<div class="t" style="left:763.60px;top:279.10px;font-size:5.2px;line-height:6.24px;color:#b0b0b0;letter-spacing:0.12px">99 4 3 1</div>
<div style="left:790.50px;top:277.60px;width:26.50px;height:9.00px;background:#505050"></div>
<div class="t" style="left:794.60px;top:279.71px;font-size:4.55px;line-height:5.46px;color:#c4c4c4;">スナップ:</div>
<div class="dk" style="left:817.00px;top:277.60px;width:79.60px;height:9.00px;"></div>
<div class="t" style="left:821.60px;top:279.71px;font-size:4.55px;line-height:5.46px;color:#e8e8e8;">スマート</div>
<svg style="left:893.10px;top:279.60px" width="2.6" height="5.2" viewBox="0 0 2.6 5.2" preserveAspectRatio="none"><path d="M0.3 1.8L1.3 0.5L2.3 1.8M0.3 3.4L1.3 4.7L2.3 3.4" fill="none" stroke="#9a9a9a" stroke-width="0.5"/></svg>
<div style="left:899.50px;top:277.60px;width:2.00px;height:9.00px;background:#505050"></div>
<div class="dk" style="left:901.50px;top:277.60px;width:13.50px;height:9.00px;"></div>
<svg style="left:904.80px;top:279.40px" width="7" height="5.6" viewBox="0 0 7 5.6" preserveAspectRatio="none"><path d="M0.5 0.3V5.3M6.5 0.3V5.3M0.5 2.8H6.5" stroke="#e8e8e8" stroke-width="0.7" fill="none"/></svg>
<div style="left:917.50px;top:277.60px;width:59.50px;height:9.00px;background:#333;border-radius:1.5px"></div>
<svg style="left:920.20px;top:279.20px" width="3" height="6" viewBox="0 0 3 6" preserveAspectRatio="none"><path d="M1.5 0.4V5.6M0.4 1.6L1.5 0.4L2.6 1.6M0.4 4.4L1.5 5.6L2.6 4.4" fill="none" stroke="#8c8c8c" stroke-width="0.55"/></svg>
<div style="left:926.00px;top:282.00px;width:16.50px;height:0.50px;background:#222"></div>
<svg style="left:934.60px;top:280.40px" width="4" height="3.4" viewBox="0 0 4 3.4" preserveAspectRatio="none"><path d="M0.2 3.2Q0.2 0.2 2 0.2Q3.8 0.2 3.8 3.2z" fill="#d6d6d6"/></svg>
<svg style="left:947.50px;top:280.50px" width="6" height="3.4" viewBox="0 0 6 3.4" preserveAspectRatio="none"><path d="M0.4 1.7H5.6M1.6 0.5L0.4 1.7L1.6 2.9M4.4 0.5L5.6 1.7L4.4 2.9" fill="none" stroke="#8c8c8c" stroke-width="0.55"/></svg>
<div style="left:956.00px;top:282.00px;width:18.00px;height:0.50px;background:#222"></div>
<svg style="left:961.60px;top:280.40px" width="4" height="3.4" viewBox="0 0 4 3.4" preserveAspectRatio="none"><path d="M0.2 3.2Q0.2 0.2 2 0.2Q3.8 0.2 3.8 3.2z" fill="#d6d6d6"/></svg>
<div style="left:0.00px;top:287.20px;width:108.50px;height:261.50px;background:#616161"></div>
<div style="left:0.00px;top:287.20px;width:108.50px;height:18.00px;background:#555555"></div>
<div style="left:0.00px;top:305.00px;width:92.80px;height:0.60px;background:#3c3c3c"></div>
<div style="left:3.40px;top:292.80px;width:11.20px;height:8.30px;background:#1b4021;border-radius:1px"></div>
<svg style="left:6.00px;top:293.80px" width="6" height="6.6" viewBox="0 0 7 8" preserveAspectRatio="none"><path d="M2.2 6.2V1.4L6 0.6V5.4" fill="none" stroke="#78d67c" stroke-width="0.6"/><path d="M2.2 1.4L6 0.6V2L2.2 2.8z" fill="#78d67c"/><ellipse cx="1.5" cy="6.3" rx="1.2" ry="0.95" fill="#78d67c"/><ellipse cx="5.3" cy="5.5" rx="1.2" ry="0.95" fill="#78d67c"/></svg>
<div class="t" style="left:18.00px;top:291.38px;width:72.00px;text-align:center;font-size:4.9px;line-height:5.88px;color:#e2e2e2;">Inst 6</div>
<div class="t" style="left:18.00px;top:296.90px;width:72.00px;text-align:center;font-size:4.35px;line-height:5.22px;color:#c8c8c8;">3リージョンを選択</div>
<div style="left:92.20px;top:292.40px;width:11.80px;height:7.50px;background:#3c3c3c;border-radius:1.5px"></div>
<svg style="left:95.60px;top:293.60px" width="5" height="5" viewBox="0 0 5 5" preserveAspectRatio="none"><rect x="0.4" y="0.4" width="4.2" height="4.2" fill="none" stroke="#ddd" stroke-width="0.6"/><rect x="0.4" y="0.4" width="4.2" height="1.1" fill="#ddd"/><rect x="1.9" y="2.4" width="1.2" height="1.2" fill="#ddd"/></svg>
<div class="t" style="left:6.50px;top:366.67px;font-size:4.6px;line-height:5.52px;color:#bcbcbc;">タイムクオンタイズ</div>
<div style="left:7.00px;top:373.00px;width:82.00px;height:25.20px;background:#565656;border-radius:2px"></div>
<div style="left:8.00px;top:374.00px;width:66.00px;height:7.40px;background:#515151;border-radius:1px"></div>
<div class="t" style="left:8.00px;top:374.67px;width:62.00px;text-align:center;font-size:4.6px;line-height:5.52px;color:#dcdcdc;">1/16 - 音符</div>
<svg style="left:71.20px;top:375.00px" width="2.6" height="5.2" viewBox="0 0 2.6 5.2" preserveAspectRatio="none"><path d="M0.3 1.8L1.3 0.5L2.3 1.8M0.3 3.4L1.3 4.7L2.3 3.4" fill="none" stroke="#8a8a8a" stroke-width="0.5"/></svg>
<div style="left:77.50px;top:374.00px;width:10.60px;height:7.40px;background:#515151;border-radius:1px"></div>
<div class="t" style="left:80.40px;top:374.72px;font-size:5.6px;line-height:6.72px;color:#c0c0c0;">Q</div>
<div class="t" style="left:25.00px;top:382.86px;font-size:4.4px;line-height:5.28px;color:#bcbcbc;">強さ</div>
<div style="left:34.00px;top:385.80px;width:38.00px;height:0.60px;background:#444"></div>
<div style="left:70.30px;top:384.00px;width:3.80px;height:3.80px;background:#9a9a9a;border-radius:50%"></div>
<div class="t" style="left:76.00px;top:383.57px;width:11.00px;text-align:right;font-size:4.7px;line-height:5.64px;color:#e4e4e4;">100</div>
<div class="t" style="left:11.00px;top:389.86px;font-size:4.4px;line-height:5.28px;color:#bcbcbc;">スウィング</div>
<div style="left:36.00px;top:392.80px;width:38.00px;height:0.60px;background:#444"></div>
<div style="left:34.40px;top:391.00px;width:3.80px;height:3.80px;background:#8c8c8c;border-radius:50%"></div>
<div class="t" style="left:76.00px;top:390.57px;width:8.00px;text-align:right;font-size:4.7px;line-height:5.64px;color:#e4e4e4;">0</div>
<div class="t" style="left:6.50px;top:426.67px;font-size:4.6px;line-height:5.52px;color:#bcbcbc;">スケールクオンタイズ</div>
<div style="left:7.00px;top:433.40px;width:82.00px;height:7.80px;background:#585858;border-radius:2px"></div>
<div class="t" style="left:12.00px;top:434.67px;font-size:4.6px;line-height:5.52px;color:#d4d4d4;">オフ</div>
<svg style="left:25.20px;top:434.80px" width="2.6" height="5.2" viewBox="0 0 2.6 5.2" preserveAspectRatio="none"><path d="M0.3 1.8L1.3 0.5L2.3 1.8M0.3 3.4L1.3 4.7L2.3 3.4" fill="none" stroke="#b0b0b0" stroke-width="0.5"/></svg>
<div class="t" style="left:44.00px;top:434.67px;font-size:4.6px;line-height:5.52px;color:#d4d4d4;">メジャー</div>
<svg style="left:71.20px;top:434.80px" width="2.6" height="5.2" viewBox="0 0 2.6 5.2" preserveAspectRatio="none"><path d="M0.3 1.8L1.3 0.5L2.3 1.8M0.3 3.4L1.3 4.7L2.3 3.4" fill="none" stroke="#b0b0b0" stroke-width="0.5"/></svg>
<div class="t" style="left:80.60px;top:433.91px;font-size:5.4px;line-height:6.48px;color:#a8a8a8;">Q</div>
<div class="t" style="left:6.50px;top:468.76px;font-size:4.5px;line-height:5.40px;color:#bcbcbc;">ベロシティ</div>
<div style="left:7.00px;top:475.40px;width:82.00px;height:9.20px;background:#565656;border-radius:2px"></div>
<div style="left:11.00px;top:480.00px;width:64.00px;height:0.60px;background:#444"></div>
<div style="left:30.50px;top:478.30px;width:3.80px;height:3.80px;background:#9a9a9a;border-radius:50%"></div>
<div class="t" style="left:76.00px;top:477.38px;width:9.50px;text-align:right;font-size:4.9px;line-height:5.88px;color:#e8e8e8;">42</div>
<div style="left:92.80px;top:305.20px;width:15.20px;height:243.50px;background:#e2e2e2"></div>
<svg style="left:92.80px;top:305.20px" width="15.200000000000003" height="243.5" viewBox="0 0 15.200000000000003 243.5" preserveAspectRatio="none"><rect x="0" y="34.70" width="15.20" height="12.40" fill="#a8a8a8"/><rect x="0" y="1.00" width="7.2" height="5.30" fill="#222"/><rect x="7.2" y="3.40" width="8.00" height="0.6" fill="#b4b4b4"/><rect x="0" y="12.70" width="15.20" height="0.6" fill="#b4b4b4"/><rect x="0" y="19.60" width="7.2" height="5.30" fill="#222"/><rect x="7.2" y="22.00" width="8.00" height="0.6" fill="#b4b4b4"/><rect x="0" y="32.00" width="7.2" height="5.30" fill="#222"/><rect x="7.2" y="34.40" width="8.00" height="0.6" fill="#b4b4b4"/><rect x="0" y="44.40" width="7.2" height="5.30" fill="#222"/><rect x="7.2" y="46.80" width="8.00" height="0.6" fill="#b4b4b4"/><rect x="0" y="56.10" width="15.20" height="0.6" fill="#b4b4b4"/><rect x="0" y="63.00" width="7.2" height="5.30" fill="#222"/><rect x="7.2" y="65.40" width="8.00" height="0.6" fill="#b4b4b4"/><rect x="0" y="75.40" width="7.2" height="5.30" fill="#222"/><rect x="7.2" y="77.80" width="8.00" height="0.6" fill="#b4b4b4"/><rect x="0" y="87.10" width="15.20" height="0.6" fill="#b4b4b4"/><rect x="0" y="94.00" width="7.2" height="5.30" fill="#222"/><rect x="7.2" y="96.40" width="8.00" height="0.6" fill="#b4b4b4"/><rect x="0" y="106.40" width="7.2" height="5.30" fill="#222"/><rect x="7.2" y="108.80" width="8.00" height="0.6" fill="#b4b4b4"/><rect x="0" y="118.80" width="7.2" height="5.30" fill="#222"/><rect x="7.2" y="121.20" width="8.00" height="0.6" fill="#b4b4b4"/><rect x="0" y="130.50" width="15.20" height="0.6" fill="#b4b4b4"/><rect x="0" y="137.40" width="7.2" height="5.30" fill="#222"/><rect x="7.2" y="139.80" width="8.00" height="0.6" fill="#b4b4b4"/><rect x="0" y="149.80" width="7.2" height="5.30" fill="#222"/><rect x="7.2" y="152.20" width="8.00" height="0.6" fill="#b4b4b4"/><rect x="0" y="161.50" width="15.20" height="0.6" fill="#b4b4b4"/><rect x="0" y="168.40" width="7.2" height="5.30" fill="#222"/><rect x="7.2" y="170.80" width="8.00" height="0.6" fill="#b4b4b4"/><rect x="0" y="180.80" width="7.2" height="5.30" fill="#222"/><rect x="7.2" y="183.20" width="8.00" height="0.6" fill="#b4b4b4"/><rect x="0" y="193.20" width="7.2" height="5.30" fill="#222"/><rect x="7.2" y="195.60" width="8.00" height="0.6" fill="#b4b4b4"/><rect x="0" y="204.90" width="15.20" height="0.6" fill="#b4b4b4"/><rect x="0" y="211.80" width="7.2" height="5.30" fill="#222"/><rect x="7.2" y="214.20" width="8.00" height="0.6" fill="#b4b4b4"/><rect x="0" y="224.20" width="7.2" height="5.30" fill="#222"/><rect x="7.2" y="226.60" width="8.00" height="0.6" fill="#b4b4b4"/><rect x="0" y="235.90" width="15.20" height="0.6" fill="#b4b4b4"/><rect x="0" y="242.80" width="7.2" height="5.30" fill="#222"/><rect x="7.2" y="245.20" width="8.00" height="0.6" fill="#b4b4b4"/></svg>
<div class="t" style="left:101.10px;top:312.95px;font-size:4.3px;line-height:5.16px;color:#2a2a2a;font-weight:700">C5</div>
<div class="t" style="left:101.10px;top:386.95px;font-size:4.3px;line-height:5.16px;color:#2a2a2a;font-weight:700">C4</div>
<div class="t" style="left:101.10px;top:461.95px;font-size:4.3px;line-height:5.16px;color:#2a2a2a;font-weight:700">C3</div>
<div class="t" style="left:101.10px;top:535.95px;font-size:4.3px;line-height:5.16px;color:#2a2a2a;font-weight:700">C2</div>
<div style="left:108.00px;top:287.20px;width:1.20px;height:261.50px;background:#2a2a2a"></div>
<div style="left:109.20px;top:287.00px;width:870.80px;height:9.40px;background:#343434"></div>
<div style="left:109.20px;top:296.40px;width:870.80px;height:8.80px;background:#3d3d3d"></div>
<div style="left:109.20px;top:305.20px;width:870.80px;height:243.50px;background:#282828"></div>
<svg style="left:109.20px;top:287.20px" width="870.8" height="261.5" viewBox="0 0 870.8 261.5" preserveAspectRatio="none"><rect x="0" y="18.60" width="870.8" height="6.20" fill="#1e1e1e"/><rect x="0" y="30.70" width="870.8" height="0.5" fill="#242424"/><rect x="0" y="37.20" width="870.8" height="6.20" fill="#1e1e1e"/><rect x="0" y="49.60" width="870.8" height="6.20" fill="#1e1e1e"/><rect x="0" y="62.00" width="870.8" height="6.20" fill="#1e1e1e"/><rect x="0" y="74.10" width="870.8" height="0.5" fill="#242424"/><rect x="0" y="80.60" width="870.8" height="6.20" fill="#1e1e1e"/><rect x="0" y="93.00" width="870.8" height="6.20" fill="#1e1e1e"/><rect x="0" y="105.10" width="870.8" height="0.5" fill="#242424"/><rect x="0" y="111.60" width="870.8" height="6.20" fill="#1e1e1e"/><rect x="0" y="124.00" width="870.8" height="6.20" fill="#1e1e1e"/><rect x="0" y="136.40" width="870.8" height="6.20" fill="#1e1e1e"/><rect x="0" y="148.50" width="870.8" height="0.5" fill="#242424"/><rect x="0" y="155.00" width="870.8" height="6.20" fill="#1e1e1e"/><rect x="0" y="167.40" width="870.8" height="6.20" fill="#1e1e1e"/><rect x="0" y="179.50" width="870.8" height="0.5" fill="#242424"/><rect x="0" y="186.00" width="870.8" height="6.20" fill="#1e1e1e"/><rect x="0" y="198.40" width="870.8" height="6.20" fill="#1e1e1e"/><rect x="0" y="210.80" width="870.8" height="6.20" fill="#1e1e1e"/><rect x="0" y="222.90" width="870.8" height="0.5" fill="#242424"/><rect x="0" y="229.40" width="870.8" height="6.20" fill="#1e1e1e"/><rect x="0" y="241.80" width="870.8" height="6.20" fill="#1e1e1e"/><rect x="0" y="253.90" width="870.8" height="0.5" fill="#242424"/><rect x="0" y="260.40" width="870.8" height="6.20" fill="#1e1e1e"/><rect x="2.50" y="0.8" width="0.8" height="17.2" fill="#545454"/><rect x="2.50" y="18" width="0.8" height="244" fill="#3a3a3a" opacity="0.6"/><rect x="6.82" y="15.2" width="0.6" height="2.8" fill="#4a4a4a"/><rect x="6.82" y="18" width="0.6" height="244" fill="#343434" opacity="0.35"/><rect x="11.03" y="15.2" width="0.6" height="2.8" fill="#4a4a4a"/><rect x="11.03" y="18" width="0.6" height="244" fill="#343434" opacity="0.35"/><rect x="15.25" y="15.2" width="0.6" height="2.8" fill="#4a4a4a"/><rect x="15.25" y="18" width="0.6" height="244" fill="#343434" opacity="0.35"/><rect x="19.41" y="13.4" width="0.7" height="4.6" fill="#505050"/><rect x="19.41" y="18" width="0.7" height="244" fill="#383838" opacity="0.5"/><rect x="23.68" y="15.2" width="0.6" height="2.8" fill="#4a4a4a"/><rect x="23.68" y="18" width="0.6" height="244" fill="#343434" opacity="0.35"/><rect x="27.89" y="15.2" width="0.6" height="2.8" fill="#4a4a4a"/><rect x="27.89" y="18" width="0.6" height="244" fill="#343434" opacity="0.35"/><rect x="32.11" y="15.2" width="0.6" height="2.8" fill="#4a4a4a"/><rect x="32.11" y="18" width="0.6" height="244" fill="#343434" opacity="0.35"/><rect x="36.27" y="13.4" width="0.7" height="4.6" fill="#505050"/><rect x="36.27" y="18" width="0.7" height="244" fill="#383838" opacity="0.5"/><rect x="40.54" y="15.2" width="0.6" height="2.8" fill="#4a4a4a"/><rect x="40.54" y="18" width="0.6" height="244" fill="#343434" opacity="0.35"/><rect x="44.76" y="15.2" width="0.6" height="2.8" fill="#4a4a4a"/><rect x="44.76" y="18" width="0.6" height="244" fill="#343434" opacity="0.35"/><rect x="48.97" y="15.2" width="0.6" height="2.8" fill="#4a4a4a"/><rect x="48.97" y="18" width="0.6" height="244" fill="#343434" opacity="0.35"/><rect x="53.14" y="13.4" width="0.7" height="4.6" fill="#505050"/><rect x="53.14" y="18" width="0.7" height="244" fill="#383838" opacity="0.5"/><rect x="57.40" y="15.2" width="0.6" height="2.8" fill="#4a4a4a"/><rect x="57.40" y="18" width="0.6" height="244" fill="#343434" opacity="0.35"/><rect x="61.62" y="15.2" width="0.6" height="2.8" fill="#4a4a4a"/><rect x="61.62" y="18" width="0.6" height="244" fill="#343434" opacity="0.35"/><rect x="65.83" y="15.2" width="0.6" height="2.8" fill="#4a4a4a"/><rect x="65.83" y="18" width="0.6" height="244" fill="#343434" opacity="0.35"/><rect x="69.95" y="0.8" width="0.8" height="17.2" fill="#545454"/><rect x="69.95" y="18" width="0.8" height="244" fill="#3a3a3a" opacity="0.6"/><rect x="74.27" y="15.2" width="0.6" height="2.8" fill="#4a4a4a"/><rect x="74.27" y="18" width="0.6" height="244" fill="#343434" opacity="0.35"/><rect x="78.48" y="15.2" width="0.6" height="2.8" fill="#4a4a4a"/><rect x="78.48" y="18" width="0.6" height="244" fill="#343434" opacity="0.35"/><rect x="82.70" y="15.2" width="0.6" height="2.8" fill="#4a4a4a"/><rect x="82.70" y="18" width="0.6" height="244" fill="#343434" opacity="0.35"/><rect x="86.86" y="13.4" width="0.7" height="4.6" fill="#505050"/><rect x="86.86" y="18" width="0.7" height="244" fill="#383838" opacity="0.5"/><rect x="91.13" y="15.2" width="0.6" height="2.8" fill="#4a4a4a"/><rect x="91.13" y="18" width="0.6" height="244" fill="#343434" opacity="0.35"/><rect x="95.34" y="15.2" width="0.6" height="2.8" fill="#4a4a4a"/><rect x="95.34" y="18" width="0.6" height="244" fill="#343434" opacity="0.35"/><rect x="99.56" y="15.2" width="0.6" height="2.8" fill="#4a4a4a"/><rect x="99.56" y="18" width="0.6" height="244" fill="#343434" opacity="0.35"/><rect x="103.73" y="13.4" width="0.7" height="4.6" fill="#505050"/><rect x="103.73" y="18" width="0.7" height="244" fill="#383838" opacity="0.5"/><rect x="107.99" y="15.2" width="0.6" height="2.8" fill="#4a4a4a"/><rect x="107.99" y="18" width="0.6" height="244" fill="#343434" opacity="0.35"/><rect x="112.21" y="15.2" width="0.6" height="2.8" fill="#4a4a4a"/><rect x="112.21" y="18" width="0.6" height="244" fill="#343434" opacity="0.35"/><rect x="116.42" y="15.2" width="0.6" height="2.8" fill="#4a4a4a"/><rect x="116.42" y="18" width="0.6" height="244" fill="#343434" opacity="0.35"/><rect x="120.59" y="13.4" width="0.7" height="4.6" fill="#505050"/><rect x="120.59" y="18" width="0.7" height="244" fill="#383838" opacity="0.5"/><rect x="124.85" y="15.2" width="0.6" height="2.8" fill="#4a4a4a"/><rect x="124.85" y="18" width="0.6" height="244" fill="#343434" opacity="0.35"/><rect x="129.07" y="15.2" width="0.6" height="2.8" fill="#4a4a4a"/><rect x="129.07" y="18" width="0.6" height="244" fill="#343434" opacity="0.35"/><rect x="133.28" y="15.2" width="0.6" height="2.8" fill="#4a4a4a"/><rect x="133.28" y="18" width="0.6" height="244" fill="#343434" opacity="0.35"/><rect x="137.40" y="0.8" width="0.8" height="17.2" fill="#545454"/><rect x="137.40" y="18" width="0.8" height="244" fill="#3a3a3a" opacity="0.6"/><rect x="141.72" y="15.2" width="0.6" height="2.8" fill="#4a4a4a"/><rect x="141.72" y="18" width="0.6" height="244" fill="#343434" opacity="0.35"/><rect x="145.93" y="15.2" width="0.6" height="2.8" fill="#4a4a4a"/><rect x="145.93" y="18" width="0.6" height="244" fill="#343434" opacity="0.35"/><rect x="150.15" y="15.2" width="0.6" height="2.8" fill="#4a4a4a"/><rect x="150.15" y="18" width="0.6" height="244" fill="#343434" opacity="0.35"/><rect x="154.31" y="13.4" width="0.7" height="4.6" fill="#505050"/><rect x="154.31" y="18" width="0.7" height="244" fill="#383838" opacity="0.5"/><rect x="158.58" y="15.2" width="0.6" height="2.8" fill="#4a4a4a"/><rect x="158.58" y="18" width="0.6" height="244" fill="#343434" opacity="0.35"/><rect x="162.79" y="15.2" width="0.6" height="2.8" fill="#4a4a4a"/><rect x="162.79" y="18" width="0.6" height="244" fill="#343434" opacity="0.35"/><rect x="167.01" y="15.2" width="0.6" height="2.8" fill="#4a4a4a"/><rect x="167.01" y="18" width="0.6" height="244" fill="#343434" opacity="0.35"/><rect x="171.18" y="13.4" width="0.7" height="4.6" fill="#505050"/><rect x="171.18" y="18" width="0.7" height="244" fill="#383838" opacity="0.5"/><rect x="175.44" y="15.2" width="0.6" height="2.8" fill="#4a4a4a"/><rect x="175.44" y="18" width="0.6" height="244" fill="#343434" opacity="0.35"/><rect x="179.66" y="15.2" width="0.6" height="2.8" fill="#4a4a4a"/><rect x="179.66" y="18" width="0.6" height="244" fill="#343434" opacity="0.35"/><rect x="183.87" y="15.2" width="0.6" height="2.8" fill="#4a4a4a"/><rect x="183.87" y="18" width="0.6" height="244" fill="#343434" opacity="0.35"/><rect x="188.04" y="13.4" width="0.7" height="4.6" fill="#505050"/><rect x="188.04" y="18" width="0.7" height="244" fill="#383838" opacity="0.5"/><rect x="192.30" y="15.2" width="0.6" height="2.8" fill="#4a4a4a"/><rect x="192.30" y="18" width="0.6" height="244" fill="#343434" opacity="0.35"/><rect x="196.52" y="15.2" width="0.6" height="2.8" fill="#4a4a4a"/><rect x="196.52" y="18" width="0.6" height="244" fill="#343434" opacity="0.35"/><rect x="200.73" y="15.2" width="0.6" height="2.8" fill="#4a4a4a"/><rect x="200.73" y="18" width="0.6" height="244" fill="#343434" opacity="0.35"/><rect x="204.85" y="0.8" width="0.8" height="17.2" fill="#545454"/><rect x="204.85" y="18" width="0.8" height="244" fill="#3a3a3a" opacity="0.6"/><rect x="209.17" y="15.2" width="0.6" height="2.8" fill="#4a4a4a"/><rect x="209.17" y="18" width="0.6" height="244" fill="#343434" opacity="0.35"/><rect x="213.38" y="15.2" width="0.6" height="2.8" fill="#4a4a4a"/><rect x="213.38" y="18" width="0.6" height="244" fill="#343434" opacity="0.35"/><rect x="217.60" y="15.2" width="0.6" height="2.8" fill="#4a4a4a"/><rect x="217.60" y="18" width="0.6" height="244" fill="#343434" opacity="0.35"/><rect x="221.76" y="13.4" width="0.7" height="4.6" fill="#505050"/><rect x="221.76" y="18" width="0.7" height="244" fill="#383838" opacity="0.5"/><rect x="226.03" y="15.2" width="0.6" height="2.8" fill="#4a4a4a"/><rect x="226.03" y="18" width="0.6" height="244" fill="#343434" opacity="0.35"/><rect x="230.24" y="15.2" width="0.6" height="2.8" fill="#4a4a4a"/><rect x="230.24" y="18" width="0.6" height="244" fill="#343434" opacity="0.35"/><rect x="234.46" y="15.2" width="0.6" height="2.8" fill="#4a4a4a"/><rect x="234.46" y="18" width="0.6" height="244" fill="#343434" opacity="0.35"/><rect x="238.63" y="13.4" width="0.7" height="4.6" fill="#505050"/><rect x="238.63" y="18" width="0.7" height="244" fill="#383838" opacity="0.5"/><rect x="242.89" y="15.2" width="0.6" height="2.8" fill="#4a4a4a"/><rect x="242.89" y="18" width="0.6" height="244" fill="#343434" opacity="0.35"/><rect x="247.11" y="15.2" width="0.6" height="2.8" fill="#4a4a4a"/><rect x="247.11" y="18" width="0.6" height="244" fill="#343434" opacity="0.35"/><rect x="251.32" y="15.2" width="0.6" height="2.8" fill="#4a4a4a"/><rect x="251.32" y="18" width="0.6" height="244" fill="#343434" opacity="0.35"/><rect x="255.49" y="13.4" width="0.7" height="4.6" fill="#505050"/><rect x="255.49" y="18" width="0.7" height="244" fill="#383838" opacity="0.5"/><rect x="259.75" y="15.2" width="0.6" height="2.8" fill="#4a4a4a"/><rect x="259.75" y="18" width="0.6" height="244" fill="#343434" opacity="0.35"/><rect x="263.97" y="15.2" width="0.6" height="2.8" fill="#4a4a4a"/><rect x="263.97" y="18" width="0.6" height="244" fill="#343434" opacity="0.35"/><rect x="268.18" y="15.2" width="0.6" height="2.8" fill="#4a4a4a"/><rect x="268.18" y="18" width="0.6" height="244" fill="#343434" opacity="0.35"/><rect x="272.30" y="0.8" width="0.8" height="17.2" fill="#545454"/><rect x="272.30" y="18" width="0.8" height="244" fill="#3a3a3a" opacity="0.6"/><rect x="276.62" y="15.2" width="0.6" height="2.8" fill="#4a4a4a"/><rect x="276.62" y="18" width="0.6" height="244" fill="#343434" opacity="0.35"/><rect x="280.83" y="15.2" width="0.6" height="2.8" fill="#4a4a4a"/><rect x="280.83" y="18" width="0.6" height="244" fill="#343434" opacity="0.35"/><rect x="285.05" y="15.2" width="0.6" height="2.8" fill="#4a4a4a"/><rect x="285.05" y="18" width="0.6" height="244" fill="#343434" opacity="0.35"/><rect x="289.21" y="13.4" width="0.7" height="4.6" fill="#505050"/><rect x="289.21" y="18" width="0.7" height="244" fill="#383838" opacity="0.5"/><rect x="293.48" y="15.2" width="0.6" height="2.8" fill="#4a4a4a"/><rect x="293.48" y="18" width="0.6" height="244" fill="#343434" opacity="0.35"/><rect x="297.69" y="15.2" width="0.6" height="2.8" fill="#4a4a4a"/><rect x="297.69" y="18" width="0.6" height="244" fill="#343434" opacity="0.35"/><rect x="301.91" y="15.2" width="0.6" height="2.8" fill="#4a4a4a"/><rect x="301.91" y="18" width="0.6" height="244" fill="#343434" opacity="0.35"/><rect x="306.07" y="13.4" width="0.7" height="4.6" fill="#505050"/><rect x="306.07" y="18" width="0.7" height="244" fill="#383838" opacity="0.5"/><rect x="310.34" y="15.2" width="0.6" height="2.8" fill="#4a4a4a"/><rect x="310.34" y="18" width="0.6" height="244" fill="#343434" opacity="0.35"/><rect x="314.56" y="15.2" width="0.6" height="2.8" fill="#4a4a4a"/><rect x="314.56" y="18" width="0.6" height="244" fill="#343434" opacity="0.35"/><rect x="318.77" y="15.2" width="0.6" height="2.8" fill="#4a4a4a"/><rect x="318.77" y="18" width="0.6" height="244" fill="#343434" opacity="0.35"/><rect x="322.94" y="13.4" width="0.7" height="4.6" fill="#505050"/><rect x="322.94" y="18" width="0.7" height="244" fill="#383838" opacity="0.5"/><rect x="327.20" y="15.2" width="0.6" height="2.8" fill="#4a4a4a"/><rect x="327.20" y="18" width="0.6" height="244" fill="#343434" opacity="0.35"/><rect x="331.42" y="15.2" width="0.6" height="2.8" fill="#4a4a4a"/><rect x="331.42" y="18" width="0.6" height="244" fill="#343434" opacity="0.35"/><rect x="335.63" y="15.2" width="0.6" height="2.8" fill="#4a4a4a"/><rect x="335.63" y="18" width="0.6" height="244" fill="#343434" opacity="0.35"/><rect x="339.75" y="0.8" width="0.8" height="17.2" fill="#545454"/><rect x="339.75" y="18" width="0.8" height="244" fill="#3a3a3a" opacity="0.6"/><rect x="344.07" y="15.2" width="0.6" height="2.8" fill="#4a4a4a"/><rect x="344.07" y="18" width="0.6" height="244" fill="#343434" opacity="0.35"/><rect x="348.28" y="15.2" width="0.6" height="2.8" fill="#4a4a4a"/><rect x="348.28" y="18" width="0.6" height="244" fill="#343434" opacity="0.35"/><rect x="352.50" y="15.2" width="0.6" height="2.8" fill="#4a4a4a"/><rect x="352.50" y="18" width="0.6" height="244" fill="#343434" opacity="0.35"/><rect x="356.66" y="13.4" width="0.7" height="4.6" fill="#505050"/><rect x="356.66" y="18" width="0.7" height="244" fill="#383838" opacity="0.5"/><rect x="360.93" y="15.2" width="0.6" height="2.8" fill="#4a4a4a"/><rect x="360.93" y="18" width="0.6" height="244" fill="#343434" opacity="0.35"/><rect x="365.14" y="15.2" width="0.6" height="2.8" fill="#4a4a4a"/><rect x="365.14" y="18" width="0.6" height="244" fill="#343434" opacity="0.35"/><rect x="369.36" y="15.2" width="0.6" height="2.8" fill="#4a4a4a"/><rect x="369.36" y="18" width="0.6" height="244" fill="#343434" opacity="0.35"/><rect x="373.53" y="13.4" width="0.7" height="4.6" fill="#505050"/><rect x="373.53" y="18" width="0.7" height="244" fill="#383838" opacity="0.5"/><rect x="377.79" y="15.2" width="0.6" height="2.8" fill="#4a4a4a"/><rect x="377.79" y="18" width="0.6" height="244" fill="#343434" opacity="0.35"/><rect x="382.01" y="15.2" width="0.6" height="2.8" fill="#4a4a4a"/><rect x="382.01" y="18" width="0.6" height="244" fill="#343434" opacity="0.35"/><rect x="386.22" y="15.2" width="0.6" height="2.8" fill="#4a4a4a"/><rect x="386.22" y="18" width="0.6" height="244" fill="#343434" opacity="0.35"/><rect x="390.39" y="13.4" width="0.7" height="4.6" fill="#505050"/><rect x="390.39" y="18" width="0.7" height="244" fill="#383838" opacity="0.5"/><rect x="394.65" y="15.2" width="0.6" height="2.8" fill="#4a4a4a"/><rect x="394.65" y="18" width="0.6" height="244" fill="#343434" opacity="0.35"/><rect x="398.87" y="15.2" width="0.6" height="2.8" fill="#4a4a4a"/><rect x="398.87" y="18" width="0.6" height="244" fill="#343434" opacity="0.35"/><rect x="403.08" y="15.2" width="0.6" height="2.8" fill="#4a4a4a"/><rect x="403.08" y="18" width="0.6" height="244" fill="#343434" opacity="0.35"/><rect x="407.20" y="0.8" width="0.8" height="17.2" fill="#545454"/><rect x="407.20" y="18" width="0.8" height="244" fill="#3a3a3a" opacity="0.6"/><rect x="411.52" y="15.2" width="0.6" height="2.8" fill="#4a4a4a"/><rect x="411.52" y="18" width="0.6" height="244" fill="#343434" opacity="0.35"/><rect x="415.73" y="15.2" width="0.6" height="2.8" fill="#4a4a4a"/><rect x="415.73" y="18" width="0.6" height="244" fill="#343434" opacity="0.35"/><rect x="419.95" y="15.2" width="0.6" height="2.8" fill="#4a4a4a"/><rect x="419.95" y="18" width="0.6" height="244" fill="#343434" opacity="0.35"/><rect x="424.11" y="13.4" width="0.7" height="4.6" fill="#505050"/><rect x="424.11" y="18" width="0.7" height="244" fill="#383838" opacity="0.5"/><rect x="428.38" y="15.2" width="0.6" height="2.8" fill="#4a4a4a"/><rect x="428.38" y="18" width="0.6" height="244" fill="#343434" opacity="0.35"/><rect x="432.59" y="15.2" width="0.6" height="2.8" fill="#4a4a4a"/><rect x="432.59" y="18" width="0.6" height="244" fill="#343434" opacity="0.35"/><rect x="436.81" y="15.2" width="0.6" height="2.8" fill="#4a4a4a"/><rect x="436.81" y="18" width="0.6" height="244" fill="#343434" opacity="0.35"/><rect x="440.97" y="13.4" width="0.7" height="4.6" fill="#505050"/><rect x="440.97" y="18" width="0.7" height="244" fill="#383838" opacity="0.5"/><rect x="445.24" y="15.2" width="0.6" height="2.8" fill="#4a4a4a"/><rect x="445.24" y="18" width="0.6" height="244" fill="#343434" opacity="0.35"/><rect x="449.46" y="15.2" width="0.6" height="2.8" fill="#4a4a4a"/><rect x="449.46" y="18" width="0.6" height="244" fill="#343434" opacity="0.35"/><rect x="453.67" y="15.2" width="0.6" height="2.8" fill="#4a4a4a"/><rect x="453.67" y="18" width="0.6" height="244" fill="#343434" opacity="0.35"/><rect x="457.84" y="13.4" width="0.7" height="4.6" fill="#505050"/><rect x="457.84" y="18" width="0.7" height="244" fill="#383838" opacity="0.5"/><rect x="462.10" y="15.2" width="0.6" height="2.8" fill="#4a4a4a"/><rect x="462.10" y="18" width="0.6" height="244" fill="#343434" opacity="0.35"/><rect x="466.32" y="15.2" width="0.6" height="2.8" fill="#4a4a4a"/><rect x="466.32" y="18" width="0.6" height="244" fill="#343434" opacity="0.35"/><rect x="470.53" y="15.2" width="0.6" height="2.8" fill="#4a4a4a"/><rect x="470.53" y="18" width="0.6" height="244" fill="#343434" opacity="0.35"/><rect x="474.65" y="0.8" width="0.8" height="17.2" fill="#545454"/><rect x="474.65" y="18" width="0.8" height="244" fill="#3a3a3a" opacity="0.6"/><rect x="478.97" y="15.2" width="0.6" height="2.8" fill="#4a4a4a"/><rect x="478.97" y="18" width="0.6" height="244" fill="#343434" opacity="0.35"/><rect x="483.18" y="15.2" width="0.6" height="2.8" fill="#4a4a4a"/><rect x="483.18" y="18" width="0.6" height="244" fill="#343434" opacity="0.35"/><rect x="487.40" y="15.2" width="0.6" height="2.8" fill="#4a4a4a"/><rect x="487.40" y="18" width="0.6" height="244" fill="#343434" opacity="0.35"/><rect x="491.56" y="13.4" width="0.7" height="4.6" fill="#505050"/><rect x="491.56" y="18" width="0.7" height="244" fill="#383838" opacity="0.5"/><rect x="495.83" y="15.2" width="0.6" height="2.8" fill="#4a4a4a"/><rect x="495.83" y="18" width="0.6" height="244" fill="#343434" opacity="0.35"/><rect x="500.04" y="15.2" width="0.6" height="2.8" fill="#4a4a4a"/><rect x="500.04" y="18" width="0.6" height="244" fill="#343434" opacity="0.35"/><rect x="504.26" y="15.2" width="0.6" height="2.8" fill="#4a4a4a"/><rect x="504.26" y="18" width="0.6" height="244" fill="#343434" opacity="0.35"/><rect x="508.43" y="13.4" width="0.7" height="4.6" fill="#505050"/><rect x="508.43" y="18" width="0.7" height="244" fill="#383838" opacity="0.5"/><rect x="512.69" y="15.2" width="0.6" height="2.8" fill="#4a4a4a"/><rect x="512.69" y="18" width="0.6" height="244" fill="#343434" opacity="0.35"/><rect x="516.91" y="15.2" width="0.6" height="2.8" fill="#4a4a4a"/><rect x="516.91" y="18" width="0.6" height="244" fill="#343434" opacity="0.35"/><rect x="521.12" y="15.2" width="0.6" height="2.8" fill="#4a4a4a"/><rect x="521.12" y="18" width="0.6" height="244" fill="#343434" opacity="0.35"/><rect x="525.29" y="13.4" width="0.7" height="4.6" fill="#505050"/><rect x="525.29" y="18" width="0.7" height="244" fill="#383838" opacity="0.5"/><rect x="529.55" y="15.2" width="0.6" height="2.8" fill="#4a4a4a"/><rect x="529.55" y="18" width="0.6" height="244" fill="#343434" opacity="0.35"/><rect x="533.77" y="15.2" width="0.6" height="2.8" fill="#4a4a4a"/><rect x="533.77" y="18" width="0.6" height="244" fill="#343434" opacity="0.35"/><rect x="537.98" y="15.2" width="0.6" height="2.8" fill="#4a4a4a"/><rect x="537.98" y="18" width="0.6" height="244" fill="#343434" opacity="0.35"/><rect x="542.10" y="0.8" width="0.8" height="17.2" fill="#545454"/><rect x="542.10" y="18" width="0.8" height="244" fill="#3a3a3a" opacity="0.6"/><rect x="546.42" y="15.2" width="0.6" height="2.8" fill="#4a4a4a"/><rect x="546.42" y="18" width="0.6" height="244" fill="#343434" opacity="0.35"/><rect x="550.63" y="15.2" width="0.6" height="2.8" fill="#4a4a4a"/><rect x="550.63" y="18" width="0.6" height="244" fill="#343434" opacity="0.35"/><rect x="554.85" y="15.2" width="0.6" height="2.8" fill="#4a4a4a"/><rect x="554.85" y="18" width="0.6" height="244" fill="#343434" opacity="0.35"/><rect x="559.01" y="13.4" width="0.7" height="4.6" fill="#505050"/><rect x="559.01" y="18" width="0.7" height="244" fill="#383838" opacity="0.5"/><rect x="563.28" y="15.2" width="0.6" height="2.8" fill="#4a4a4a"/><rect x="563.28" y="18" width="0.6" height="244" fill="#343434" opacity="0.35"/><rect x="567.49" y="15.2" width="0.6" height="2.8" fill="#4a4a4a"/><rect x="567.49" y="18" width="0.6" height="244" fill="#343434" opacity="0.35"/><rect x="571.71" y="15.2" width="0.6" height="2.8" fill="#4a4a4a"/><rect x="571.71" y="18" width="0.6" height="244" fill="#343434" opacity="0.35"/><rect x="575.88" y="13.4" width="0.7" height="4.6" fill="#505050"/><rect x="575.88" y="18" width="0.7" height="244" fill="#383838" opacity="0.5"/><rect x="580.14" y="15.2" width="0.6" height="2.8" fill="#4a4a4a"/><rect x="580.14" y="18" width="0.6" height="244" fill="#343434" opacity="0.35"/><rect x="584.36" y="15.2" width="0.6" height="2.8" fill="#4a4a4a"/><rect x="584.36" y="18" width="0.6" height="244" fill="#343434" opacity="0.35"/><rect x="588.57" y="15.2" width="0.6" height="2.8" fill="#4a4a4a"/><rect x="588.57" y="18" width="0.6" height="244" fill="#343434" opacity="0.35"/><rect x="592.74" y="13.4" width="0.7" height="4.6" fill="#505050"/><rect x="592.74" y="18" width="0.7" height="244" fill="#383838" opacity="0.5"/><rect x="597.00" y="15.2" width="0.6" height="2.8" fill="#4a4a4a"/><rect x="597.00" y="18" width="0.6" height="244" fill="#343434" opacity="0.35"/><rect x="601.22" y="15.2" width="0.6" height="2.8" fill="#4a4a4a"/><rect x="601.22" y="18" width="0.6" height="244" fill="#343434" opacity="0.35"/><rect x="605.43" y="15.2" width="0.6" height="2.8" fill="#4a4a4a"/><rect x="605.43" y="18" width="0.6" height="244" fill="#343434" opacity="0.35"/><rect x="609.55" y="0.8" width="0.8" height="17.2" fill="#545454"/><rect x="609.55" y="18" width="0.8" height="244" fill="#3a3a3a" opacity="0.6"/><rect x="613.87" y="15.2" width="0.6" height="2.8" fill="#4a4a4a"/><rect x="613.87" y="18" width="0.6" height="244" fill="#343434" opacity="0.35"/><rect x="618.08" y="15.2" width="0.6" height="2.8" fill="#4a4a4a"/><rect x="618.08" y="18" width="0.6" height="244" fill="#343434" opacity="0.35"/><rect x="622.30" y="15.2" width="0.6" height="2.8" fill="#4a4a4a"/><rect x="622.30" y="18" width="0.6" height="244" fill="#343434" opacity="0.35"/><rect x="626.46" y="13.4" width="0.7" height="4.6" fill="#505050"/><rect x="626.46" y="18" width="0.7" height="244" fill="#383838" opacity="0.5"/><rect x="630.73" y="15.2" width="0.6" height="2.8" fill="#4a4a4a"/><rect x="630.73" y="18" width="0.6" height="244" fill="#343434" opacity="0.35"/><rect x="634.94" y="15.2" width="0.6" height="2.8" fill="#4a4a4a"/><rect x="634.94" y="18" width="0.6" height="244" fill="#343434" opacity="0.35"/><rect x="639.16" y="15.2" width="0.6" height="2.8" fill="#4a4a4a"/><rect x="639.16" y="18" width="0.6" height="244" fill="#343434" opacity="0.35"/><rect x="643.32" y="13.4" width="0.7" height="4.6" fill="#505050"/><rect x="643.32" y="18" width="0.7" height="244" fill="#383838" opacity="0.5"/><rect x="647.59" y="15.2" width="0.6" height="2.8" fill="#4a4a4a"/><rect x="647.59" y="18" width="0.6" height="244" fill="#343434" opacity="0.35"/><rect x="651.81" y="15.2" width="0.6" height="2.8" fill="#4a4a4a"/><rect x="651.81" y="18" width="0.6" height="244" fill="#343434" opacity="0.35"/><rect x="656.02" y="15.2" width="0.6" height="2.8" fill="#4a4a4a"/><rect x="656.02" y="18" width="0.6" height="244" fill="#343434" opacity="0.35"/><rect x="660.19" y="13.4" width="0.7" height="4.6" fill="#505050"/><rect x="660.19" y="18" width="0.7" height="244" fill="#383838" opacity="0.5"/><rect x="664.45" y="15.2" width="0.6" height="2.8" fill="#4a4a4a"/><rect x="664.45" y="18" width="0.6" height="244" fill="#343434" opacity="0.35"/><rect x="668.67" y="15.2" width="0.6" height="2.8" fill="#4a4a4a"/><rect x="668.67" y="18" width="0.6" height="244" fill="#343434" opacity="0.35"/><rect x="672.88" y="15.2" width="0.6" height="2.8" fill="#4a4a4a"/><rect x="672.88" y="18" width="0.6" height="244" fill="#343434" opacity="0.35"/><rect x="677.00" y="0.8" width="0.8" height="17.2" fill="#545454"/><rect x="677.00" y="18" width="0.8" height="244" fill="#3a3a3a" opacity="0.6"/><rect x="681.32" y="15.2" width="0.6" height="2.8" fill="#4a4a4a"/><rect x="681.32" y="18" width="0.6" height="244" fill="#343434" opacity="0.35"/><rect x="685.53" y="15.2" width="0.6" height="2.8" fill="#4a4a4a"/><rect x="685.53" y="18" width="0.6" height="244" fill="#343434" opacity="0.35"/><rect x="689.75" y="15.2" width="0.6" height="2.8" fill="#4a4a4a"/><rect x="689.75" y="18" width="0.6" height="244" fill="#343434" opacity="0.35"/><rect x="693.91" y="13.4" width="0.7" height="4.6" fill="#505050"/><rect x="693.91" y="18" width="0.7" height="244" fill="#383838" opacity="0.5"/><rect x="698.18" y="15.2" width="0.6" height="2.8" fill="#4a4a4a"/><rect x="698.18" y="18" width="0.6" height="244" fill="#343434" opacity="0.35"/><rect x="702.39" y="15.2" width="0.6" height="2.8" fill="#4a4a4a"/><rect x="702.39" y="18" width="0.6" height="244" fill="#343434" opacity="0.35"/><rect x="706.61" y="15.2" width="0.6" height="2.8" fill="#4a4a4a"/><rect x="706.61" y="18" width="0.6" height="244" fill="#343434" opacity="0.35"/><rect x="710.77" y="13.4" width="0.7" height="4.6" fill="#505050"/><rect x="710.77" y="18" width="0.7" height="244" fill="#383838" opacity="0.5"/><rect x="715.04" y="15.2" width="0.6" height="2.8" fill="#4a4a4a"/><rect x="715.04" y="18" width="0.6" height="244" fill="#343434" opacity="0.35"/><rect x="719.26" y="15.2" width="0.6" height="2.8" fill="#4a4a4a"/><rect x="719.26" y="18" width="0.6" height="244" fill="#343434" opacity="0.35"/><rect x="723.47" y="15.2" width="0.6" height="2.8" fill="#4a4a4a"/><rect x="723.47" y="18" width="0.6" height="244" fill="#343434" opacity="0.35"/><rect x="727.64" y="13.4" width="0.7" height="4.6" fill="#505050"/><rect x="727.64" y="18" width="0.7" height="244" fill="#383838" opacity="0.5"/><rect x="731.90" y="15.2" width="0.6" height="2.8" fill="#4a4a4a"/><rect x="731.90" y="18" width="0.6" height="244" fill="#343434" opacity="0.35"/><rect x="736.12" y="15.2" width="0.6" height="2.8" fill="#4a4a4a"/><rect x="736.12" y="18" width="0.6" height="244" fill="#343434" opacity="0.35"/><rect x="740.33" y="15.2" width="0.6" height="2.8" fill="#4a4a4a"/><rect x="740.33" y="18" width="0.6" height="244" fill="#343434" opacity="0.35"/><rect x="744.45" y="0.8" width="0.8" height="17.2" fill="#545454"/><rect x="744.45" y="18" width="0.8" height="244" fill="#3a3a3a" opacity="0.6"/><rect x="748.77" y="15.2" width="0.6" height="2.8" fill="#4a4a4a"/><rect x="748.77" y="18" width="0.6" height="244" fill="#343434" opacity="0.35"/><rect x="752.98" y="15.2" width="0.6" height="2.8" fill="#4a4a4a"/><rect x="752.98" y="18" width="0.6" height="244" fill="#343434" opacity="0.35"/><rect x="757.20" y="15.2" width="0.6" height="2.8" fill="#4a4a4a"/><rect x="757.20" y="18" width="0.6" height="244" fill="#343434" opacity="0.35"/><rect x="761.36" y="13.4" width="0.7" height="4.6" fill="#505050"/><rect x="761.36" y="18" width="0.7" height="244" fill="#383838" opacity="0.5"/><rect x="765.63" y="15.2" width="0.6" height="2.8" fill="#4a4a4a"/><rect x="765.63" y="18" width="0.6" height="244" fill="#343434" opacity="0.35"/><rect x="769.84" y="15.2" width="0.6" height="2.8" fill="#4a4a4a"/><rect x="769.84" y="18" width="0.6" height="244" fill="#343434" opacity="0.35"/><rect x="774.06" y="15.2" width="0.6" height="2.8" fill="#4a4a4a"/><rect x="774.06" y="18" width="0.6" height="244" fill="#343434" opacity="0.35"/><rect x="778.23" y="13.4" width="0.7" height="4.6" fill="#505050"/><rect x="778.23" y="18" width="0.7" height="244" fill="#383838" opacity="0.5"/><rect x="782.49" y="15.2" width="0.6" height="2.8" fill="#4a4a4a"/><rect x="782.49" y="18" width="0.6" height="244" fill="#343434" opacity="0.35"/><rect x="786.71" y="15.2" width="0.6" height="2.8" fill="#4a4a4a"/><rect x="786.71" y="18" width="0.6" height="244" fill="#343434" opacity="0.35"/><rect x="790.92" y="15.2" width="0.6" height="2.8" fill="#4a4a4a"/><rect x="790.92" y="18" width="0.6" height="244" fill="#343434" opacity="0.35"/><rect x="795.09" y="13.4" width="0.7" height="4.6" fill="#505050"/><rect x="795.09" y="18" width="0.7" height="244" fill="#383838" opacity="0.5"/><rect x="799.35" y="15.2" width="0.6" height="2.8" fill="#4a4a4a"/><rect x="799.35" y="18" width="0.6" height="244" fill="#343434" opacity="0.35"/><rect x="803.57" y="15.2" width="0.6" height="2.8" fill="#4a4a4a"/><rect x="803.57" y="18" width="0.6" height="244" fill="#343434" opacity="0.35"/><rect x="807.78" y="15.2" width="0.6" height="2.8" fill="#4a4a4a"/><rect x="807.78" y="18" width="0.6" height="244" fill="#343434" opacity="0.35"/><rect x="811.90" y="0.8" width="0.8" height="17.2" fill="#545454"/><rect x="811.90" y="18" width="0.8" height="244" fill="#3a3a3a" opacity="0.6"/><rect x="816.22" y="15.2" width="0.6" height="2.8" fill="#4a4a4a"/><rect x="816.22" y="18" width="0.6" height="244" fill="#343434" opacity="0.35"/><rect x="820.43" y="15.2" width="0.6" height="2.8" fill="#4a4a4a"/><rect x="820.43" y="18" width="0.6" height="244" fill="#343434" opacity="0.35"/><rect x="824.65" y="15.2" width="0.6" height="2.8" fill="#4a4a4a"/><rect x="824.65" y="18" width="0.6" height="244" fill="#343434" opacity="0.35"/><rect x="828.81" y="13.4" width="0.7" height="4.6" fill="#505050"/><rect x="828.81" y="18" width="0.7" height="244" fill="#383838" opacity="0.5"/><rect x="833.08" y="15.2" width="0.6" height="2.8" fill="#4a4a4a"/><rect x="833.08" y="18" width="0.6" height="244" fill="#343434" opacity="0.35"/><rect x="837.29" y="15.2" width="0.6" height="2.8" fill="#4a4a4a"/><rect x="837.29" y="18" width="0.6" height="244" fill="#343434" opacity="0.35"/><rect x="841.51" y="15.2" width="0.6" height="2.8" fill="#4a4a4a"/><rect x="841.51" y="18" width="0.6" height="244" fill="#343434" opacity="0.35"/><rect x="845.68" y="13.4" width="0.7" height="4.6" fill="#505050"/><rect x="845.68" y="18" width="0.7" height="244" fill="#383838" opacity="0.5"/><rect x="849.94" y="15.2" width="0.6" height="2.8" fill="#4a4a4a"/><rect x="849.94" y="18" width="0.6" height="244" fill="#343434" opacity="0.35"/><rect x="854.16" y="15.2" width="0.6" height="2.8" fill="#4a4a4a"/><rect x="854.16" y="18" width="0.6" height="244" fill="#343434" opacity="0.35"/><rect x="858.37" y="15.2" width="0.6" height="2.8" fill="#4a4a4a"/><rect x="858.37" y="18" width="0.6" height="244" fill="#343434" opacity="0.35"/><rect x="862.54" y="13.4" width="0.7" height="4.6" fill="#505050"/><rect x="862.54" y="18" width="0.7" height="244" fill="#383838" opacity="0.5"/><rect x="866.80" y="15.2" width="0.6" height="2.8" fill="#4a4a4a"/><rect x="866.80" y="18" width="0.6" height="244" fill="#343434" opacity="0.35"/></svg>
<div class="t" style="left:113.50px;top:288.10px;font-size:5.2px;line-height:6.24px;color:#c8c8c8;">1</div>
<div class="t" style="left:180.95px;top:288.10px;font-size:5.2px;line-height:6.24px;color:#c8c8c8;">2</div>
<div class="t" style="left:248.40px;top:288.10px;font-size:5.2px;line-height:6.24px;color:#c8c8c8;">3</div>
<div class="t" style="left:315.85px;top:288.10px;font-size:5.2px;line-height:6.24px;color:#c8c8c8;">4</div>
<div class="t" style="left:383.30px;top:288.10px;font-size:5.2px;line-height:6.24px;color:#c8c8c8;">5</div>
<div class="t" style="left:450.75px;top:288.10px;font-size:5.2px;line-height:6.24px;color:#c8c8c8;">6</div>
<div class="t" style="left:518.20px;top:288.10px;font-size:5.2px;line-height:6.24px;color:#c8c8c8;">7</div>
<div class="t" style="left:585.65px;top:288.10px;font-size:5.2px;line-height:6.24px;color:#c8c8c8;">8</div>
<div class="t" style="left:653.10px;top:288.10px;font-size:5.2px;line-height:6.24px;color:#c8c8c8;">9</div>
<div class="t" style="left:720.55px;top:288.10px;font-size:5.2px;line-height:6.24px;color:#c8c8c8;">10</div>
<div class="t" style="left:788.00px;top:288.10px;font-size:5.2px;line-height:6.24px;color:#c8c8c8;">11</div>
<div class="t" style="left:855.45px;top:288.10px;font-size:5.2px;line-height:6.24px;color:#c8c8c8;">12</div>
<div class="t" style="left:922.90px;top:288.10px;font-size:5.2px;line-height:6.24px;color:#c8c8c8;">13</div>
<svg style="left:109.60px;top:289.40px" width="2.6" height="4" viewBox="0 0 2.6 4" preserveAspectRatio="none"><path d="M0.2 0.2L2.2 2L0.2 3.8z" fill="#777"/></svg>
<div style="left:111.20px;top:299.00px;width:1.60px;height:249.50px;background:#505050"></div>
<svg style="left:109.20px;top:297.60px" width="5.8" height="5.4" viewBox="0 0 5.8 5.4" preserveAspectRatio="none"><path d="M0.3 0.3H5.5V2.8L2.9 5.2L0.3 2.8z" fill="#dedede" stroke="#888" stroke-width="0.3"/></svg>
</div>
</body></html>
